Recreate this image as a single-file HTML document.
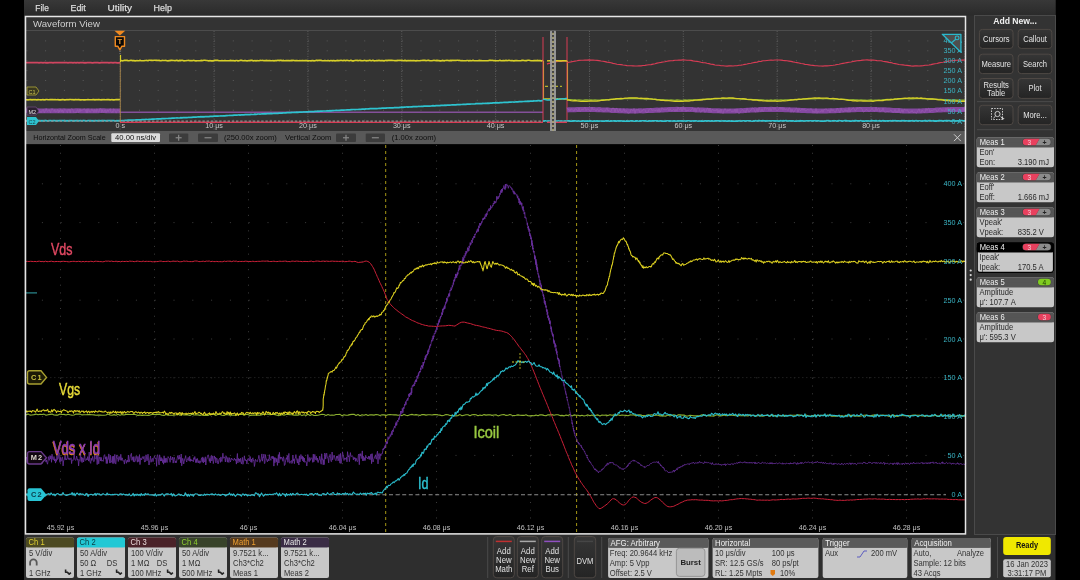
<!DOCTYPE html><html><head><meta charset="utf-8"><style>html,body{margin:0;padding:0;background:#000;width:1080px;height:580px;overflow:hidden}svg{display:block;will-change:transform}text{font-family:"Liberation Sans",sans-serif}</style></head><body><svg width="1080" height="580" viewBox="0 0 1080 580"><rect x="0" y="0" width="1080" height="580" fill="#000" rx="0" /><rect x="24" y="0" width="1031.5" height="580" fill="#2e2e2e" rx="0" /><defs><linearGradient id="mg" x1="0" y1="0" x2="0" y2="1"><stop offset="0" stop-color="#383838"/><stop offset="1" stop-color="#2a2a2a"/></linearGradient></defs><rect x="24" y="0" width="1031.5" height="15.5" fill="url(#mg)" rx="0" /><text x="35.3" y="10.8" font-size="9.6" fill="#dcdcdc" text-anchor="start" font-weight="normal" textLength="13.5" lengthAdjust="spacingAndGlyphs" stroke="#dcdcdc" stroke-width="0.25">File</text><text x="70.5" y="10.8" font-size="9.6" fill="#dcdcdc" text-anchor="start" font-weight="normal" textLength="15.3" lengthAdjust="spacingAndGlyphs" stroke="#dcdcdc" stroke-width="0.25">Edit</text><text x="107.5" y="10.8" font-size="9.6" fill="#dcdcdc" text-anchor="start" font-weight="normal" textLength="24.5" lengthAdjust="spacingAndGlyphs" stroke="#dcdcdc" stroke-width="0.25">Utility</text><text x="153.6" y="10.8" font-size="9.6" fill="#dcdcdc" text-anchor="start" font-weight="normal" textLength="18.4" lengthAdjust="spacingAndGlyphs" stroke="#dcdcdc" stroke-width="0.25">Help</text><rect x="25" y="16" width="941" height="518" fill="#333" rx="0" /><text x="33" y="27" font-size="9.65" fill="#cfcfcf" text-anchor="start" font-weight="normal" >Waveform View</text><line x1="26" y1="30.5" x2="966" y2="30.5" stroke="#4c4c4c" stroke-width="1" /><rect x="26.4" y="40.4" width="1" height="1" fill="#5a5a5a"/><rect x="45.1" y="40.4" width="1" height="1" fill="#5a5a5a"/><rect x="63.9" y="40.4" width="1" height="1" fill="#5a5a5a"/><rect x="82.7" y="40.4" width="1" height="1" fill="#5a5a5a"/><rect x="101.4" y="40.4" width="1" height="1" fill="#5a5a5a"/><rect x="120.2" y="40.4" width="1" height="1" fill="#5a5a5a"/><rect x="139.0" y="40.4" width="1" height="1" fill="#5a5a5a"/><rect x="157.7" y="40.4" width="1" height="1" fill="#5a5a5a"/><rect x="176.5" y="40.4" width="1" height="1" fill="#5a5a5a"/><rect x="195.3" y="40.4" width="1" height="1" fill="#5a5a5a"/><rect x="214.1" y="40.4" width="1" height="1" fill="#5a5a5a"/><rect x="232.8" y="40.4" width="1" height="1" fill="#5a5a5a"/><rect x="251.6" y="40.4" width="1" height="1" fill="#5a5a5a"/><rect x="270.4" y="40.4" width="1" height="1" fill="#5a5a5a"/><rect x="289.1" y="40.4" width="1" height="1" fill="#5a5a5a"/><rect x="307.9" y="40.4" width="1" height="1" fill="#5a5a5a"/><rect x="326.7" y="40.4" width="1" height="1" fill="#5a5a5a"/><rect x="345.4" y="40.4" width="1" height="1" fill="#5a5a5a"/><rect x="364.2" y="40.4" width="1" height="1" fill="#5a5a5a"/><rect x="383.0" y="40.4" width="1" height="1" fill="#5a5a5a"/><rect x="401.8" y="40.4" width="1" height="1" fill="#5a5a5a"/><rect x="420.5" y="40.4" width="1" height="1" fill="#5a5a5a"/><rect x="439.3" y="40.4" width="1" height="1" fill="#5a5a5a"/><rect x="458.1" y="40.4" width="1" height="1" fill="#5a5a5a"/><rect x="476.8" y="40.4" width="1" height="1" fill="#5a5a5a"/><rect x="495.6" y="40.4" width="1" height="1" fill="#5a5a5a"/><rect x="514.4" y="40.4" width="1" height="1" fill="#5a5a5a"/><rect x="533.1" y="40.4" width="1" height="1" fill="#5a5a5a"/><rect x="551.9" y="40.4" width="1" height="1" fill="#5a5a5a"/><rect x="570.7" y="40.4" width="1" height="1" fill="#5a5a5a"/><rect x="589.5" y="40.4" width="1" height="1" fill="#5a5a5a"/><rect x="608.2" y="40.4" width="1" height="1" fill="#5a5a5a"/><rect x="627.0" y="40.4" width="1" height="1" fill="#5a5a5a"/><rect x="645.8" y="40.4" width="1" height="1" fill="#5a5a5a"/><rect x="664.5" y="40.4" width="1" height="1" fill="#5a5a5a"/><rect x="683.3" y="40.4" width="1" height="1" fill="#5a5a5a"/><rect x="702.1" y="40.4" width="1" height="1" fill="#5a5a5a"/><rect x="720.8" y="40.4" width="1" height="1" fill="#5a5a5a"/><rect x="739.6" y="40.4" width="1" height="1" fill="#5a5a5a"/><rect x="758.4" y="40.4" width="1" height="1" fill="#5a5a5a"/><rect x="777.1" y="40.4" width="1" height="1" fill="#5a5a5a"/><rect x="795.9" y="40.4" width="1" height="1" fill="#5a5a5a"/><rect x="814.7" y="40.4" width="1" height="1" fill="#5a5a5a"/><rect x="833.5" y="40.4" width="1" height="1" fill="#5a5a5a"/><rect x="852.2" y="40.4" width="1" height="1" fill="#5a5a5a"/><rect x="871.0" y="40.4" width="1" height="1" fill="#5a5a5a"/><rect x="889.8" y="40.4" width="1" height="1" fill="#5a5a5a"/><rect x="908.5" y="40.4" width="1" height="1" fill="#5a5a5a"/><rect x="927.3" y="40.4" width="1" height="1" fill="#5a5a5a"/><rect x="946.1" y="40.4" width="1" height="1" fill="#5a5a5a"/><rect x="964.9" y="40.4" width="1" height="1" fill="#5a5a5a"/><rect x="26.4" y="50.3" width="1" height="1" fill="#5a5a5a"/><rect x="45.1" y="50.3" width="1" height="1" fill="#5a5a5a"/><rect x="63.9" y="50.3" width="1" height="1" fill="#5a5a5a"/><rect x="82.7" y="50.3" width="1" height="1" fill="#5a5a5a"/><rect x="101.4" y="50.3" width="1" height="1" fill="#5a5a5a"/><rect x="120.2" y="50.3" width="1" height="1" fill="#5a5a5a"/><rect x="139.0" y="50.3" width="1" height="1" fill="#5a5a5a"/><rect x="157.7" y="50.3" width="1" height="1" fill="#5a5a5a"/><rect x="176.5" y="50.3" width="1" height="1" fill="#5a5a5a"/><rect x="195.3" y="50.3" width="1" height="1" fill="#5a5a5a"/><rect x="214.1" y="50.3" width="1" height="1" fill="#5a5a5a"/><rect x="232.8" y="50.3" width="1" height="1" fill="#5a5a5a"/><rect x="251.6" y="50.3" width="1" height="1" fill="#5a5a5a"/><rect x="270.4" y="50.3" width="1" height="1" fill="#5a5a5a"/><rect x="289.1" y="50.3" width="1" height="1" fill="#5a5a5a"/><rect x="307.9" y="50.3" width="1" height="1" fill="#5a5a5a"/><rect x="326.7" y="50.3" width="1" height="1" fill="#5a5a5a"/><rect x="345.4" y="50.3" width="1" height="1" fill="#5a5a5a"/><rect x="364.2" y="50.3" width="1" height="1" fill="#5a5a5a"/><rect x="383.0" y="50.3" width="1" height="1" fill="#5a5a5a"/><rect x="401.8" y="50.3" width="1" height="1" fill="#5a5a5a"/><rect x="420.5" y="50.3" width="1" height="1" fill="#5a5a5a"/><rect x="439.3" y="50.3" width="1" height="1" fill="#5a5a5a"/><rect x="458.1" y="50.3" width="1" height="1" fill="#5a5a5a"/><rect x="476.8" y="50.3" width="1" height="1" fill="#5a5a5a"/><rect x="495.6" y="50.3" width="1" height="1" fill="#5a5a5a"/><rect x="514.4" y="50.3" width="1" height="1" fill="#5a5a5a"/><rect x="533.1" y="50.3" width="1" height="1" fill="#5a5a5a"/><rect x="551.9" y="50.3" width="1" height="1" fill="#5a5a5a"/><rect x="570.7" y="50.3" width="1" height="1" fill="#5a5a5a"/><rect x="589.5" y="50.3" width="1" height="1" fill="#5a5a5a"/><rect x="608.2" y="50.3" width="1" height="1" fill="#5a5a5a"/><rect x="627.0" y="50.3" width="1" height="1" fill="#5a5a5a"/><rect x="645.8" y="50.3" width="1" height="1" fill="#5a5a5a"/><rect x="664.5" y="50.3" width="1" height="1" fill="#5a5a5a"/><rect x="683.3" y="50.3" width="1" height="1" fill="#5a5a5a"/><rect x="702.1" y="50.3" width="1" height="1" fill="#5a5a5a"/><rect x="720.8" y="50.3" width="1" height="1" fill="#5a5a5a"/><rect x="739.6" y="50.3" width="1" height="1" fill="#5a5a5a"/><rect x="758.4" y="50.3" width="1" height="1" fill="#5a5a5a"/><rect x="777.1" y="50.3" width="1" height="1" fill="#5a5a5a"/><rect x="795.9" y="50.3" width="1" height="1" fill="#5a5a5a"/><rect x="814.7" y="50.3" width="1" height="1" fill="#5a5a5a"/><rect x="833.5" y="50.3" width="1" height="1" fill="#5a5a5a"/><rect x="852.2" y="50.3" width="1" height="1" fill="#5a5a5a"/><rect x="871.0" y="50.3" width="1" height="1" fill="#5a5a5a"/><rect x="889.8" y="50.3" width="1" height="1" fill="#5a5a5a"/><rect x="908.5" y="50.3" width="1" height="1" fill="#5a5a5a"/><rect x="927.3" y="50.3" width="1" height="1" fill="#5a5a5a"/><rect x="946.1" y="50.3" width="1" height="1" fill="#5a5a5a"/><rect x="964.9" y="50.3" width="1" height="1" fill="#5a5a5a"/><rect x="26.4" y="60.2" width="1" height="1" fill="#5a5a5a"/><rect x="45.1" y="60.2" width="1" height="1" fill="#5a5a5a"/><rect x="63.9" y="60.2" width="1" height="1" fill="#5a5a5a"/><rect x="82.7" y="60.2" width="1" height="1" fill="#5a5a5a"/><rect x="101.4" y="60.2" width="1" height="1" fill="#5a5a5a"/><rect x="120.2" y="60.2" width="1" height="1" fill="#5a5a5a"/><rect x="139.0" y="60.2" width="1" height="1" fill="#5a5a5a"/><rect x="157.7" y="60.2" width="1" height="1" fill="#5a5a5a"/><rect x="176.5" y="60.2" width="1" height="1" fill="#5a5a5a"/><rect x="195.3" y="60.2" width="1" height="1" fill="#5a5a5a"/><rect x="214.1" y="60.2" width="1" height="1" fill="#5a5a5a"/><rect x="232.8" y="60.2" width="1" height="1" fill="#5a5a5a"/><rect x="251.6" y="60.2" width="1" height="1" fill="#5a5a5a"/><rect x="270.4" y="60.2" width="1" height="1" fill="#5a5a5a"/><rect x="289.1" y="60.2" width="1" height="1" fill="#5a5a5a"/><rect x="307.9" y="60.2" width="1" height="1" fill="#5a5a5a"/><rect x="326.7" y="60.2" width="1" height="1" fill="#5a5a5a"/><rect x="345.4" y="60.2" width="1" height="1" fill="#5a5a5a"/><rect x="364.2" y="60.2" width="1" height="1" fill="#5a5a5a"/><rect x="383.0" y="60.2" width="1" height="1" fill="#5a5a5a"/><rect x="401.8" y="60.2" width="1" height="1" fill="#5a5a5a"/><rect x="420.5" y="60.2" width="1" height="1" fill="#5a5a5a"/><rect x="439.3" y="60.2" width="1" height="1" fill="#5a5a5a"/><rect x="458.1" y="60.2" width="1" height="1" fill="#5a5a5a"/><rect x="476.8" y="60.2" width="1" height="1" fill="#5a5a5a"/><rect x="495.6" y="60.2" width="1" height="1" fill="#5a5a5a"/><rect x="514.4" y="60.2" width="1" height="1" fill="#5a5a5a"/><rect x="533.1" y="60.2" width="1" height="1" fill="#5a5a5a"/><rect x="551.9" y="60.2" width="1" height="1" fill="#5a5a5a"/><rect x="570.7" y="60.2" width="1" height="1" fill="#5a5a5a"/><rect x="589.5" y="60.2" width="1" height="1" fill="#5a5a5a"/><rect x="608.2" y="60.2" width="1" height="1" fill="#5a5a5a"/><rect x="627.0" y="60.2" width="1" height="1" fill="#5a5a5a"/><rect x="645.8" y="60.2" width="1" height="1" fill="#5a5a5a"/><rect x="664.5" y="60.2" width="1" height="1" fill="#5a5a5a"/><rect x="683.3" y="60.2" width="1" height="1" fill="#5a5a5a"/><rect x="702.1" y="60.2" width="1" height="1" fill="#5a5a5a"/><rect x="720.8" y="60.2" width="1" height="1" fill="#5a5a5a"/><rect x="739.6" y="60.2" width="1" height="1" fill="#5a5a5a"/><rect x="758.4" y="60.2" width="1" height="1" fill="#5a5a5a"/><rect x="777.1" y="60.2" width="1" height="1" fill="#5a5a5a"/><rect x="795.9" y="60.2" width="1" height="1" fill="#5a5a5a"/><rect x="814.7" y="60.2" width="1" height="1" fill="#5a5a5a"/><rect x="833.5" y="60.2" width="1" height="1" fill="#5a5a5a"/><rect x="852.2" y="60.2" width="1" height="1" fill="#5a5a5a"/><rect x="871.0" y="60.2" width="1" height="1" fill="#5a5a5a"/><rect x="889.8" y="60.2" width="1" height="1" fill="#5a5a5a"/><rect x="908.5" y="60.2" width="1" height="1" fill="#5a5a5a"/><rect x="927.3" y="60.2" width="1" height="1" fill="#5a5a5a"/><rect x="946.1" y="60.2" width="1" height="1" fill="#5a5a5a"/><rect x="964.9" y="60.2" width="1" height="1" fill="#5a5a5a"/><rect x="26.4" y="70.1" width="1" height="1" fill="#5a5a5a"/><rect x="45.1" y="70.1" width="1" height="1" fill="#5a5a5a"/><rect x="63.9" y="70.1" width="1" height="1" fill="#5a5a5a"/><rect x="82.7" y="70.1" width="1" height="1" fill="#5a5a5a"/><rect x="101.4" y="70.1" width="1" height="1" fill="#5a5a5a"/><rect x="120.2" y="70.1" width="1" height="1" fill="#5a5a5a"/><rect x="139.0" y="70.1" width="1" height="1" fill="#5a5a5a"/><rect x="157.7" y="70.1" width="1" height="1" fill="#5a5a5a"/><rect x="176.5" y="70.1" width="1" height="1" fill="#5a5a5a"/><rect x="195.3" y="70.1" width="1" height="1" fill="#5a5a5a"/><rect x="214.1" y="70.1" width="1" height="1" fill="#5a5a5a"/><rect x="232.8" y="70.1" width="1" height="1" fill="#5a5a5a"/><rect x="251.6" y="70.1" width="1" height="1" fill="#5a5a5a"/><rect x="270.4" y="70.1" width="1" height="1" fill="#5a5a5a"/><rect x="289.1" y="70.1" width="1" height="1" fill="#5a5a5a"/><rect x="307.9" y="70.1" width="1" height="1" fill="#5a5a5a"/><rect x="326.7" y="70.1" width="1" height="1" fill="#5a5a5a"/><rect x="345.4" y="70.1" width="1" height="1" fill="#5a5a5a"/><rect x="364.2" y="70.1" width="1" height="1" fill="#5a5a5a"/><rect x="383.0" y="70.1" width="1" height="1" fill="#5a5a5a"/><rect x="401.8" y="70.1" width="1" height="1" fill="#5a5a5a"/><rect x="420.5" y="70.1" width="1" height="1" fill="#5a5a5a"/><rect x="439.3" y="70.1" width="1" height="1" fill="#5a5a5a"/><rect x="458.1" y="70.1" width="1" height="1" fill="#5a5a5a"/><rect x="476.8" y="70.1" width="1" height="1" fill="#5a5a5a"/><rect x="495.6" y="70.1" width="1" height="1" fill="#5a5a5a"/><rect x="514.4" y="70.1" width="1" height="1" fill="#5a5a5a"/><rect x="533.1" y="70.1" width="1" height="1" fill="#5a5a5a"/><rect x="551.9" y="70.1" width="1" height="1" fill="#5a5a5a"/><rect x="570.7" y="70.1" width="1" height="1" fill="#5a5a5a"/><rect x="589.5" y="70.1" width="1" height="1" fill="#5a5a5a"/><rect x="608.2" y="70.1" width="1" height="1" fill="#5a5a5a"/><rect x="627.0" y="70.1" width="1" height="1" fill="#5a5a5a"/><rect x="645.8" y="70.1" width="1" height="1" fill="#5a5a5a"/><rect x="664.5" y="70.1" width="1" height="1" fill="#5a5a5a"/><rect x="683.3" y="70.1" width="1" height="1" fill="#5a5a5a"/><rect x="702.1" y="70.1" width="1" height="1" fill="#5a5a5a"/><rect x="720.8" y="70.1" width="1" height="1" fill="#5a5a5a"/><rect x="739.6" y="70.1" width="1" height="1" fill="#5a5a5a"/><rect x="758.4" y="70.1" width="1" height="1" fill="#5a5a5a"/><rect x="777.1" y="70.1" width="1" height="1" fill="#5a5a5a"/><rect x="795.9" y="70.1" width="1" height="1" fill="#5a5a5a"/><rect x="814.7" y="70.1" width="1" height="1" fill="#5a5a5a"/><rect x="833.5" y="70.1" width="1" height="1" fill="#5a5a5a"/><rect x="852.2" y="70.1" width="1" height="1" fill="#5a5a5a"/><rect x="871.0" y="70.1" width="1" height="1" fill="#5a5a5a"/><rect x="889.8" y="70.1" width="1" height="1" fill="#5a5a5a"/><rect x="908.5" y="70.1" width="1" height="1" fill="#5a5a5a"/><rect x="927.3" y="70.1" width="1" height="1" fill="#5a5a5a"/><rect x="946.1" y="70.1" width="1" height="1" fill="#5a5a5a"/><rect x="964.9" y="70.1" width="1" height="1" fill="#5a5a5a"/><rect x="26.4" y="80.0" width="1" height="1" fill="#5a5a5a"/><rect x="45.1" y="80.0" width="1" height="1" fill="#5a5a5a"/><rect x="63.9" y="80.0" width="1" height="1" fill="#5a5a5a"/><rect x="82.7" y="80.0" width="1" height="1" fill="#5a5a5a"/><rect x="101.4" y="80.0" width="1" height="1" fill="#5a5a5a"/><rect x="120.2" y="80.0" width="1" height="1" fill="#5a5a5a"/><rect x="139.0" y="80.0" width="1" height="1" fill="#5a5a5a"/><rect x="157.7" y="80.0" width="1" height="1" fill="#5a5a5a"/><rect x="176.5" y="80.0" width="1" height="1" fill="#5a5a5a"/><rect x="195.3" y="80.0" width="1" height="1" fill="#5a5a5a"/><rect x="214.1" y="80.0" width="1" height="1" fill="#5a5a5a"/><rect x="232.8" y="80.0" width="1" height="1" fill="#5a5a5a"/><rect x="251.6" y="80.0" width="1" height="1" fill="#5a5a5a"/><rect x="270.4" y="80.0" width="1" height="1" fill="#5a5a5a"/><rect x="289.1" y="80.0" width="1" height="1" fill="#5a5a5a"/><rect x="307.9" y="80.0" width="1" height="1" fill="#5a5a5a"/><rect x="326.7" y="80.0" width="1" height="1" fill="#5a5a5a"/><rect x="345.4" y="80.0" width="1" height="1" fill="#5a5a5a"/><rect x="364.2" y="80.0" width="1" height="1" fill="#5a5a5a"/><rect x="383.0" y="80.0" width="1" height="1" fill="#5a5a5a"/><rect x="401.8" y="80.0" width="1" height="1" fill="#5a5a5a"/><rect x="420.5" y="80.0" width="1" height="1" fill="#5a5a5a"/><rect x="439.3" y="80.0" width="1" height="1" fill="#5a5a5a"/><rect x="458.1" y="80.0" width="1" height="1" fill="#5a5a5a"/><rect x="476.8" y="80.0" width="1" height="1" fill="#5a5a5a"/><rect x="495.6" y="80.0" width="1" height="1" fill="#5a5a5a"/><rect x="514.4" y="80.0" width="1" height="1" fill="#5a5a5a"/><rect x="533.1" y="80.0" width="1" height="1" fill="#5a5a5a"/><rect x="551.9" y="80.0" width="1" height="1" fill="#5a5a5a"/><rect x="570.7" y="80.0" width="1" height="1" fill="#5a5a5a"/><rect x="589.5" y="80.0" width="1" height="1" fill="#5a5a5a"/><rect x="608.2" y="80.0" width="1" height="1" fill="#5a5a5a"/><rect x="627.0" y="80.0" width="1" height="1" fill="#5a5a5a"/><rect x="645.8" y="80.0" width="1" height="1" fill="#5a5a5a"/><rect x="664.5" y="80.0" width="1" height="1" fill="#5a5a5a"/><rect x="683.3" y="80.0" width="1" height="1" fill="#5a5a5a"/><rect x="702.1" y="80.0" width="1" height="1" fill="#5a5a5a"/><rect x="720.8" y="80.0" width="1" height="1" fill="#5a5a5a"/><rect x="739.6" y="80.0" width="1" height="1" fill="#5a5a5a"/><rect x="758.4" y="80.0" width="1" height="1" fill="#5a5a5a"/><rect x="777.1" y="80.0" width="1" height="1" fill="#5a5a5a"/><rect x="795.9" y="80.0" width="1" height="1" fill="#5a5a5a"/><rect x="814.7" y="80.0" width="1" height="1" fill="#5a5a5a"/><rect x="833.5" y="80.0" width="1" height="1" fill="#5a5a5a"/><rect x="852.2" y="80.0" width="1" height="1" fill="#5a5a5a"/><rect x="871.0" y="80.0" width="1" height="1" fill="#5a5a5a"/><rect x="889.8" y="80.0" width="1" height="1" fill="#5a5a5a"/><rect x="908.5" y="80.0" width="1" height="1" fill="#5a5a5a"/><rect x="927.3" y="80.0" width="1" height="1" fill="#5a5a5a"/><rect x="946.1" y="80.0" width="1" height="1" fill="#5a5a5a"/><rect x="964.9" y="80.0" width="1" height="1" fill="#5a5a5a"/><rect x="26.4" y="89.9" width="1" height="1" fill="#5a5a5a"/><rect x="45.1" y="89.9" width="1" height="1" fill="#5a5a5a"/><rect x="63.9" y="89.9" width="1" height="1" fill="#5a5a5a"/><rect x="82.7" y="89.9" width="1" height="1" fill="#5a5a5a"/><rect x="101.4" y="89.9" width="1" height="1" fill="#5a5a5a"/><rect x="120.2" y="89.9" width="1" height="1" fill="#5a5a5a"/><rect x="139.0" y="89.9" width="1" height="1" fill="#5a5a5a"/><rect x="157.7" y="89.9" width="1" height="1" fill="#5a5a5a"/><rect x="176.5" y="89.9" width="1" height="1" fill="#5a5a5a"/><rect x="195.3" y="89.9" width="1" height="1" fill="#5a5a5a"/><rect x="214.1" y="89.9" width="1" height="1" fill="#5a5a5a"/><rect x="232.8" y="89.9" width="1" height="1" fill="#5a5a5a"/><rect x="251.6" y="89.9" width="1" height="1" fill="#5a5a5a"/><rect x="270.4" y="89.9" width="1" height="1" fill="#5a5a5a"/><rect x="289.1" y="89.9" width="1" height="1" fill="#5a5a5a"/><rect x="307.9" y="89.9" width="1" height="1" fill="#5a5a5a"/><rect x="326.7" y="89.9" width="1" height="1" fill="#5a5a5a"/><rect x="345.4" y="89.9" width="1" height="1" fill="#5a5a5a"/><rect x="364.2" y="89.9" width="1" height="1" fill="#5a5a5a"/><rect x="383.0" y="89.9" width="1" height="1" fill="#5a5a5a"/><rect x="401.8" y="89.9" width="1" height="1" fill="#5a5a5a"/><rect x="420.5" y="89.9" width="1" height="1" fill="#5a5a5a"/><rect x="439.3" y="89.9" width="1" height="1" fill="#5a5a5a"/><rect x="458.1" y="89.9" width="1" height="1" fill="#5a5a5a"/><rect x="476.8" y="89.9" width="1" height="1" fill="#5a5a5a"/><rect x="495.6" y="89.9" width="1" height="1" fill="#5a5a5a"/><rect x="514.4" y="89.9" width="1" height="1" fill="#5a5a5a"/><rect x="533.1" y="89.9" width="1" height="1" fill="#5a5a5a"/><rect x="551.9" y="89.9" width="1" height="1" fill="#5a5a5a"/><rect x="570.7" y="89.9" width="1" height="1" fill="#5a5a5a"/><rect x="589.5" y="89.9" width="1" height="1" fill="#5a5a5a"/><rect x="608.2" y="89.9" width="1" height="1" fill="#5a5a5a"/><rect x="627.0" y="89.9" width="1" height="1" fill="#5a5a5a"/><rect x="645.8" y="89.9" width="1" height="1" fill="#5a5a5a"/><rect x="664.5" y="89.9" width="1" height="1" fill="#5a5a5a"/><rect x="683.3" y="89.9" width="1" height="1" fill="#5a5a5a"/><rect x="702.1" y="89.9" width="1" height="1" fill="#5a5a5a"/><rect x="720.8" y="89.9" width="1" height="1" fill="#5a5a5a"/><rect x="739.6" y="89.9" width="1" height="1" fill="#5a5a5a"/><rect x="758.4" y="89.9" width="1" height="1" fill="#5a5a5a"/><rect x="777.1" y="89.9" width="1" height="1" fill="#5a5a5a"/><rect x="795.9" y="89.9" width="1" height="1" fill="#5a5a5a"/><rect x="814.7" y="89.9" width="1" height="1" fill="#5a5a5a"/><rect x="833.5" y="89.9" width="1" height="1" fill="#5a5a5a"/><rect x="852.2" y="89.9" width="1" height="1" fill="#5a5a5a"/><rect x="871.0" y="89.9" width="1" height="1" fill="#5a5a5a"/><rect x="889.8" y="89.9" width="1" height="1" fill="#5a5a5a"/><rect x="908.5" y="89.9" width="1" height="1" fill="#5a5a5a"/><rect x="927.3" y="89.9" width="1" height="1" fill="#5a5a5a"/><rect x="946.1" y="89.9" width="1" height="1" fill="#5a5a5a"/><rect x="964.9" y="89.9" width="1" height="1" fill="#5a5a5a"/><rect x="26.4" y="99.8" width="1" height="1" fill="#5a5a5a"/><rect x="45.1" y="99.8" width="1" height="1" fill="#5a5a5a"/><rect x="63.9" y="99.8" width="1" height="1" fill="#5a5a5a"/><rect x="82.7" y="99.8" width="1" height="1" fill="#5a5a5a"/><rect x="101.4" y="99.8" width="1" height="1" fill="#5a5a5a"/><rect x="120.2" y="99.8" width="1" height="1" fill="#5a5a5a"/><rect x="139.0" y="99.8" width="1" height="1" fill="#5a5a5a"/><rect x="157.7" y="99.8" width="1" height="1" fill="#5a5a5a"/><rect x="176.5" y="99.8" width="1" height="1" fill="#5a5a5a"/><rect x="195.3" y="99.8" width="1" height="1" fill="#5a5a5a"/><rect x="214.1" y="99.8" width="1" height="1" fill="#5a5a5a"/><rect x="232.8" y="99.8" width="1" height="1" fill="#5a5a5a"/><rect x="251.6" y="99.8" width="1" height="1" fill="#5a5a5a"/><rect x="270.4" y="99.8" width="1" height="1" fill="#5a5a5a"/><rect x="289.1" y="99.8" width="1" height="1" fill="#5a5a5a"/><rect x="307.9" y="99.8" width="1" height="1" fill="#5a5a5a"/><rect x="326.7" y="99.8" width="1" height="1" fill="#5a5a5a"/><rect x="345.4" y="99.8" width="1" height="1" fill="#5a5a5a"/><rect x="364.2" y="99.8" width="1" height="1" fill="#5a5a5a"/><rect x="383.0" y="99.8" width="1" height="1" fill="#5a5a5a"/><rect x="401.8" y="99.8" width="1" height="1" fill="#5a5a5a"/><rect x="420.5" y="99.8" width="1" height="1" fill="#5a5a5a"/><rect x="439.3" y="99.8" width="1" height="1" fill="#5a5a5a"/><rect x="458.1" y="99.8" width="1" height="1" fill="#5a5a5a"/><rect x="476.8" y="99.8" width="1" height="1" fill="#5a5a5a"/><rect x="495.6" y="99.8" width="1" height="1" fill="#5a5a5a"/><rect x="514.4" y="99.8" width="1" height="1" fill="#5a5a5a"/><rect x="533.1" y="99.8" width="1" height="1" fill="#5a5a5a"/><rect x="551.9" y="99.8" width="1" height="1" fill="#5a5a5a"/><rect x="570.7" y="99.8" width="1" height="1" fill="#5a5a5a"/><rect x="589.5" y="99.8" width="1" height="1" fill="#5a5a5a"/><rect x="608.2" y="99.8" width="1" height="1" fill="#5a5a5a"/><rect x="627.0" y="99.8" width="1" height="1" fill="#5a5a5a"/><rect x="645.8" y="99.8" width="1" height="1" fill="#5a5a5a"/><rect x="664.5" y="99.8" width="1" height="1" fill="#5a5a5a"/><rect x="683.3" y="99.8" width="1" height="1" fill="#5a5a5a"/><rect x="702.1" y="99.8" width="1" height="1" fill="#5a5a5a"/><rect x="720.8" y="99.8" width="1" height="1" fill="#5a5a5a"/><rect x="739.6" y="99.8" width="1" height="1" fill="#5a5a5a"/><rect x="758.4" y="99.8" width="1" height="1" fill="#5a5a5a"/><rect x="777.1" y="99.8" width="1" height="1" fill="#5a5a5a"/><rect x="795.9" y="99.8" width="1" height="1" fill="#5a5a5a"/><rect x="814.7" y="99.8" width="1" height="1" fill="#5a5a5a"/><rect x="833.5" y="99.8" width="1" height="1" fill="#5a5a5a"/><rect x="852.2" y="99.8" width="1" height="1" fill="#5a5a5a"/><rect x="871.0" y="99.8" width="1" height="1" fill="#5a5a5a"/><rect x="889.8" y="99.8" width="1" height="1" fill="#5a5a5a"/><rect x="908.5" y="99.8" width="1" height="1" fill="#5a5a5a"/><rect x="927.3" y="99.8" width="1" height="1" fill="#5a5a5a"/><rect x="946.1" y="99.8" width="1" height="1" fill="#5a5a5a"/><rect x="964.9" y="99.8" width="1" height="1" fill="#5a5a5a"/><rect x="26.4" y="109.7" width="1" height="1" fill="#5a5a5a"/><rect x="45.1" y="109.7" width="1" height="1" fill="#5a5a5a"/><rect x="63.9" y="109.7" width="1" height="1" fill="#5a5a5a"/><rect x="82.7" y="109.7" width="1" height="1" fill="#5a5a5a"/><rect x="101.4" y="109.7" width="1" height="1" fill="#5a5a5a"/><rect x="120.2" y="109.7" width="1" height="1" fill="#5a5a5a"/><rect x="139.0" y="109.7" width="1" height="1" fill="#5a5a5a"/><rect x="157.7" y="109.7" width="1" height="1" fill="#5a5a5a"/><rect x="176.5" y="109.7" width="1" height="1" fill="#5a5a5a"/><rect x="195.3" y="109.7" width="1" height="1" fill="#5a5a5a"/><rect x="214.1" y="109.7" width="1" height="1" fill="#5a5a5a"/><rect x="232.8" y="109.7" width="1" height="1" fill="#5a5a5a"/><rect x="251.6" y="109.7" width="1" height="1" fill="#5a5a5a"/><rect x="270.4" y="109.7" width="1" height="1" fill="#5a5a5a"/><rect x="289.1" y="109.7" width="1" height="1" fill="#5a5a5a"/><rect x="307.9" y="109.7" width="1" height="1" fill="#5a5a5a"/><rect x="326.7" y="109.7" width="1" height="1" fill="#5a5a5a"/><rect x="345.4" y="109.7" width="1" height="1" fill="#5a5a5a"/><rect x="364.2" y="109.7" width="1" height="1" fill="#5a5a5a"/><rect x="383.0" y="109.7" width="1" height="1" fill="#5a5a5a"/><rect x="401.8" y="109.7" width="1" height="1" fill="#5a5a5a"/><rect x="420.5" y="109.7" width="1" height="1" fill="#5a5a5a"/><rect x="439.3" y="109.7" width="1" height="1" fill="#5a5a5a"/><rect x="458.1" y="109.7" width="1" height="1" fill="#5a5a5a"/><rect x="476.8" y="109.7" width="1" height="1" fill="#5a5a5a"/><rect x="495.6" y="109.7" width="1" height="1" fill="#5a5a5a"/><rect x="514.4" y="109.7" width="1" height="1" fill="#5a5a5a"/><rect x="533.1" y="109.7" width="1" height="1" fill="#5a5a5a"/><rect x="551.9" y="109.7" width="1" height="1" fill="#5a5a5a"/><rect x="570.7" y="109.7" width="1" height="1" fill="#5a5a5a"/><rect x="589.5" y="109.7" width="1" height="1" fill="#5a5a5a"/><rect x="608.2" y="109.7" width="1" height="1" fill="#5a5a5a"/><rect x="627.0" y="109.7" width="1" height="1" fill="#5a5a5a"/><rect x="645.8" y="109.7" width="1" height="1" fill="#5a5a5a"/><rect x="664.5" y="109.7" width="1" height="1" fill="#5a5a5a"/><rect x="683.3" y="109.7" width="1" height="1" fill="#5a5a5a"/><rect x="702.1" y="109.7" width="1" height="1" fill="#5a5a5a"/><rect x="720.8" y="109.7" width="1" height="1" fill="#5a5a5a"/><rect x="739.6" y="109.7" width="1" height="1" fill="#5a5a5a"/><rect x="758.4" y="109.7" width="1" height="1" fill="#5a5a5a"/><rect x="777.1" y="109.7" width="1" height="1" fill="#5a5a5a"/><rect x="795.9" y="109.7" width="1" height="1" fill="#5a5a5a"/><rect x="814.7" y="109.7" width="1" height="1" fill="#5a5a5a"/><rect x="833.5" y="109.7" width="1" height="1" fill="#5a5a5a"/><rect x="852.2" y="109.7" width="1" height="1" fill="#5a5a5a"/><rect x="871.0" y="109.7" width="1" height="1" fill="#5a5a5a"/><rect x="889.8" y="109.7" width="1" height="1" fill="#5a5a5a"/><rect x="908.5" y="109.7" width="1" height="1" fill="#5a5a5a"/><rect x="927.3" y="109.7" width="1" height="1" fill="#5a5a5a"/><rect x="946.1" y="109.7" width="1" height="1" fill="#5a5a5a"/><rect x="964.9" y="109.7" width="1" height="1" fill="#5a5a5a"/><rect x="26.4" y="119.6" width="1" height="1" fill="#5a5a5a"/><rect x="45.1" y="119.6" width="1" height="1" fill="#5a5a5a"/><rect x="63.9" y="119.6" width="1" height="1" fill="#5a5a5a"/><rect x="82.7" y="119.6" width="1" height="1" fill="#5a5a5a"/><rect x="101.4" y="119.6" width="1" height="1" fill="#5a5a5a"/><rect x="120.2" y="119.6" width="1" height="1" fill="#5a5a5a"/><rect x="139.0" y="119.6" width="1" height="1" fill="#5a5a5a"/><rect x="157.7" y="119.6" width="1" height="1" fill="#5a5a5a"/><rect x="176.5" y="119.6" width="1" height="1" fill="#5a5a5a"/><rect x="195.3" y="119.6" width="1" height="1" fill="#5a5a5a"/><rect x="214.1" y="119.6" width="1" height="1" fill="#5a5a5a"/><rect x="232.8" y="119.6" width="1" height="1" fill="#5a5a5a"/><rect x="251.6" y="119.6" width="1" height="1" fill="#5a5a5a"/><rect x="270.4" y="119.6" width="1" height="1" fill="#5a5a5a"/><rect x="289.1" y="119.6" width="1" height="1" fill="#5a5a5a"/><rect x="307.9" y="119.6" width="1" height="1" fill="#5a5a5a"/><rect x="326.7" y="119.6" width="1" height="1" fill="#5a5a5a"/><rect x="345.4" y="119.6" width="1" height="1" fill="#5a5a5a"/><rect x="364.2" y="119.6" width="1" height="1" fill="#5a5a5a"/><rect x="383.0" y="119.6" width="1" height="1" fill="#5a5a5a"/><rect x="401.8" y="119.6" width="1" height="1" fill="#5a5a5a"/><rect x="420.5" y="119.6" width="1" height="1" fill="#5a5a5a"/><rect x="439.3" y="119.6" width="1" height="1" fill="#5a5a5a"/><rect x="458.1" y="119.6" width="1" height="1" fill="#5a5a5a"/><rect x="476.8" y="119.6" width="1" height="1" fill="#5a5a5a"/><rect x="495.6" y="119.6" width="1" height="1" fill="#5a5a5a"/><rect x="514.4" y="119.6" width="1" height="1" fill="#5a5a5a"/><rect x="533.1" y="119.6" width="1" height="1" fill="#5a5a5a"/><rect x="551.9" y="119.6" width="1" height="1" fill="#5a5a5a"/><rect x="570.7" y="119.6" width="1" height="1" fill="#5a5a5a"/><rect x="589.5" y="119.6" width="1" height="1" fill="#5a5a5a"/><rect x="608.2" y="119.6" width="1" height="1" fill="#5a5a5a"/><rect x="627.0" y="119.6" width="1" height="1" fill="#5a5a5a"/><rect x="645.8" y="119.6" width="1" height="1" fill="#5a5a5a"/><rect x="664.5" y="119.6" width="1" height="1" fill="#5a5a5a"/><rect x="683.3" y="119.6" width="1" height="1" fill="#5a5a5a"/><rect x="702.1" y="119.6" width="1" height="1" fill="#5a5a5a"/><rect x="720.8" y="119.6" width="1" height="1" fill="#5a5a5a"/><rect x="739.6" y="119.6" width="1" height="1" fill="#5a5a5a"/><rect x="758.4" y="119.6" width="1" height="1" fill="#5a5a5a"/><rect x="777.1" y="119.6" width="1" height="1" fill="#5a5a5a"/><rect x="795.9" y="119.6" width="1" height="1" fill="#5a5a5a"/><rect x="814.7" y="119.6" width="1" height="1" fill="#5a5a5a"/><rect x="833.5" y="119.6" width="1" height="1" fill="#5a5a5a"/><rect x="852.2" y="119.6" width="1" height="1" fill="#5a5a5a"/><rect x="871.0" y="119.6" width="1" height="1" fill="#5a5a5a"/><rect x="889.8" y="119.6" width="1" height="1" fill="#5a5a5a"/><rect x="908.5" y="119.6" width="1" height="1" fill="#5a5a5a"/><rect x="927.3" y="119.6" width="1" height="1" fill="#5a5a5a"/><rect x="946.1" y="119.6" width="1" height="1" fill="#5a5a5a"/><rect x="964.9" y="119.6" width="1" height="1" fill="#5a5a5a"/><line x1="120.2" y1="31" x2="120.2" y2="130" stroke="#5c5c5c" stroke-width="1" stroke-dasharray="1 1.5"/><line x1="214.05" y1="31" x2="214.05" y2="130" stroke="#5c5c5c" stroke-width="1" stroke-dasharray="1 1.5"/><line x1="307.9" y1="31" x2="307.9" y2="130" stroke="#5c5c5c" stroke-width="1" stroke-dasharray="1 1.5"/><line x1="401.74999999999994" y1="31" x2="401.74999999999994" y2="130" stroke="#5c5c5c" stroke-width="1" stroke-dasharray="1 1.5"/><line x1="495.59999999999997" y1="31" x2="495.59999999999997" y2="130" stroke="#5c5c5c" stroke-width="1" stroke-dasharray="1 1.5"/><line x1="589.45" y1="31" x2="589.45" y2="130" stroke="#5c5c5c" stroke-width="1" stroke-dasharray="1 1.5"/><line x1="683.3" y1="31" x2="683.3" y2="130" stroke="#5c5c5c" stroke-width="1" stroke-dasharray="1 1.5"/><line x1="777.15" y1="31" x2="777.15" y2="130" stroke="#5c5c5c" stroke-width="1" stroke-dasharray="1 1.5"/><line x1="871.0" y1="31" x2="871.0" y2="130" stroke="#5c5c5c" stroke-width="1" stroke-dasharray="1 1.5"/><line x1="964.85" y1="31" x2="964.85" y2="130" stroke="#5c5c5c" stroke-width="1" stroke-dasharray="1 1.5"/><polyline points="26.0,62.7 27.0,62.6 28.0,62.7 29.0,62.6 30.0,62.7 31.0,62.7 32.0,62.6 33.0,62.7 34.0,62.6 35.0,62.7 36.0,62.6 37.0,62.6 38.0,62.7 39.0,62.8 40.0,62.6 41.0,62.6 42.0,62.7 43.0,62.8 44.0,62.7 45.0,62.7 46.0,62.8 47.0,62.6 48.0,62.8 49.0,62.7 50.0,62.6 51.0,62.6 52.0,62.7 53.0,62.8 54.0,62.6 55.0,62.7 56.0,62.7 57.0,62.7 58.0,62.7 59.0,62.6 60.0,62.6 61.0,62.6 62.0,62.7 63.0,62.7 64.0,62.7 65.0,62.7 66.0,62.7 67.0,62.7 68.0,62.8 69.0,62.7 70.0,62.6 71.0,62.7 72.0,62.7 73.0,62.8 74.0,62.7 75.0,62.7 76.0,62.8 77.0,62.6 78.0,62.7 79.0,62.8 80.0,62.6 81.0,62.7 82.0,62.6 83.0,62.7 84.0,62.8 85.0,62.7 86.0,62.8 87.0,62.7 88.0,62.7 89.0,62.7 90.0,62.7 91.0,62.7 92.0,62.8 93.0,62.8 94.0,62.7 95.0,62.7 96.0,62.6 97.0,62.7 98.0,62.7 99.0,62.8 100.0,62.8 101.0,62.7 102.0,62.7 103.0,62.7 104.0,62.6 105.0,62.7 106.0,62.6 107.0,62.6 108.0,62.6 109.0,62.8 110.0,62.6 111.0,62.6 112.0,62.7 113.0,62.8 114.0,62.6 115.0,62.7 116.0,62.7 117.0,62.8 118.0,62.8 119.0,62.8 120.0,62.7" fill="none" stroke="#d04560" stroke-width="1.8" stroke-linejoin="round" opacity="1.0"/><polyline points="120.0,60.5 121.0,60.5 122.0,60.8 123.0,60.9 124.0,60.4 125.0,60.4 126.0,60.4 127.0,60.4 128.0,60.6 129.0,60.7 130.0,60.5 131.0,60.3 132.0,60.6 133.0,60.5 134.0,60.6 135.0,60.9 136.0,60.7 137.0,60.6 138.0,60.7 139.0,60.7 140.0,60.3 141.0,60.8 142.0,60.8 143.0,60.8 144.0,60.8 145.0,60.5 146.0,60.5 147.0,60.4 148.0,60.7 149.0,60.3 150.0,60.3 151.0,60.4 152.0,60.4 153.0,60.5 154.0,60.3 155.0,60.3 156.0,60.4 157.0,60.4 158.0,60.5 159.0,60.3 160.0,60.8 161.0,60.7 162.0,60.4 163.0,60.5 164.0,60.5 165.0,60.5 166.0,60.4 167.0,60.8 168.0,60.9 169.0,60.6 170.0,60.6 171.0,60.4 172.0,60.4 173.0,60.5 174.0,60.5 175.0,60.8 176.0,60.4 177.0,60.3 178.0,60.9 179.0,60.6 180.0,60.4 181.0,60.6 182.0,60.3 183.0,60.6 184.0,60.9 185.0,60.8 186.0,60.7 187.0,60.5 188.0,60.5 189.0,60.4 190.0,60.8 191.0,60.6 192.0,60.8 193.0,60.5 194.0,60.4 195.0,60.8 196.0,60.9 197.0,60.8 198.0,60.8 199.0,60.8 200.0,60.7 201.0,60.4 202.0,60.6 203.0,60.5 204.0,60.3 205.0,60.3 206.0,60.5 207.0,60.5 208.0,60.7 209.0,60.9 210.0,60.6 211.0,60.9 212.0,60.9 213.0,60.9 214.0,60.5 215.0,60.4 216.0,60.4 217.0,60.4 218.0,60.4 219.0,60.7 220.0,60.8 221.0,60.8 222.0,60.6 223.0,60.7 224.0,60.8 225.0,60.4 226.0,60.7 227.0,60.8 228.0,60.8 229.0,60.8 230.0,60.6 231.0,60.4 232.0,60.8 233.0,60.5 234.0,60.8 235.0,60.9 236.0,60.5 237.0,60.5 238.0,60.9 239.0,60.7 240.0,60.4 241.0,60.4 242.0,60.4 243.0,60.8 244.0,60.8 245.0,60.4 246.0,60.8 247.0,60.9 248.0,60.7 249.0,60.5 250.0,60.6 251.0,60.4 252.0,60.3 253.0,60.9 254.0,60.7 255.0,60.6 256.0,60.9 257.0,60.6 258.0,60.8 259.0,60.8 260.0,60.4 261.0,60.5 262.0,60.5 263.0,60.4 264.0,60.7 265.0,60.5 266.0,60.6 267.0,60.4 268.0,60.8 269.0,60.5 270.0,60.6 271.0,60.7 272.0,60.8 273.0,60.6 274.0,60.9 275.0,60.6 276.0,60.6 277.0,60.6 278.0,60.3 279.0,60.6 280.0,60.4 281.0,60.3 282.0,60.8 283.0,60.4 284.0,60.6 285.0,60.7 286.0,60.6 287.0,60.5 288.0,60.6 289.0,60.6 290.0,60.8 291.0,60.4 292.0,60.6 293.0,60.4 294.0,60.5 295.0,60.8 296.0,60.6 297.0,60.6 298.0,60.8 299.0,60.8 300.0,60.6 301.0,60.7 302.0,60.6 303.0,60.6 304.0,60.7 305.0,60.6 306.0,60.6 307.0,60.6 308.0,60.9 309.0,60.7 310.0,60.8 311.0,60.9 312.0,60.5 313.0,60.6 314.0,60.9 315.0,60.8 316.0,60.4 317.0,60.4 318.0,60.6 319.0,60.3 320.0,60.4 321.0,60.3 322.0,60.7 323.0,60.8 324.0,60.8 325.0,60.4 326.0,60.7 327.0,60.7 328.0,60.4 329.0,60.8 330.0,60.9 331.0,60.4 332.0,60.9 333.0,60.5 334.0,60.6 335.0,60.9 336.0,60.8 337.0,60.4 338.0,60.6 339.0,60.6 340.0,60.5 341.0,60.4 342.0,60.5 343.0,60.7 344.0,60.3 345.0,60.6 346.0,60.6 347.0,60.3 348.0,60.5 349.0,60.7 350.0,60.6 351.0,60.3 352.0,60.9 353.0,60.8 354.0,60.9 355.0,60.4 356.0,60.5 357.0,60.3 358.0,60.8 359.0,60.5 360.0,60.4 361.0,60.6 362.0,60.8 363.0,60.8 364.0,60.5 365.0,60.4 366.0,60.9 367.0,60.6 368.0,60.7 369.0,60.4 370.0,60.3 371.0,60.7 372.0,60.6 373.0,60.3 374.0,60.9 375.0,60.7 376.0,60.8 377.0,60.4 378.0,60.8 379.0,60.3 380.0,60.8 381.0,60.6 382.0,60.5 383.0,60.6 384.0,60.9 385.0,60.5 386.0,60.4 387.0,60.6 388.0,60.4 389.0,60.4 390.0,60.4 391.0,60.3 392.0,60.4 393.0,60.5 394.0,60.5 395.0,60.8 396.0,60.5 397.0,60.6 398.0,60.4 399.0,60.5 400.0,60.3 401.0,60.5 402.0,60.3 403.0,60.7 404.0,60.6 405.0,60.4 406.0,60.6 407.0,60.9 408.0,60.4 409.0,60.8 410.0,60.6 411.0,60.6 412.0,60.8 413.0,60.5 414.0,60.6 415.0,60.7 416.0,60.9 417.0,60.5 418.0,60.8 419.0,60.7 420.0,60.7 421.0,60.5 422.0,60.5 423.0,60.3 424.0,60.4 425.0,60.3 426.0,60.7 427.0,60.5 428.0,60.4 429.0,60.4 430.0,60.8 431.0,60.8 432.0,60.7 433.0,60.5 434.0,60.4 435.0,60.5 436.0,60.6 437.0,60.4 438.0,60.6 439.0,60.5 440.0,60.9 441.0,60.9 442.0,60.6 443.0,60.4 444.0,60.9 445.0,60.5 446.0,60.5 447.0,60.3 448.0,60.5 449.0,60.6 450.0,60.6 451.0,60.4 452.0,60.6 453.0,60.3 454.0,60.5 455.0,60.4 456.0,60.5 457.0,60.3 458.0,60.3 459.0,60.5 460.0,60.4 461.0,60.7 462.0,60.6 463.0,60.8 464.0,60.7 465.0,60.7 466.0,60.8 467.0,60.5 468.0,60.5 469.0,60.9 470.0,60.4 471.0,60.7 472.0,60.7 473.0,60.3 474.0,60.8 475.0,60.8 476.0,60.7 477.0,60.7 478.0,60.8 479.0,60.4 480.0,60.6 481.0,60.6 482.0,60.8 483.0,60.8 484.0,60.8 485.0,60.7 486.0,60.8 487.0,60.7 488.0,60.7 489.0,60.4 490.0,60.3 491.0,60.4 492.0,60.5 493.0,60.4 494.0,60.8 495.0,60.6 496.0,60.7 497.0,60.7 498.0,60.7 499.0,60.6 500.0,60.3 501.0,60.8 502.0,60.7 503.0,60.6 504.0,60.6 505.0,60.7 506.0,60.3 507.0,60.7 508.0,60.5 509.0,60.3 510.0,60.5 511.0,60.7 512.0,60.4 513.0,60.7 514.0,60.9 515.0,60.6 516.0,60.5 517.0,60.6 518.0,60.7 519.0,60.8 520.0,60.7 521.0,60.7 522.0,60.3 523.0,60.4 524.0,60.5 525.0,60.7 526.0,60.5 527.0,60.6 528.0,60.3 529.0,60.3 530.0,60.5 531.0,60.7 532.0,60.7 533.0,60.7 534.0,60.5 535.0,60.6 536.0,60.6 537.0,60.6 538.0,60.4 539.0,60.8 540.0,60.4 541.0,60.9 542.0,60.9 543.0,60.3" fill="none" stroke="#d8d028" stroke-width="1.6" stroke-linejoin="round" opacity="1.0"/><polyline points="26.0,99.7 27.0,99.8 28.0,99.9 29.0,99.7 30.0,99.6 31.0,99.6 32.0,99.9 33.0,99.6 34.0,99.7 35.0,99.6 36.0,99.7 37.0,99.9 38.0,99.6 39.0,99.8 40.0,99.7 41.0,99.9 42.0,99.8 43.0,99.6 44.0,99.9 45.0,99.7 46.0,99.5 47.0,99.5 48.0,99.7 49.0,99.7 50.0,99.6 51.0,99.6 52.0,99.6 53.0,99.6 54.0,99.8 55.0,99.5 56.0,99.8 57.0,99.8 58.0,99.5 59.0,99.9 60.0,99.8 61.0,99.9 62.0,99.6 63.0,99.6 64.0,99.7 65.0,99.9 66.0,99.7 67.0,99.6 68.0,99.7 69.0,99.6 70.0,99.5 71.0,99.5 72.0,99.8 73.0,99.6 74.0,99.9 75.0,99.6 76.0,99.6 77.0,99.7 78.0,99.6 79.0,99.6 80.0,99.9 81.0,99.9 82.0,99.8 83.0,99.8 84.0,99.9 85.0,99.9 86.0,99.7 87.0,99.8 88.0,99.5 89.0,99.8 90.0,99.7 91.0,99.8 92.0,99.8 93.0,99.6 94.0,99.5 95.0,99.9 96.0,99.6 97.0,99.7 98.0,99.6 99.0,99.6 100.0,99.8 101.0,99.9 102.0,99.6 103.0,99.8 104.0,99.6 105.0,99.7 106.0,99.7 107.0,99.6 108.0,99.6 109.0,99.6 110.0,99.9 111.0,99.7 112.0,99.6 113.0,99.9 114.0,99.9 115.0,99.7 116.0,99.6 117.0,99.6 118.0,99.5 119.0,99.6 120.0,99.5" fill="none" stroke="#d8d028" stroke-width="1.6" stroke-linejoin="round" opacity="1.0"/><polyline points="26.0,110.7 28.0,110.8 30.0,110.8 32.0,110.9 34.0,110.8 36.0,110.8 38.0,110.8 40.0,110.8 42.0,110.8 44.0,110.8 46.0,110.7 48.0,110.8 50.0,110.9 52.0,110.7 54.0,110.8 56.0,110.8 58.0,110.9 60.0,110.7 62.0,110.8 64.0,110.7 66.0,110.8 68.0,110.8 70.0,110.9 72.0,110.9 74.0,110.9 76.0,110.7 78.0,110.7 80.0,110.8 82.0,110.9 84.0,110.8 86.0,110.8 88.0,110.7 90.0,110.8 92.0,110.9 94.0,110.9 96.0,110.9 98.0,110.9 100.0,110.7 102.0,110.7 104.0,110.7 106.0,110.8 108.0,110.8 110.0,110.9 112.0,110.8 114.0,110.8 116.0,110.9 118.0,110.8 120.0,110.8" fill="none" stroke="#8448a0" stroke-width="4.8" stroke-linejoin="round" opacity="1.0"/><polyline points="26.0,108.8 26.7,112.0 27.4,109.6 28.1,112.6 28.8,111.4 29.5,109.9 30.2,109.2 30.9,109.7 31.6,111.4 32.3,111.7 33.0,109.1 33.7,108.9 34.4,110.9 35.1,111.2 35.8,110.3 36.5,109.6 37.2,111.2 37.9,108.6 38.6,109.9 39.3,110.6 40.0,112.8 40.7,111.4 41.4,112.5 42.1,110.7 42.8,109.6 43.5,109.7 44.2,112.8 44.9,111.7 45.6,110.0 46.3,108.7 47.0,110.8 47.7,111.6 48.4,110.4 49.1,109.7 49.9,111.5 50.6,112.7 51.3,109.6 52.0,108.8 52.7,110.1 53.4,110.5 54.1,111.6 54.8,109.5 55.5,112.1 56.2,111.9 56.9,110.8 57.6,109.5 58.3,112.9 59.0,110.0 59.7,112.2 60.4,109.6 61.1,109.6 61.8,111.9 62.5,109.9 63.2,112.8 63.9,110.8 64.6,109.4 65.3,109.6 66.0,110.4 66.7,111.5 67.4,112.8 68.1,109.2 68.8,110.3 69.5,109.5 70.2,112.9 70.9,109.2 71.6,108.8 72.3,108.9 73.0,110.3 73.7,112.6 74.4,112.5 75.1,111.8 75.8,113.0 76.5,112.7 77.2,110.0 77.9,109.4 78.6,112.7 79.3,111.9 80.0,108.7 80.7,111.5 81.4,110.3 82.1,110.2 82.8,110.1 83.5,109.3 84.2,108.6 84.9,109.8 85.6,110.1 86.3,112.8 87.0,109.1 87.7,112.8 88.4,109.5 89.1,110.2 89.8,112.2 90.5,112.2 91.2,110.5 91.9,108.8 92.6,110.7 93.3,110.2 94.0,112.6 94.7,109.4 95.4,110.2 96.1,112.5 96.9,108.7 97.6,110.4 98.3,112.2 99.0,112.0 99.7,108.8 100.4,108.8 101.1,108.9 101.8,112.6 102.5,109.7 103.2,111.9 103.9,112.6 104.6,110.1 105.3,109.8 106.0,112.8 106.7,111.3 107.4,109.8 108.1,111.8 108.8,110.0 109.5,109.8 110.2,108.6 110.9,111.9 111.6,112.6 112.3,111.4 113.0,112.8 113.7,108.7 114.4,109.6 115.1,110.7 115.8,112.8 116.5,112.8 117.2,110.3 117.9,109.7 118.6,110.5 119.3,110.8 120.0,112.7" fill="none" stroke="#9a5ab0" stroke-width="1.0" stroke-linejoin="round" opacity="0.6"/><polyline points="120.0,112.2 121.0,112.2 122.0,112.2 123.0,112.2 124.0,112.2 125.0,112.2 126.0,112.2 127.0,112.2 128.0,112.2 129.0,112.2 130.0,112.2 131.0,112.2 132.0,112.2 133.0,112.2 134.0,112.2 135.0,112.2 136.0,112.2 137.0,112.2 138.0,112.3 139.0,112.2 140.0,112.3 141.0,112.2 142.0,112.2 143.0,112.2 144.0,112.2 145.0,112.2 146.0,112.2 147.0,112.2 148.0,112.2 149.0,112.2 150.0,112.2 151.0,112.2 152.0,112.2 153.0,112.2 154.0,112.2 155.0,112.2 156.0,112.2 157.0,112.2 158.0,112.2 159.0,112.2 160.0,112.2 161.0,112.2 162.0,112.2 163.0,112.2 164.0,112.2 165.0,112.2 166.0,112.2 167.0,112.2 168.0,112.3 169.0,112.2 170.0,112.2 171.0,112.2 172.0,112.2 173.0,112.3 174.0,112.2 175.0,112.2 176.0,112.2 177.0,112.2 178.0,112.3 179.0,112.2 180.0,112.2 181.0,112.2 182.0,112.2 183.0,112.3 184.0,112.2 185.0,112.3 186.0,112.2 187.0,112.3 188.0,112.2 189.0,112.2 190.0,112.2 191.0,112.3 192.0,112.2 193.0,112.2 194.0,112.2 195.0,112.2 196.0,112.2 197.0,112.2 198.0,112.2 199.0,112.2 200.0,112.2 201.0,112.2 202.0,112.2 203.0,112.2 204.0,112.2 205.0,112.2 206.0,112.2 207.0,112.2 208.0,112.2 209.0,112.3 210.0,112.2 211.0,112.2 212.0,112.2 213.0,112.2 214.0,112.2 215.0,112.2 216.0,112.2 217.0,112.2 218.0,112.2 219.0,112.2 220.0,112.2 221.0,112.2 222.0,112.3 223.0,112.2 224.0,112.2 225.0,112.2 226.0,112.2 227.0,112.3 228.0,112.3 229.0,112.2 230.0,112.2 231.0,112.2 232.0,112.2 233.0,112.2 234.0,112.3 235.0,112.2 236.0,112.3 237.0,112.2 238.0,112.3 239.0,112.2 240.0,112.2 241.0,112.2 242.0,112.2 243.0,112.2 244.0,112.3 245.0,112.2 246.0,112.2 247.0,112.2 248.0,112.2 249.0,112.2 250.0,112.2 251.0,112.2 252.0,112.3 253.0,112.2 254.0,112.2 255.0,112.3 256.0,112.3 257.0,112.2 258.0,112.2 259.0,112.3 260.0,112.3 261.0,112.2 262.0,112.2 263.0,112.3 264.0,112.2 265.0,112.3 266.0,112.2 267.0,112.3 268.0,112.2 269.0,112.3 270.0,112.2 271.0,112.2 272.0,112.3 273.0,112.3 274.0,112.2 275.0,112.2 276.0,112.2 277.0,112.2 278.0,112.2 279.0,112.2 280.0,112.2 281.0,112.3 282.0,112.3 283.0,112.2 284.0,112.2 285.0,112.3 286.0,112.2 287.0,112.3 288.0,112.2 289.0,112.2 290.0,112.2 291.0,112.3 292.0,112.2 293.0,112.2 294.0,112.2 295.0,112.2 296.0,112.3 297.0,112.2 298.0,112.2 299.0,112.2 300.0,112.3 301.0,112.2 302.0,112.2 303.0,112.3 304.0,112.3 305.0,112.2 306.0,112.2 307.0,112.2 308.0,112.2 309.0,112.2 310.0,112.2 311.0,112.2 312.0,112.2 313.0,112.2 314.0,112.2 315.0,112.3 316.0,112.2 317.0,112.3 318.0,112.3 319.0,112.2 320.0,112.2 321.0,112.2 322.0,112.2 323.0,112.3 324.0,112.2 325.0,112.3 326.0,112.3 327.0,112.3 328.0,112.3 329.0,112.2 330.0,112.3 331.0,112.2 332.0,112.3 333.0,112.3 334.0,112.2 335.0,112.3 336.0,112.3 337.0,112.2 338.0,112.2 339.0,112.3 340.0,112.2 341.0,112.3 342.0,112.2 343.0,112.3 344.0,112.2 345.0,112.3 346.0,112.3 347.0,112.2 348.0,112.2 349.0,112.3 350.0,112.2 351.0,112.2 352.0,112.2 353.0,112.2 354.0,112.3 355.0,112.3 356.0,112.3 357.0,112.2 358.0,112.3 359.0,112.2 360.0,112.3 361.0,112.3 362.0,112.2 363.0,112.3 364.0,112.3 365.0,112.3 366.0,112.3 367.0,112.2 368.0,112.3 369.0,112.3 370.0,112.2 371.0,112.3 372.0,112.2 373.0,112.3 374.0,112.3 375.0,112.2 376.0,112.3 377.0,112.3 378.0,112.2 379.0,112.3 380.0,112.2 381.0,112.3 382.0,112.2 383.0,112.3 384.0,112.3 385.0,112.3 386.0,112.3 387.0,112.2 388.0,112.2 389.0,112.2 390.0,112.2 391.0,112.3 392.0,112.3 393.0,112.3 394.0,112.3 395.0,112.2 396.0,112.2 397.0,112.3 398.0,112.2 399.0,112.2 400.0,112.3 401.0,112.2 402.0,112.3 403.0,112.2 404.0,112.3 405.0,112.3 406.0,112.2 407.0,112.3 408.0,112.3 409.0,112.2 410.0,112.3 411.0,112.2 412.0,112.2 413.0,112.2 414.0,112.3 415.0,112.3 416.0,112.3 417.0,112.3 418.0,112.2 419.0,112.2 420.0,112.3 421.0,112.3 422.0,112.3 423.0,112.3 424.0,112.3 425.0,112.3 426.0,112.3 427.0,112.2 428.0,112.3 429.0,112.2 430.0,112.3 431.0,112.3 432.0,112.2 433.0,112.2 434.0,112.3 435.0,112.2 436.0,112.3 437.0,112.3 438.0,112.2 439.0,112.2 440.0,112.3 441.0,112.3 442.0,112.3 443.0,112.3 444.0,112.2 445.0,112.3 446.0,112.3 447.0,112.2 448.0,112.3 449.0,112.3 450.0,112.3 451.0,112.2 452.0,112.3 453.0,112.3 454.0,112.3 455.0,112.3 456.0,112.3 457.0,112.3 458.0,112.2 459.0,112.3 460.0,112.2 461.0,112.3 462.0,112.3 463.0,112.3 464.0,112.3 465.0,112.3 466.0,112.3 467.0,112.3 468.0,112.3 469.0,112.3 470.0,112.3 471.0,112.3 472.0,112.3 473.0,112.3 474.0,112.3 475.0,112.3 476.0,112.2 477.0,112.3 478.0,112.3 479.0,112.3 480.0,112.3 481.0,112.3 482.0,112.3 483.0,112.3 484.0,112.3 485.0,112.3 486.0,112.3 487.0,112.3 488.0,112.3 489.0,112.3 490.0,112.3 491.0,112.3 492.0,112.3 493.0,112.3 494.0,112.3 495.0,112.3 496.0,112.3 497.0,112.3 498.0,112.3 499.0,112.3 500.0,112.3 501.0,112.2 502.0,112.3 503.0,112.3 504.0,112.2 505.0,112.3 506.0,112.3 507.0,112.3 508.0,112.3 509.0,112.2 510.0,112.2 511.0,112.3 512.0,112.3 513.0,112.3 514.0,112.3 515.0,112.2 516.0,112.3 517.0,112.3 518.0,112.3 519.0,112.3 520.0,112.3 521.0,112.3 522.0,112.3 523.0,112.3 524.0,112.3 525.0,112.3 526.0,112.3 527.0,112.3 528.0,112.2 529.0,112.3 530.0,112.3 531.0,112.3 532.0,112.3 533.0,112.3 534.0,112.3 535.0,112.3 536.0,112.3 537.0,112.3 538.0,112.3 539.0,112.3 540.0,112.3 541.0,112.3 542.0,112.3 543.0,112.3" fill="none" stroke="#84509a" stroke-width="1.4" stroke-linejoin="round" opacity="1.0"/><polyline points="26.0,120.8 27.0,120.7 28.0,120.7 29.0,120.8 30.0,120.7 31.0,120.8 32.0,120.7 33.0,120.6 34.0,120.7 35.0,120.7 36.0,120.8 37.0,120.7 38.0,120.7 39.0,120.7 40.0,120.6 41.0,120.8 42.0,120.6 43.0,120.8 44.0,120.6 45.0,120.6 46.0,120.6 47.0,120.8 48.0,120.8 49.0,120.6 50.0,120.7 51.0,120.7 52.0,120.8 53.0,120.6 54.0,120.7 55.0,120.7 56.0,120.8 57.0,120.6 58.0,120.8 59.0,120.6 60.0,120.6 61.0,120.7 62.0,120.7 63.0,120.6 64.0,120.7 65.0,120.6 66.0,120.8 67.0,120.7 68.0,120.8 69.0,120.7 70.0,120.7 71.0,120.7 72.0,120.7 73.0,120.8 74.0,120.6 75.0,120.8 76.0,120.6 77.0,120.6 78.0,120.6 79.0,120.8 80.0,120.7 81.0,120.7 82.0,120.8 83.0,120.6 84.0,120.7 85.0,120.7 86.0,120.8 87.0,120.8 88.0,120.7 89.0,120.7 90.0,120.7 91.0,120.6 92.0,120.8 93.0,120.7 94.0,120.8 95.0,120.6 96.0,120.7 97.0,120.8 98.0,120.7 99.0,120.6 100.0,120.7 101.0,120.8 102.0,120.6 103.0,120.6 104.0,120.7 105.0,120.7 106.0,120.8 107.0,120.6 108.0,120.6 109.0,120.6 110.0,120.7 111.0,120.7 112.0,120.6 113.0,120.7 114.0,120.6 115.0,120.8 116.0,120.8 117.0,120.6 118.0,120.8 119.0,120.6 120.0,120.7 121.0,120.8 122.0,120.7 123.0,120.6 124.0,120.5 125.0,120.4 126.0,120.4 127.0,120.3 128.0,120.2 129.0,120.2 130.0,120.1 131.0,120.2 132.0,120.2 133.0,120.1 134.0,120.0 135.0,120.0 136.0,119.9 137.0,119.8 138.0,119.9 139.0,119.8 140.0,119.8 141.0,119.8 142.0,119.6 143.0,119.6 144.0,119.6 145.0,119.5 146.0,119.4 147.0,119.5 148.0,119.5 149.0,119.4 150.0,119.3 151.0,119.3 152.0,119.2 153.0,119.2 154.0,119.1 155.0,119.0 156.0,119.0 157.0,118.8 158.0,118.9 159.0,118.9 160.0,118.9 161.0,118.8 162.0,118.6 163.0,118.6 164.0,118.6 165.0,118.6 166.0,118.5 167.0,118.5 168.0,118.5 169.0,118.3 170.0,118.4 171.0,118.3 172.0,118.2 173.0,118.2 174.0,118.2 175.0,118.0 176.0,118.0 177.0,117.9 178.0,118.0 179.0,118.0 180.0,117.9 181.0,117.7 182.0,117.8 183.0,117.7 184.0,117.7 185.0,117.6 186.0,117.6 187.0,117.6 188.0,117.5 189.0,117.4 190.0,117.5 191.0,117.3 192.0,117.3 193.0,117.2 194.0,117.2 195.0,117.0 196.0,117.2 197.0,117.0 198.0,116.9 199.0,116.9 200.0,116.9 201.0,116.7 202.0,116.8 203.0,116.7 204.0,116.8 205.0,116.6 206.0,116.6 207.0,116.5 208.0,116.6 209.0,116.6 210.0,116.4 211.0,116.3 212.0,116.4 213.0,116.3 214.0,116.2 215.0,116.1 216.0,116.2 217.0,116.2 218.0,116.1 219.0,116.0 220.0,116.0 221.0,115.8 222.0,116.0 223.0,115.8 224.0,115.8 225.0,115.8 226.0,115.7 227.0,115.6 228.0,115.5 229.0,115.5 230.0,115.4 231.0,115.5 232.0,115.3 233.0,115.4 234.0,115.2 235.0,115.2 236.0,115.1 237.0,115.1 238.0,115.0 239.0,114.9 240.0,115.1 241.0,114.9 242.0,114.8 243.0,114.8 244.0,114.8 245.0,114.7 246.0,114.7 247.0,114.7 248.0,114.6 249.0,114.7 250.0,114.6 251.0,114.4 252.0,114.5 253.0,114.5 254.0,114.4 255.0,114.2 256.0,114.3 257.0,114.2 258.0,114.0 259.0,114.0 260.0,114.2 261.0,114.0 262.0,113.9 263.0,113.8 264.0,113.8 265.0,113.7 266.0,113.8 267.0,113.7 268.0,113.6 269.0,113.7 270.0,113.6 271.0,113.4 272.0,113.6 273.0,113.5 274.0,113.4 275.0,113.4 276.0,113.4 277.0,113.3 278.0,113.3 279.0,113.1 280.0,113.1 281.0,113.1 282.0,113.1 283.0,112.9 284.0,113.0 285.0,112.9 286.0,112.8 287.0,112.7 288.0,112.6 289.0,112.7 290.0,112.5 291.0,112.6 292.0,112.4 293.0,112.5 294.0,112.4 295.0,112.4 296.0,112.4 297.0,112.2 298.0,112.3 299.0,112.2 300.0,112.2 301.0,112.1 302.0,112.1 303.0,112.0 304.0,111.9 305.0,112.0 306.0,111.8 307.0,111.8 308.0,111.8 309.0,111.6 310.0,111.7 311.0,111.7 312.0,111.7 313.0,111.5 314.0,111.6 315.0,111.4 316.0,111.4 317.0,111.4 318.0,111.2 319.0,111.3 320.0,111.2 321.0,111.1 322.0,111.2 323.0,111.0 324.0,111.0 325.0,111.0 326.0,111.0 327.0,110.8 328.0,110.8 329.0,110.8 330.0,110.7 331.0,110.8 332.0,110.6 333.0,110.7 334.0,110.5 335.0,110.5 336.0,110.4 337.0,110.4 338.0,110.5 339.0,110.3 340.0,110.3 341.0,110.2 342.0,110.1 343.0,110.1 344.0,110.1 345.0,110.0 346.0,110.0 347.0,109.8 348.0,109.9 349.0,109.9 350.0,109.8 351.0,109.6 352.0,109.6 353.0,109.5 354.0,109.5 355.0,109.6 356.0,109.5 357.0,109.5 358.0,109.5 359.0,109.4 360.0,109.3 361.0,109.3 362.0,109.2 363.0,109.2 364.0,109.1 365.0,109.1 366.0,108.9 367.0,109.0 368.0,108.9 369.0,108.9 370.0,108.7 371.0,108.7 372.0,108.6 373.0,108.7 374.0,108.7 375.0,108.6 376.0,108.5 377.0,108.6 378.0,108.5 379.0,108.4 380.0,108.3 381.0,108.3 382.0,108.2 383.0,108.2 384.0,108.1 385.0,108.1 386.0,108.2 387.0,107.9 388.0,108.0 389.0,107.8 390.0,107.8 391.0,107.9 392.0,107.8 393.0,107.8 394.0,107.7 395.0,107.5 396.0,107.6 397.0,107.6 398.0,107.6 399.0,107.6 400.0,107.4 401.0,107.3 402.0,107.2 403.0,107.3 404.0,107.1 405.0,107.1 406.0,107.0 407.0,106.9 408.0,107.1 409.0,106.9 410.0,107.0 411.0,106.8 412.0,106.9 413.0,106.7 414.0,106.6 415.0,106.7 416.0,106.6 417.0,106.6 418.0,106.5 419.0,106.4 420.0,106.5 421.0,106.4 422.0,106.4 423.0,106.4 424.0,106.2 425.0,106.2 426.0,106.2 427.0,106.1 428.0,106.2 429.0,106.0 430.0,106.1 431.0,106.0 432.0,105.8 433.0,105.7 434.0,105.8 435.0,105.8 436.0,105.6 437.0,105.6 438.0,105.6 439.0,105.5 440.0,105.6 441.0,105.4 442.0,105.3 443.0,105.3 444.0,105.3 445.0,105.2 446.0,105.3 447.0,105.1 448.0,105.2 449.0,105.0 450.0,105.1 451.0,105.0 452.0,104.9 453.0,104.8 454.0,104.9 455.0,104.9 456.0,104.8 457.0,104.7 458.0,104.6 459.0,104.5 460.0,104.7 461.0,104.5 462.0,104.5 463.0,104.4 464.0,104.4 465.0,104.4 466.0,104.3 467.0,104.2 468.0,104.1 469.0,104.1 470.0,104.2 471.0,104.0 472.0,104.0 473.0,104.0 474.0,104.0 475.0,103.9 476.0,103.7 477.0,103.6 478.0,103.6 479.0,103.6 480.0,103.6 481.0,103.6 482.0,103.6 483.0,103.3 484.0,103.5 485.0,103.4 486.0,103.4 487.0,103.3 488.0,103.2 489.0,103.3 490.0,103.2 491.0,103.1 492.0,103.1 493.0,102.9 494.0,102.8 495.0,102.9 496.0,102.9 497.0,102.7 498.0,102.8 499.0,102.8 500.0,102.6 501.0,102.6 502.0,102.6 503.0,102.5 504.0,102.4 505.0,102.3 506.0,102.4 507.0,102.4 508.0,102.3 509.0,102.1 510.0,102.2 511.0,102.2 512.0,102.0 513.0,102.0 514.0,102.1 515.0,102.0 516.0,101.9 517.0,101.8 518.0,101.8 519.0,101.7 520.0,101.6 521.0,101.6 522.0,101.6 523.0,101.5 524.0,101.5 525.0,101.4 526.0,101.4 527.0,101.3 528.0,101.2 529.0,101.4 530.0,101.2 531.0,101.1 532.0,101.2 533.0,101.1 534.0,100.9 535.0,101.0 536.0,100.9 537.0,100.9 538.0,100.7 539.0,100.7 540.0,100.9 541.0,100.8 542.0,100.6 543.0,100.6" fill="none" stroke="#2ec3d0" stroke-width="1.7" stroke-linejoin="round" opacity="1.0"/><polyline points="120.0,122.3 121.0,122.4 122.0,122.3 123.0,122.4 124.0,122.4 125.0,122.4 126.0,122.4 127.0,122.3 128.0,122.2 129.0,122.2 130.0,122.2 131.0,122.2 132.0,122.2 133.0,122.3 134.0,122.4 135.0,122.3 136.0,122.4 137.0,122.4 138.0,122.2 139.0,122.3 140.0,122.3 141.0,122.2 142.0,122.4 143.0,122.3 144.0,122.3 145.0,122.3 146.0,122.4 147.0,122.3 148.0,122.3 149.0,122.3 150.0,122.2 151.0,122.4 152.0,122.4 153.0,122.2 154.0,122.2 155.0,122.3 156.0,122.3 157.0,122.4 158.0,122.4 159.0,122.4 160.0,122.2 161.0,122.4 162.0,122.3 163.0,122.3 164.0,122.4 165.0,122.2 166.0,122.2 167.0,122.4 168.0,122.4 169.0,122.3 170.0,122.3 171.0,122.3 172.0,122.4 173.0,122.2 174.0,122.3 175.0,122.3 176.0,122.2 177.0,122.3 178.0,122.2 179.0,122.2 180.0,122.2 181.0,122.3 182.0,122.2 183.0,122.3 184.0,122.2 185.0,122.2 186.0,122.4 187.0,122.2 188.0,122.4 189.0,122.4 190.0,122.4 191.0,122.2 192.0,122.3 193.0,122.2 194.0,122.4 195.0,122.4 196.0,122.3 197.0,122.3 198.0,122.3 199.0,122.4 200.0,122.3 201.0,122.3 202.0,122.2 203.0,122.2 204.0,122.2 205.0,122.3 206.0,122.3 207.0,122.2 208.0,122.4 209.0,122.3 210.0,122.3 211.0,122.2 212.0,122.3 213.0,122.4 214.0,122.3 215.0,122.2 216.0,122.3 217.0,122.3 218.0,122.4 219.0,122.2 220.0,122.4 221.0,122.2 222.0,122.4 223.0,122.3 224.0,122.2 225.0,122.3 226.0,122.3 227.0,122.3 228.0,122.2 229.0,122.3 230.0,122.4 231.0,122.4 232.0,122.4 233.0,122.2 234.0,122.3 235.0,122.4 236.0,122.2 237.0,122.3 238.0,122.3 239.0,122.4 240.0,122.2 241.0,122.4 242.0,122.3 243.0,122.2 244.0,122.2 245.0,122.4 246.0,122.3 247.0,122.2 248.0,122.3 249.0,122.4 250.0,122.2 251.0,122.3 252.0,122.2 253.0,122.2 254.0,122.4 255.0,122.3 256.0,122.2 257.0,122.2 258.0,122.2 259.0,122.3 260.0,122.3 261.0,122.3 262.0,122.2 263.0,122.3 264.0,122.3 265.0,122.4 266.0,122.3 267.0,122.2 268.0,122.2 269.0,122.3 270.0,122.3 271.0,122.3 272.0,122.2 273.0,122.4 274.0,122.3 275.0,122.4 276.0,122.4 277.0,122.3 278.0,122.2 279.0,122.4 280.0,122.3 281.0,122.4 282.0,122.3 283.0,122.2 284.0,122.4 285.0,122.3 286.0,122.2 287.0,122.3 288.0,122.3 289.0,122.2 290.0,122.3 291.0,122.3 292.0,122.3 293.0,122.2 294.0,122.3 295.0,122.4 296.0,122.4 297.0,122.3 298.0,122.3 299.0,122.3 300.0,122.4 301.0,122.2 302.0,122.4 303.0,122.4 304.0,122.3 305.0,122.3 306.0,122.3 307.0,122.3 308.0,122.2 309.0,122.4 310.0,122.2 311.0,122.2 312.0,122.2 313.0,122.3 314.0,122.4 315.0,122.2 316.0,122.2 317.0,122.3 318.0,122.2 319.0,122.2 320.0,122.3 321.0,122.3 322.0,122.3 323.0,122.3 324.0,122.2 325.0,122.4 326.0,122.3 327.0,122.2 328.0,122.2 329.0,122.3 330.0,122.3 331.0,122.3 332.0,122.2 333.0,122.3 334.0,122.2 335.0,122.3 336.0,122.4 337.0,122.2 338.0,122.3 339.0,122.3 340.0,122.2 341.0,122.4 342.0,122.4 343.0,122.3 344.0,122.3 345.0,122.4 346.0,122.3 347.0,122.3 348.0,122.4 349.0,122.4 350.0,122.3 351.0,122.2 352.0,122.3 353.0,122.3 354.0,122.4 355.0,122.4 356.0,122.4 357.0,122.4 358.0,122.4 359.0,122.2 360.0,122.3 361.0,122.4 362.0,122.4 363.0,122.2 364.0,122.3 365.0,122.3 366.0,122.3 367.0,122.3 368.0,122.2 369.0,122.3 370.0,122.3 371.0,122.2 372.0,122.2 373.0,122.4 374.0,122.4 375.0,122.4 376.0,122.3 377.0,122.4 378.0,122.4 379.0,122.4 380.0,122.2 381.0,122.3 382.0,122.3 383.0,122.3 384.0,122.3 385.0,122.3 386.0,122.4 387.0,122.3 388.0,122.3 389.0,122.3 390.0,122.3 391.0,122.4 392.0,122.3 393.0,122.3 394.0,122.3 395.0,122.2 396.0,122.3 397.0,122.4 398.0,122.3 399.0,122.3 400.0,122.3 401.0,122.3 402.0,122.2 403.0,122.2 404.0,122.2 405.0,122.3 406.0,122.3 407.0,122.3 408.0,122.2 409.0,122.2 410.0,122.3 411.0,122.4 412.0,122.3 413.0,122.3 414.0,122.3 415.0,122.2 416.0,122.3 417.0,122.3 418.0,122.3 419.0,122.3 420.0,122.3 421.0,122.3 422.0,122.2 423.0,122.2 424.0,122.3 425.0,122.3 426.0,122.3 427.0,122.2 428.0,122.3 429.0,122.4 430.0,122.2 431.0,122.3 432.0,122.3 433.0,122.3 434.0,122.4 435.0,122.3 436.0,122.4 437.0,122.2 438.0,122.2 439.0,122.4 440.0,122.3 441.0,122.2 442.0,122.3 443.0,122.3 444.0,122.3 445.0,122.2 446.0,122.2 447.0,122.4 448.0,122.3 449.0,122.2 450.0,122.3 451.0,122.3 452.0,122.3 453.0,122.3 454.0,122.4 455.0,122.4 456.0,122.3 457.0,122.3 458.0,122.3 459.0,122.4 460.0,122.3 461.0,122.4 462.0,122.3 463.0,122.4 464.0,122.2 465.0,122.4 466.0,122.2 467.0,122.4 468.0,122.3 469.0,122.3 470.0,122.4 471.0,122.3 472.0,122.3 473.0,122.4 474.0,122.4 475.0,122.3 476.0,122.3 477.0,122.3 478.0,122.3 479.0,122.3 480.0,122.3 481.0,122.3 482.0,122.3 483.0,122.3 484.0,122.3 485.0,122.4 486.0,122.4 487.0,122.3 488.0,122.3 489.0,122.2 490.0,122.3 491.0,122.2 492.0,122.3 493.0,122.3 494.0,122.2 495.0,122.4 496.0,122.3 497.0,122.4 498.0,122.4 499.0,122.4 500.0,122.2 501.0,122.3 502.0,122.4 503.0,122.2 504.0,122.2 505.0,122.3 506.0,122.3 507.0,122.4 508.0,122.4 509.0,122.3 510.0,122.4 511.0,122.3 512.0,122.3 513.0,122.3 514.0,122.3 515.0,122.3 516.0,122.3 517.0,122.3 518.0,122.4 519.0,122.3 520.0,122.3 521.0,122.2 522.0,122.3 523.0,122.3 524.0,122.3 525.0,122.3 526.0,122.4 527.0,122.4 528.0,122.3 529.0,122.3 530.0,122.3 531.0,122.4 532.0,122.3 533.0,122.3 534.0,122.4 535.0,122.2 536.0,122.3 537.0,122.4 538.0,122.4 539.0,122.3 540.0,122.2 541.0,122.4 542.0,122.3 543.0,122.4" fill="none" stroke="#d83c55" stroke-width="1.4" stroke-linejoin="round" opacity="1.0"/><line x1="26" y1="121.1" x2="966" y2="121.1" stroke="#8e8e8e" stroke-width="1.3" stroke-dasharray="2.4 1.8"/><line x1="543.5" y1="60.8" x2="543.5" y2="99" stroke="#d8d028" stroke-width="1.1" /><line x1="567.5" y1="60.8" x2="567.5" y2="99" stroke="#d8d028" stroke-width="1.1" /><line x1="543" y1="37" x2="543" y2="122" stroke="#d83c55" stroke-width="1.0" /><line x1="567" y1="37" x2="567" y2="122" stroke="#d83c55" stroke-width="1.0" /><polyline points="543.0,99.2 544.0,99.2 545.0,99.0 546.0,98.9 547.0,98.9 548.0,99.0 549.0,99.0 550.0,98.9 551.0,98.9 552.0,99.1 553.0,99.0 554.0,98.9 555.0,99.2 556.0,99.1 557.0,98.8 558.0,99.0 559.0,99.1 560.0,98.9 561.0,99.1 562.0,98.8 563.0,98.9 564.0,99.1 565.0,99.0 566.0,99.1 567.0,98.9" fill="none" stroke="#d8d028" stroke-width="1.4" stroke-linejoin="round" opacity="1.0"/><polyline points="547.0,64.0 548.0,63.7 549.0,63.4 550.0,63.2 551.0,62.9 552.0,62.8 553.0,62.4 554.0,62.0 555.0,61.6 556.0,61.4 557.0,61.5 558.0,61.2 559.0,61.1 560.0,61.1 561.0,61.2 562.0,61.2 563.0,61.1 564.0,61.1 565.0,60.8 566.0,60.7 567.0,60.9" fill="none" stroke="#d83c55" stroke-width="1.4" stroke-linejoin="round" opacity="1.0"/><polyline points="547.0,60.7 548.0,60.9 549.0,60.7 550.0,60.7 551.0,60.7 552.0,60.6 553.0,61.0 554.0,60.8 555.0,60.7 556.0,60.8 557.0,60.8 558.0,60.6 559.0,61.0 560.0,60.8 561.0,61.0 562.0,60.8 563.0,60.8 564.0,60.7 565.0,60.6 566.0,61.0 567.0,60.9" fill="none" stroke="#d8d028" stroke-width="1.4" stroke-linejoin="round" opacity="1.0"/><polyline points="543.0,98.9 544.0,99.4 545.0,99.6 546.0,99.7 547.0,100.0 548.0,100.1 549.0,99.8 550.0,100.0 551.0,99.6 552.0,99.6 553.0,99.6 554.0,99.4 555.0,99.3 556.0,99.5 557.0,99.2 558.0,99.3 559.0,99.0 560.0,98.9 561.0,98.9 562.0,98.7 563.0,99.0 564.0,98.6 565.0,98.7 566.0,98.4 567.0,98.5" fill="none" stroke="#2ec3d0" stroke-width="1.4" stroke-linejoin="round" opacity="1.0"/><polyline points="543.0,121.0 544.0,121.0 545.0,120.8 546.0,120.8 547.0,121.1 548.0,120.9 549.0,120.9 550.0,120.9 551.0,120.9 552.0,120.9 553.0,120.8 554.0,121.1 555.0,120.9 556.0,120.9 557.0,121.1 558.0,120.8 559.0,120.9 560.0,121.1 561.0,120.9 562.0,121.0 563.0,121.1 564.0,121.1 565.0,120.9 566.0,120.9 567.0,121.1" fill="none" stroke="#2ec3d0" stroke-width="1.4" stroke-linejoin="round" opacity="1.0"/><polyline points="547.0,122.3 548.0,122.4 549.0,122.2 550.0,122.4 551.0,122.3 552.0,122.2 553.0,122.3 554.0,122.2 555.0,122.3 556.0,122.3 557.0,122.4 558.0,122.3 559.0,122.3 560.0,122.2 561.0,122.3 562.0,122.2 563.0,122.4 564.0,122.2 565.0,122.3 566.0,122.3 567.0,122.3" fill="none" stroke="#d83c55" stroke-width="1.2" stroke-linejoin="round" opacity="1.0"/><line x1="545" y1="86.3" x2="562" y2="86.3" stroke="#d8d028" stroke-width="1" stroke-dasharray="3 2"/><polyline points="567.0,62.7 569.0,62.2 571.0,61.9 573.0,61.5 575.0,61.1 577.0,60.8 579.0,60.4 581.0,60.3 583.0,60.3 585.0,60.0 587.0,60.1 589.0,59.9 591.0,60.1 593.0,60.1 595.0,60.3 597.0,60.4 599.0,60.6 601.0,61.0 603.0,61.3 605.0,61.6 607.0,62.1 609.0,62.4 611.0,62.8 613.0,63.4 615.0,63.7 617.0,64.2 619.0,64.5 621.0,64.6 623.0,65.0 625.0,65.2 627.0,65.6 629.0,65.8 631.0,65.8 633.0,65.9 635.0,66.0 637.0,66.0 639.0,65.8 641.0,65.9 643.0,65.5 645.0,65.4 647.0,65.0 649.0,64.7 651.0,64.6 653.0,64.1 655.0,63.7 657.0,63.1 659.0,62.7 661.0,62.4 663.0,62.0 665.0,61.7 667.0,61.3 669.0,60.9 671.0,60.7 673.0,60.6 675.0,60.2 677.0,60.3 679.0,60.1 681.0,60.1 683.0,59.9 685.0,60.0 687.0,60.2 689.0,60.3 691.0,60.4 693.0,60.9 695.0,61.2 697.0,61.4 699.0,61.7 701.0,62.3 703.0,62.6 705.0,62.8 707.0,63.3 709.0,63.6 711.0,64.2 713.0,64.4 715.0,65.0 717.0,65.2 719.0,65.3 721.0,65.7 723.0,65.8 725.0,66.0 727.0,66.1 729.0,65.9 731.0,65.8 733.0,66.0 735.0,65.7 737.0,65.7 739.0,65.3 741.0,65.1 743.0,64.8 745.0,64.4 747.0,64.0 749.0,63.5 751.0,63.2 753.0,62.8 755.0,62.4 757.0,62.1 759.0,61.5 761.0,61.4 763.0,60.8 765.0,60.8 767.0,60.5 769.0,60.2 771.0,60.1 773.0,60.2 775.0,60.0 777.0,60.0 779.0,60.0 781.0,60.1 783.0,60.4 785.0,60.6 787.0,60.8 789.0,61.1 791.0,61.4 793.0,61.9 795.0,62.3 797.0,62.6 799.0,63.0 801.0,63.5 803.0,63.8 805.0,64.4 807.0,64.5 809.0,64.9 811.0,65.3 813.0,65.4 815.0,65.7 817.0,65.8 819.0,66.0 821.0,66.0 823.0,66.1 825.0,65.8 827.0,65.9 829.0,65.7 831.0,65.5 833.0,65.3 835.0,65.0 837.0,64.5 839.0,64.2 841.0,63.8 843.0,63.4 845.0,63.0 847.0,62.6 849.0,62.2 851.0,62.0 853.0,61.5 855.0,61.1 857.0,60.8 859.0,60.6 861.0,60.4 863.0,60.1 865.0,60.0 867.0,59.9 869.0,60.1 871.0,60.1 873.0,60.0 875.0,60.3 877.0,60.6 879.0,60.7 881.0,60.8 883.0,61.3 885.0,61.6 887.0,61.9 889.0,62.4 891.0,62.6 893.0,63.3 895.0,63.6 897.0,64.0 899.0,64.5 901.0,64.7 903.0,64.9 905.0,65.2 907.0,65.4 909.0,65.6 911.0,65.9 913.0,66.1 915.0,65.9 917.0,65.9 919.0,66.0 921.0,65.9 923.0,65.8 925.0,65.3 927.0,65.2 929.0,65.0 931.0,64.6 933.0,64.1 935.0,63.7 937.0,63.5 939.0,62.9 941.0,62.5 943.0,62.2 945.0,61.8 947.0,61.6 949.0,61.0 951.0,60.7 953.0,60.6 955.0,60.4 957.0,60.3 959.0,60.1 961.0,60.1 963.0,60.1 965.0,60.0" fill="none" stroke="#d83c55" stroke-width="1.1" stroke-linejoin="round" opacity="1.0"/><polyline points="567.0,99.6 569.0,99.6 571.0,99.7 573.0,99.9 575.0,99.8 577.0,100.1 579.0,100.0 581.0,100.1 583.0,100.4 585.0,100.0 587.0,100.0 589.0,100.2 591.0,100.0 593.0,100.2 595.0,99.9 597.0,100.1 599.0,100.1 601.0,100.0 603.0,99.7 605.0,99.6 607.0,99.6 609.0,99.5 611.0,99.3 613.0,99.2 615.0,99.1 617.0,99.1 619.0,99.1 621.0,99.0 623.0,98.6 625.0,98.6 627.0,98.6 629.0,98.7 631.0,98.5 633.0,98.5 635.0,98.4 637.0,98.6 639.0,98.6 641.0,98.9 643.0,98.9 645.0,99.0 647.0,99.1 649.0,99.2 651.0,99.2 653.0,99.3 655.0,99.1 657.0,99.5 659.0,99.6 661.0,99.6 663.0,99.8 665.0,100.0 667.0,99.9 669.0,100.1 671.0,100.0 673.0,100.1 675.0,100.3 677.0,100.0 679.0,100.1 681.0,100.3 683.0,100.2 685.0,100.0 687.0,100.2 689.0,100.0 691.0,100.0 693.0,99.9 695.0,99.8 697.0,99.8 699.0,99.6 701.0,99.4 703.0,99.3 705.0,99.5 707.0,99.2 709.0,98.9 711.0,99.2 713.0,98.8 715.0,98.7 717.0,98.8 719.0,98.6 721.0,98.7 723.0,98.6 725.0,98.5 727.0,98.6 729.0,98.5 731.0,98.6 733.0,98.7 735.0,98.6 737.0,98.7 739.0,98.7 741.0,98.9 743.0,99.2 745.0,99.2 747.0,99.3 749.0,99.4 751.0,99.3 753.0,99.7 755.0,99.7 757.0,99.6 759.0,100.0 761.0,99.9 763.0,99.9 765.0,100.3 767.0,100.2 769.0,100.3 771.0,100.0 773.0,100.3 775.0,100.0 777.0,100.1 779.0,100.1 781.0,99.9 783.0,100.1 785.0,99.9 787.0,99.8 789.0,99.9 791.0,99.7 793.0,99.8 795.0,99.5 797.0,99.5 799.0,99.3 801.0,99.3 803.0,99.2 805.0,98.9 807.0,99.0 809.0,98.8 811.0,98.9 813.0,98.8 815.0,98.8 817.0,98.5 819.0,98.6 821.0,98.7 823.0,98.8 825.0,98.7 827.0,98.5 829.0,98.8 831.0,98.6 833.0,98.9 835.0,99.1 837.0,98.9 839.0,99.3 841.0,99.3 843.0,99.3 845.0,99.4 847.0,99.6 849.0,99.8 851.0,99.8 853.0,99.7 855.0,99.8 857.0,99.9 859.0,100.2 861.0,100.0 863.0,100.2 865.0,100.1 867.0,100.3 869.0,100.1 871.0,100.0 873.0,100.3 875.0,100.1 877.0,100.1 879.0,100.1 881.0,100.1 883.0,99.6 885.0,99.6 887.0,99.4 889.0,99.5 891.0,99.5 893.0,99.4 895.0,99.0 897.0,98.9 899.0,99.1 901.0,98.9 903.0,98.8 905.0,98.7 907.0,98.5 909.0,98.8 911.0,98.6 913.0,98.8 915.0,98.6 917.0,98.4 919.0,98.6 921.0,98.6 923.0,98.9 925.0,98.9 927.0,98.7 929.0,98.9 931.0,99.0 933.0,99.2 935.0,99.3 937.0,99.3 939.0,99.4 941.0,99.4 943.0,99.7 945.0,99.7 947.0,99.7 949.0,100.0 951.0,100.2 953.0,99.9 955.0,100.0 957.0,100.2 959.0,100.1 961.0,100.1 963.0,100.2 965.0,100.1" fill="none" stroke="#8cb030" stroke-width="1.3" stroke-linejoin="round" opacity="1.0"/><polyline points="567.0,100.0 569.0,100.2 571.0,100.6 573.0,100.8 575.0,100.5 577.0,100.9 579.0,101.1 581.0,101.3 583.0,101.3 585.0,101.3 587.0,101.3 589.0,101.1 591.0,101.0 593.0,101.2 595.0,101.1 597.0,101.0 599.0,100.8 601.0,100.4 603.0,100.4 605.0,100.2 607.0,99.9 609.0,99.8 611.0,99.4 613.0,99.3 615.0,99.0 617.0,98.6 619.0,98.6 621.0,98.4 623.0,98.6 625.0,98.2 627.0,98.1 629.0,97.9 631.0,97.9 633.0,97.9 635.0,97.8 637.0,97.8 639.0,98.3 641.0,98.2 643.0,98.3 645.0,98.5 647.0,98.5 649.0,98.7 651.0,98.8 653.0,99.1 655.0,99.3 657.0,99.8 659.0,99.9 661.0,100.3 663.0,100.2 665.0,100.7 667.0,100.7 669.0,100.6 671.0,100.8 673.0,101.1 675.0,101.4 677.0,101.1 679.0,101.3 681.0,101.2 683.0,101.4 685.0,100.9 687.0,101.0 689.0,101.1 691.0,100.7 693.0,100.5 695.0,100.2 697.0,100.1 699.0,99.9 701.0,100.0 703.0,99.5 705.0,99.4 707.0,99.1 709.0,99.1 711.0,99.0 713.0,98.7 715.0,98.3 717.0,98.4 719.0,98.4 721.0,98.2 723.0,97.8 725.0,98.2 727.0,98.2 729.0,97.9 731.0,97.9 733.0,98.0 735.0,98.3 737.0,98.6 739.0,98.6 741.0,98.9 743.0,98.7 745.0,99.0 747.0,99.4 749.0,99.6 751.0,99.6 753.0,100.0 755.0,100.0 757.0,100.1 759.0,100.5 761.0,100.4 763.0,100.9 765.0,100.9 767.0,101.0 769.0,101.2 771.0,101.1 773.0,101.2 775.0,100.9 777.0,101.4 779.0,101.1 781.0,101.2 783.0,100.7 785.0,100.8 787.0,100.7 789.0,100.3 791.0,100.0 793.0,99.8 795.0,99.6 797.0,99.7 799.0,99.2 801.0,99.3 803.0,98.9 805.0,98.8 807.0,98.6 809.0,98.5 811.0,98.4 813.0,98.2 815.0,98.0 817.0,98.2 819.0,97.9 821.0,98.1 823.0,98.2 825.0,98.2 827.0,98.1 829.0,98.4 831.0,98.6 833.0,98.5 835.0,98.6 837.0,98.9 839.0,99.3 841.0,99.1 843.0,99.3 845.0,99.7 847.0,100.0 849.0,100.3 851.0,100.3 853.0,100.8 855.0,100.6 857.0,101.0 859.0,100.8 861.0,100.8 863.0,101.0 865.0,101.0 867.0,101.2 869.0,101.2 871.0,101.0 873.0,101.3 875.0,100.9 877.0,100.7 879.0,100.5 881.0,100.7 883.0,100.6 885.0,100.0 887.0,99.7 889.0,99.9 891.0,99.4 893.0,99.6 895.0,99.1 897.0,99.0 899.0,98.6 901.0,98.7 903.0,98.4 905.0,98.2 907.0,98.4 909.0,97.9 911.0,98.1 913.0,97.8 915.0,98.1 917.0,98.0 919.0,98.3 921.0,98.0 923.0,98.3 925.0,98.4 927.0,98.8 929.0,99.0 931.0,99.0 933.0,99.0 935.0,99.2 937.0,99.5 939.0,99.8 941.0,99.9 943.0,100.1 945.0,100.5 947.0,100.7 949.0,100.6 951.0,101.1 953.0,100.9 955.0,101.1 957.0,101.0 959.0,101.4 961.0,101.4 963.0,101.1 965.0,101.3" fill="none" stroke="#d8d028" stroke-width="1.3" stroke-linejoin="round" opacity="1.0"/><polyline points="567.0,110.1 569.0,109.8 571.0,109.8 573.0,109.7 575.0,109.7 577.0,109.5 579.0,109.5 581.0,109.5 583.0,109.4 585.0,109.4 587.0,109.5 589.0,109.4 591.0,109.5 593.0,109.4 595.0,109.6 597.0,109.7 599.0,109.6 601.0,109.8 603.0,109.9 605.0,109.9 607.0,110.0 609.0,110.1 611.0,110.4 613.0,110.3 615.0,110.6 617.0,110.5 619.0,110.7 621.0,110.7 623.0,110.8 625.0,110.9 627.0,110.8 629.0,110.9 631.0,111.1 633.0,111.0 635.0,111.1 637.0,111.1 639.0,110.8 641.0,110.8 643.0,110.9 645.0,110.8 647.0,110.6 649.0,110.6 651.0,110.4 653.0,110.4 655.0,110.2 657.0,110.1 659.0,110.2 661.0,109.9 663.0,109.9 665.0,109.7 667.0,109.7 669.0,109.5 671.0,109.5 673.0,109.4 675.0,109.5 677.0,109.3 679.0,109.4 681.0,109.4 683.0,109.3 685.0,109.4 687.0,109.5 689.0,109.6 691.0,109.6 693.0,109.6 695.0,109.9 697.0,109.9 699.0,110.0 701.0,110.0 703.0,110.1 705.0,110.2 707.0,110.3 709.0,110.4 711.0,110.6 713.0,110.7 715.0,110.8 717.0,110.8 719.0,110.8 721.0,111.0 723.0,111.0 725.0,111.0 727.0,111.0 729.0,111.0 731.0,111.1 733.0,111.0 735.0,110.9 737.0,110.8 739.0,110.7 741.0,110.6 743.0,110.7 745.0,110.4 747.0,110.3 749.0,110.2 751.0,110.1 753.0,110.1 755.0,109.8 757.0,109.9 759.0,109.8 761.0,109.6 763.0,109.6 765.0,109.5 767.0,109.4 769.0,109.4 771.0,109.3 773.0,109.5 775.0,109.5 777.0,109.5 779.0,109.4 781.0,109.5 783.0,109.5 785.0,109.7 787.0,109.7 789.0,109.8 791.0,110.0 793.0,109.9 795.0,110.1 797.0,110.3 799.0,110.3 801.0,110.4 803.0,110.6 805.0,110.6 807.0,110.7 809.0,110.8 811.0,110.8 813.0,110.9 815.0,110.9 817.0,111.0 819.0,111.0 821.0,111.0 823.0,111.0 825.0,111.0 827.0,110.9 829.0,110.8 831.0,110.8 833.0,110.7 835.0,110.7 837.0,110.5 839.0,110.5 841.0,110.3 843.0,110.2 845.0,110.1 847.0,109.9 849.0,110.0 851.0,109.8 853.0,109.7 855.0,109.7 857.0,109.6 859.0,109.5 861.0,109.4 863.0,109.5 865.0,109.4 867.0,109.4 869.0,109.5 871.0,109.5 873.0,109.5 875.0,109.4 877.0,109.6 879.0,109.7 881.0,109.8 883.0,109.7 885.0,109.8 887.0,110.0 889.0,110.0 891.0,110.2 893.0,110.4 895.0,110.4 897.0,110.5 899.0,110.6 901.0,110.7 903.0,110.9 905.0,110.9 907.0,110.9 909.0,111.0 911.0,111.0 913.0,111.1 915.0,110.9 917.0,111.0 919.0,110.9 921.0,110.9 923.0,110.8 925.0,110.8 927.0,110.7 929.0,110.6 931.0,110.4 933.0,110.4 935.0,110.3 937.0,110.1 939.0,110.0 941.0,110.0 943.0,109.8 945.0,109.8 947.0,109.7 949.0,109.7 951.0,109.5 953.0,109.5 955.0,109.5 957.0,109.4 959.0,109.4 961.0,109.5 963.0,109.4 965.0,109.4" fill="none" stroke="#8448a0" stroke-width="5.0" stroke-linejoin="round" opacity="1.0"/><polyline points="567.0,107.6 568.0,109.6 569.0,109.2 570.0,110.9 571.0,108.7 572.0,109.3 573.0,110.5 574.0,111.3 575.0,108.9 576.0,109.0 577.0,110.0 578.0,111.7 579.0,107.9 580.0,111.9 581.0,110.6 582.0,108.8 583.0,110.3 584.0,108.5 585.0,107.2 586.0,110.7 587.0,108.8 588.0,109.5 589.0,109.4 590.0,111.5 591.0,110.8 592.0,107.0 593.0,110.0 594.0,109.3 595.0,109.3 596.0,111.3 597.0,109.1 598.0,109.5 599.0,111.7 600.0,109.4 601.0,109.7 602.0,109.9 603.0,111.5 604.0,110.8 605.0,111.2 606.0,109.5 607.0,107.7 608.0,111.0 609.0,110.4 610.0,111.6 611.0,111.7 612.0,108.3 613.0,108.9 614.0,108.2 615.0,112.1 616.0,108.4 617.0,108.4 618.0,111.9 619.0,111.0 620.0,108.4 621.0,111.7 622.0,111.9 623.0,110.7 624.0,108.5 625.0,111.9 626.0,110.5 627.0,111.4 628.0,113.5 629.0,112.6 630.0,112.9 631.0,109.1 632.0,110.1 633.0,111.1 634.0,108.4 635.0,113.5 636.0,109.8 637.0,109.7 638.0,110.0 639.0,109.7 640.0,112.8 641.0,111.2 642.0,110.9 643.0,110.4 644.0,108.5 645.0,109.7 646.0,112.6 647.0,112.3 648.0,112.5 649.0,109.3 650.0,109.0 651.0,108.2 652.0,110.6 653.0,109.7 654.0,110.2 655.0,110.2 656.0,110.7 657.0,109.5 658.0,111.7 659.0,108.5 660.0,112.2 661.0,110.3 662.0,107.6 663.0,108.9 664.0,110.0 665.0,109.3 666.0,110.1 667.0,108.8 668.0,108.5 669.0,111.1 670.0,108.5 671.0,110.6 672.0,111.1 673.0,110.0 674.0,109.2 675.0,111.7 676.0,109.1 677.0,111.4 678.0,107.1 679.0,109.1 680.0,110.1 681.0,107.1 682.0,111.3 683.0,107.2 684.0,109.9 685.0,107.8 686.0,111.7 687.0,109.8 688.0,111.1 689.0,109.5 690.0,110.5 691.0,110.5 692.0,108.6 693.0,108.2 694.0,111.5 695.0,107.9 696.0,112.0 697.0,108.3 698.0,107.8 699.0,107.9 700.0,111.5 701.0,112.4 702.0,109.7 703.0,111.0 704.0,109.0 705.0,112.4 706.0,111.3 707.0,108.6 708.0,108.1 709.0,111.5 710.0,108.2 711.0,112.3 712.0,109.6 713.0,109.3 714.0,111.1 715.0,109.8 716.0,111.1 717.0,109.0 718.0,113.0 719.0,110.0 720.0,112.7 721.0,109.1 722.0,112.5 723.0,113.5 724.0,110.4 725.0,108.6 726.0,110.4 727.0,111.7 728.0,109.6 729.0,111.2 730.0,108.9 731.0,110.8 732.0,112.1 733.0,110.6 734.0,111.8 735.0,108.9 736.0,112.6 737.0,108.9 738.0,113.0 739.0,113.3 740.0,113.0 741.0,110.8 742.0,109.5 743.0,109.8 744.0,111.8 745.0,110.5 746.0,112.7 747.0,108.3 748.0,110.2 749.0,112.2 750.0,110.7 751.0,110.4 752.0,108.0 753.0,108.2 754.0,108.8 755.0,112.0 756.0,111.7 757.0,108.4 758.0,112.0 759.0,107.3 760.0,110.2 761.0,112.1 762.0,108.8 763.0,111.9 764.0,110.4 765.0,107.2 766.0,108.6 767.0,109.2 768.0,108.1 769.0,110.7 770.0,107.8 771.0,110.9 772.0,108.4 773.0,107.2 774.0,109.7 775.0,107.3 776.0,109.7 777.0,110.9 778.0,109.9 779.0,109.3 780.0,107.1 781.0,109.6 782.0,107.4 783.0,110.3 784.0,107.7 785.0,110.0 786.0,108.9 787.0,109.1 788.0,110.6 789.0,108.0 790.0,108.1 791.0,112.2 792.0,109.1 793.0,111.8 794.0,112.0 795.0,110.0 796.0,108.3 797.0,108.1 798.0,112.2 799.0,108.3 800.0,110.3 801.0,110.6 802.0,108.5 803.0,110.4 804.0,108.8 805.0,110.8 806.0,110.7 807.0,110.0 808.0,109.2 809.0,110.3 810.0,109.3 811.0,108.9 812.0,109.5 813.0,112.8 814.0,110.9 815.0,113.0 816.0,108.4 817.0,113.3 818.0,110.9 819.0,112.5 820.0,111.4 821.0,112.0 822.0,109.6 823.0,112.3 824.0,109.2 825.0,109.7 826.0,108.5 827.0,110.4 828.0,111.0 829.0,109.8 830.0,112.9 831.0,108.6 832.0,111.2 833.0,109.3 834.0,111.2 835.0,112.1 836.0,111.7 837.0,108.3 838.0,109.2 839.0,111.0 840.0,112.9 841.0,108.0 842.0,110.9 843.0,111.2 844.0,111.8 845.0,109.3 846.0,111.7 847.0,109.8 848.0,112.2 849.0,107.4 850.0,112.2 851.0,109.4 852.0,109.3 853.0,107.6 854.0,108.4 855.0,110.9 856.0,110.5 857.0,107.8 858.0,108.7 859.0,107.6 860.0,107.9 861.0,108.0 862.0,108.6 863.0,111.9 864.0,112.0 865.0,110.9 866.0,109.3 867.0,109.4 868.0,110.9 869.0,111.5 870.0,110.7 871.0,110.1 872.0,107.9 873.0,110.1 874.0,111.3 875.0,111.0 876.0,107.4 877.0,110.7 878.0,108.8 879.0,107.9 880.0,112.1 881.0,110.6 882.0,111.1 883.0,107.9 884.0,111.6 885.0,112.2 886.0,112.1 887.0,111.3 888.0,111.8 889.0,111.7 890.0,110.6 891.0,109.9 892.0,112.0 893.0,111.8 894.0,112.3 895.0,109.4 896.0,112.9 897.0,110.7 898.0,112.9 899.0,108.6 900.0,113.1 901.0,112.2 902.0,109.5 903.0,112.6 904.0,109.4 905.0,109.3 906.0,110.7 907.0,109.5 908.0,110.9 909.0,113.1 910.0,111.9 911.0,112.1 912.0,110.4 913.0,112.5 914.0,112.5 915.0,111.9 916.0,113.3 917.0,112.7 918.0,110.5 919.0,108.8 920.0,111.7 921.0,112.7 922.0,110.0 923.0,111.3 924.0,112.6 925.0,112.3 926.0,108.2 927.0,110.6 928.0,108.1 929.0,108.6 930.0,112.2 931.0,110.1 932.0,111.0 933.0,110.2 934.0,109.5 935.0,108.8 936.0,109.5 937.0,112.0 938.0,110.8 939.0,109.0 940.0,107.9 941.0,108.8 942.0,111.0 943.0,109.6 944.0,110.7 945.0,111.4 946.0,107.8 947.0,110.7 948.0,107.3 949.0,111.3 950.0,107.9 951.0,108.4 952.0,111.9 953.0,108.8 954.0,108.0 955.0,111.5 956.0,110.0 957.0,111.5 958.0,108.9 959.0,109.4 960.0,111.8 961.0,109.4 962.0,111.9 963.0,107.8 964.0,111.1 965.0,107.7" fill="none" stroke="#9a5ab0" stroke-width="1.0" stroke-linejoin="round" opacity="0.6"/><polyline points="567.0,121.0 568.0,120.7 569.0,120.8 570.0,121.3 571.0,121.0 572.0,121.2 573.0,120.8 574.0,120.9 575.0,120.8 576.0,121.0 577.0,121.2 578.0,121.0 579.0,120.9 580.0,121.3 581.0,121.2 582.0,121.1 583.0,120.7 584.0,121.1 585.0,121.0 586.0,121.3 587.0,120.9 588.0,121.1 589.0,121.1 590.0,120.9 591.0,121.0 592.0,121.1 593.0,121.2 594.0,121.0 595.0,120.9 596.0,121.3 597.0,120.7 598.0,121.2 599.0,121.1 600.0,121.0 601.0,121.0 602.0,121.1 603.0,121.2 604.0,121.1 605.0,121.1 606.0,120.7 607.0,120.9 608.0,120.8 609.0,121.3 610.0,121.2 611.0,120.8 612.0,121.0 613.0,121.0 614.0,120.7 615.0,120.9 616.0,121.1 617.0,121.1 618.0,120.8 619.0,121.1 620.0,120.8 621.0,121.0 622.0,120.9 623.0,121.3 624.0,121.1 625.0,121.2 626.0,121.1 627.0,120.9 628.0,121.2 629.0,121.1 630.0,121.1 631.0,120.8 632.0,120.8 633.0,121.0 634.0,121.2 635.0,121.1 636.0,120.9 637.0,120.7 638.0,121.0 639.0,121.2 640.0,120.8 641.0,121.1 642.0,120.8 643.0,120.8 644.0,120.7 645.0,120.8 646.0,120.9 647.0,121.2 648.0,121.2 649.0,120.8 650.0,120.8 651.0,121.2 652.0,120.8 653.0,120.8 654.0,120.9 655.0,120.7 656.0,120.8 657.0,120.9 658.0,120.9 659.0,121.2 660.0,120.8 661.0,120.8 662.0,121.2 663.0,120.9 664.0,121.2 665.0,121.0 666.0,121.1 667.0,120.8 668.0,120.7 669.0,121.1 670.0,120.9 671.0,121.0 672.0,121.0 673.0,121.1 674.0,120.8 675.0,120.9 676.0,121.2 677.0,121.0 678.0,120.8 679.0,121.0 680.0,120.8 681.0,121.1 682.0,120.7 683.0,121.1 684.0,121.0 685.0,120.9 686.0,121.2 687.0,120.8 688.0,120.8 689.0,120.7 690.0,121.0 691.0,121.1 692.0,121.0 693.0,120.9 694.0,121.1 695.0,120.7 696.0,120.8 697.0,121.0 698.0,121.2 699.0,121.0 700.0,121.0 701.0,121.1 702.0,120.9 703.0,121.2 704.0,121.1 705.0,120.8 706.0,120.9 707.0,121.1 708.0,120.8 709.0,120.7 710.0,121.2 711.0,120.9 712.0,120.9 713.0,121.0 714.0,121.2 715.0,120.7 716.0,120.8 717.0,120.7 718.0,120.9 719.0,120.9 720.0,121.1 721.0,121.0 722.0,121.0 723.0,120.9 724.0,121.0 725.0,120.8 726.0,121.1 727.0,121.1 728.0,121.1 729.0,120.7 730.0,121.0 731.0,121.1 732.0,120.9 733.0,121.2 734.0,121.2 735.0,121.1 736.0,121.1 737.0,121.0 738.0,121.1 739.0,120.7 740.0,121.0 741.0,121.0 742.0,121.0 743.0,120.8 744.0,120.7 745.0,121.0 746.0,121.1 747.0,120.8 748.0,120.7 749.0,120.7 750.0,120.7 751.0,121.0 752.0,121.2 753.0,121.1 754.0,120.8 755.0,121.0 756.0,120.6 757.0,121.1 758.0,120.8 759.0,120.6 760.0,121.0 761.0,120.7 762.0,120.8 763.0,120.6 764.0,120.9 765.0,120.9 766.0,121.1 767.0,120.6 768.0,121.1 769.0,120.7 770.0,120.7 771.0,121.0 772.0,120.8 773.0,120.8 774.0,120.9 775.0,120.7 776.0,121.1 777.0,120.7 778.0,121.1 779.0,121.1 780.0,120.9 781.0,120.6 782.0,121.1 783.0,120.6 784.0,120.9 785.0,120.8 786.0,120.6 787.0,121.0 788.0,121.0 789.0,120.9 790.0,120.8 791.0,120.9 792.0,120.9 793.0,120.7 794.0,121.1 795.0,121.2 796.0,121.1 797.0,121.2 798.0,120.8 799.0,121.2 800.0,120.6 801.0,120.9 802.0,120.7 803.0,120.9 804.0,121.0 805.0,121.0 806.0,120.9 807.0,120.8 808.0,120.7 809.0,120.8 810.0,120.7 811.0,120.7 812.0,121.0 813.0,120.9 814.0,120.8 815.0,120.7 816.0,121.0 817.0,120.7 818.0,120.7 819.0,120.9 820.0,121.0 821.0,121.2 822.0,121.0 823.0,121.1 824.0,121.1 825.0,121.0 826.0,121.0 827.0,120.6 828.0,120.7 829.0,120.6 830.0,121.1 831.0,121.0 832.0,120.9 833.0,120.7 834.0,120.8 835.0,120.7 836.0,120.9 837.0,121.2 838.0,120.7 839.0,120.6 840.0,120.7 841.0,120.8 842.0,121.1 843.0,121.0 844.0,120.8 845.0,120.6 846.0,120.6 847.0,120.7 848.0,121.0 849.0,120.8 850.0,121.2 851.0,121.1 852.0,121.0 853.0,120.8 854.0,121.0 855.0,120.6 856.0,120.6 857.0,120.9 858.0,120.9 859.0,120.7 860.0,120.7 861.0,120.6 862.0,121.1 863.0,121.0 864.0,121.1 865.0,121.1 866.0,120.8 867.0,121.0 868.0,120.8 869.0,121.0 870.0,121.1 871.0,120.6 872.0,120.6 873.0,120.7 874.0,120.9 875.0,120.8 876.0,120.6 877.0,121.0 878.0,121.0 879.0,120.8 880.0,120.6 881.0,121.1 882.0,120.9 883.0,120.6 884.0,120.7 885.0,120.9 886.0,121.1 887.0,120.8 888.0,120.9 889.0,120.7 890.0,120.7 891.0,121.1 892.0,120.8 893.0,120.6 894.0,120.9 895.0,120.6 896.0,120.7 897.0,120.8 898.0,120.9 899.0,120.9 900.0,121.0 901.0,120.8 902.0,120.6 903.0,121.0 904.0,120.6 905.0,120.8 906.0,120.8 907.0,120.9 908.0,121.0 909.0,120.7 910.0,120.9 911.0,120.9 912.0,120.8 913.0,120.6 914.0,121.1 915.0,120.9 916.0,120.6 917.0,120.7 918.0,121.1 919.0,120.7 920.0,120.8 921.0,121.0 922.0,121.0 923.0,120.9 924.0,121.0 925.0,120.5 926.0,120.6 927.0,121.1 928.0,121.0 929.0,120.5 930.0,120.5 931.0,120.7 932.0,121.1 933.0,120.6 934.0,120.9 935.0,121.1 936.0,120.9 937.0,121.1 938.0,120.7 939.0,120.6 940.0,120.5 941.0,121.0 942.0,120.6 943.0,121.1 944.0,120.9 945.0,120.6 946.0,121.0 947.0,120.6 948.0,120.8 949.0,120.6 950.0,121.0 951.0,121.0 952.0,121.1 953.0,120.5 954.0,121.0 955.0,120.8 956.0,121.0 957.0,120.8 958.0,120.9 959.0,120.9 960.0,121.0 961.0,120.5 962.0,120.5 963.0,120.8 964.0,120.7 965.0,120.7 966.0,120.5" fill="none" stroke="#2ec3d0" stroke-width="1.6" stroke-linejoin="round" opacity="1.0"/><rect x="550" y="30.7" width="6" height="100.3" fill="#a0a0a0" rx="0.5" opacity="0.9"/><line x1="553" y1="31" x2="553" y2="131" stroke="#1a1a1a" stroke-width="1.3" stroke-dasharray="2.2 1.8"/><line x1="553" y1="31" x2="553" y2="131" stroke="#c8b840" stroke-width="1.0" stroke-dasharray="1.8 2.2" stroke-dashoffset="2.2" opacity="0.8"/><path d="M114.5,30.8 L125.2,30.8 L119.85,35.4 Z" fill="#f08a20"/><path d="M115.3,36.6 h9.2 v9.6 h-2.6 l-2.05,3.6 l-2.05,-3.6 h-2.5 Z" fill="#080808" stroke="#f08a20" stroke-width="1.4" stroke-linejoin="round"/><text x="119.9" y="44.2" font-size="7.6" fill="#f09a30" text-anchor="middle" font-weight="bold" >T</text><line x1="120" y1="51" x2="120" y2="55" stroke="#888" stroke-width="0.8" stroke-dasharray="1 1"/><line x1="120.5" y1="55" x2="120.5" y2="62" stroke="#d8d028" stroke-width="1.2" /><line x1="120.3" y1="62" x2="120.3" y2="122" stroke="#b89048" stroke-width="0.9" opacity="0.85"/><path d="M27,87 h9 l3,4 l-3,4 h-9 Z" fill="#3a3820" stroke="#b0a838" stroke-width="0.8"/><text x="28.5" y="93.5" font-size="5.5" fill="#c8c050" text-anchor="start" font-weight="normal" >C1</text><path d="M27,107 h9 l3,4 l-3,4 h-9 Z" fill="#2c2030" stroke="#6a4a7a" stroke-width="0.8"/><text x="28.5" y="113.5" font-size="5.5" fill="#e0e0e0" text-anchor="start" font-weight="normal" >M2</text><path d="M27,117 h9 l3,4 l-3,4 h-9 Z" fill="#2ec3d0"/><text x="28.5" y="123.5" font-size="5.5" fill="#1a4a50" text-anchor="start" font-weight="normal" >C2</text><text x="120.2" y="127.6" font-size="7.2" fill="#c8c8c8" text-anchor="middle" font-weight="normal" >0 s</text><text x="214.05" y="127.6" font-size="7.2" fill="#c8c8c8" text-anchor="middle" font-weight="normal" >10 μs</text><text x="307.9" y="127.6" font-size="7.2" fill="#c8c8c8" text-anchor="middle" font-weight="normal" >20 μs</text><text x="401.74999999999994" y="127.6" font-size="7.2" fill="#c8c8c8" text-anchor="middle" font-weight="normal" >30 μs</text><text x="495.59999999999997" y="127.6" font-size="7.2" fill="#c8c8c8" text-anchor="middle" font-weight="normal" >40 μs</text><text x="589.45" y="127.6" font-size="7.2" fill="#c8c8c8" text-anchor="middle" font-weight="normal" >50 μs</text><text x="683.3" y="127.6" font-size="7.2" fill="#c8c8c8" text-anchor="middle" font-weight="normal" >60 μs</text><text x="777.15" y="127.6" font-size="7.2" fill="#c8c8c8" text-anchor="middle" font-weight="normal" >70 μs</text><text x="871.0" y="127.6" font-size="7.2" fill="#c8c8c8" text-anchor="middle" font-weight="normal" >80 μs</text><text x="962" y="43.2" font-size="7.2" fill="#3ab5c5" text-anchor="end" font-weight="normal" >400 A</text><text x="962" y="53.25" font-size="7.2" fill="#3ab5c5" text-anchor="end" font-weight="normal" >350 A</text><text x="962" y="63.300000000000004" font-size="7.2" fill="#3ab5c5" text-anchor="end" font-weight="normal" >300 A</text><text x="962" y="73.35000000000001" font-size="7.2" fill="#3ab5c5" text-anchor="end" font-weight="normal" >250 A</text><text x="962" y="83.4" font-size="7.2" fill="#3ab5c5" text-anchor="end" font-weight="normal" >200 A</text><text x="962" y="93.45" font-size="7.2" fill="#3ab5c5" text-anchor="end" font-weight="normal" >150 A</text><text x="962" y="103.5" font-size="7.2" fill="#3ab5c5" text-anchor="end" font-weight="normal" >100 A</text><text x="962" y="113.55000000000001" font-size="7.2" fill="#3ab5c5" text-anchor="end" font-weight="normal" >50 A</text><text x="962" y="123.60000000000001" font-size="7.2" fill="#3ab5c5" text-anchor="end" font-weight="normal" >0 A</text><path d="M942.3,34.3 h18.6 v17.9 Z" fill="#4e4e4e" stroke="#2ab8cc" stroke-width="1.3" stroke-linejoin="round"/><circle cx="957.1" cy="37.9" r="1.9" fill="none" stroke="#2ab8cc" stroke-width="1.1"/><path d="M955.8,39.3 L951.2,43" stroke="#2ab8cc" stroke-width="1.2"/><rect x="26" y="131" width="940" height="13.2" fill="#595959" rx="0" /><text x="33.3" y="139.7" font-size="7.4" fill="#0e0e0e" text-anchor="start" font-weight="normal" textLength="72.4" lengthAdjust="spacingAndGlyphs" >Horizontal Zoom Scale</text><rect x="111.3" y="133.3" width="48.7" height="8.7" fill="#dcdcdc" rx="1" /><text x="135.6" y="139.7" font-size="7.6" fill="#111" text-anchor="middle" font-weight="normal" >40.00 ns/div</text><rect x="169" y="133.5" width="19.30000000000001" height="8.5" fill="#3c3c3c" rx="1" /><line x1="175.65" y1="137.75" x2="181.65" y2="137.75" stroke="#888" stroke-width="1.2" /><line x1="178.65" y1="134.75" x2="178.65" y2="140.75" stroke="#888" stroke-width="1.2" /><rect x="198" y="133.5" width="20" height="8.5" fill="#3c3c3c" rx="1" /><line x1="204.5" y1="137.75" x2="211.5" y2="137.75" stroke="#888" stroke-width="1.2" /><rect x="336" y="133.5" width="20" height="8.5" fill="#3c3c3c" rx="1" /><line x1="343.0" y1="137.75" x2="349.0" y2="137.75" stroke="#888" stroke-width="1.2" /><line x1="346.0" y1="134.75" x2="346.0" y2="140.75" stroke="#888" stroke-width="1.2" /><rect x="365.7" y="133.5" width="19.30000000000001" height="8.5" fill="#3c3c3c" rx="1" /><line x1="371.85" y1="137.75" x2="378.85" y2="137.75" stroke="#888" stroke-width="1.2" /><text x="224" y="139.7" font-size="7.6" fill="#0e0e0e" text-anchor="start" font-weight="normal" >(250.00x zoom)</text><text x="285" y="139.7" font-size="7.6" fill="#0e0e0e" text-anchor="start" font-weight="normal" >Vertical Zoom</text><text x="391.7" y="139.7" font-size="7.6" fill="#0e0e0e" text-anchor="start" font-weight="normal" >(1.00x zoom)</text><path d="M954,134.3 l6.8,6.8 M960.8,134.3 l-6.8,6.8" stroke="#d0d0d0" stroke-width="1.0"/><rect x="26" y="144.2" width="940" height="389.1" fill="#000" rx="0" /><rect x="41.9" y="183.3" width="1" height="1" fill="#3c3c3c"/><rect x="60.7" y="183.3" width="1" height="1" fill="#3c3c3c"/><rect x="79.5" y="183.3" width="1" height="1" fill="#3c3c3c"/><rect x="98.3" y="183.3" width="1" height="1" fill="#3c3c3c"/><rect x="117.1" y="183.3" width="1" height="1" fill="#3c3c3c"/><rect x="135.9" y="183.3" width="1" height="1" fill="#3c3c3c"/><rect x="154.7" y="183.3" width="1" height="1" fill="#3c3c3c"/><rect x="173.5" y="183.3" width="1" height="1" fill="#3c3c3c"/><rect x="192.3" y="183.3" width="1" height="1" fill="#3c3c3c"/><rect x="211.1" y="183.3" width="1" height="1" fill="#3c3c3c"/><rect x="229.9" y="183.3" width="1" height="1" fill="#3c3c3c"/><rect x="248.7" y="183.3" width="1" height="1" fill="#3c3c3c"/><rect x="267.5" y="183.3" width="1" height="1" fill="#3c3c3c"/><rect x="286.3" y="183.3" width="1" height="1" fill="#3c3c3c"/><rect x="305.1" y="183.3" width="1" height="1" fill="#3c3c3c"/><rect x="323.9" y="183.3" width="1" height="1" fill="#3c3c3c"/><rect x="342.7" y="183.3" width="1" height="1" fill="#3c3c3c"/><rect x="361.5" y="183.3" width="1" height="1" fill="#3c3c3c"/><rect x="380.3" y="183.3" width="1" height="1" fill="#3c3c3c"/><rect x="399.1" y="183.3" width="1" height="1" fill="#3c3c3c"/><rect x="417.9" y="183.3" width="1" height="1" fill="#3c3c3c"/><rect x="436.7" y="183.3" width="1" height="1" fill="#3c3c3c"/><rect x="455.5" y="183.3" width="1" height="1" fill="#3c3c3c"/><rect x="474.3" y="183.3" width="1" height="1" fill="#3c3c3c"/><rect x="493.1" y="183.3" width="1" height="1" fill="#3c3c3c"/><rect x="511.9" y="183.3" width="1" height="1" fill="#3c3c3c"/><rect x="530.7" y="183.3" width="1" height="1" fill="#3c3c3c"/><rect x="549.5" y="183.3" width="1" height="1" fill="#3c3c3c"/><rect x="568.3" y="183.3" width="1" height="1" fill="#3c3c3c"/><rect x="587.1" y="183.3" width="1" height="1" fill="#3c3c3c"/><rect x="605.9" y="183.3" width="1" height="1" fill="#3c3c3c"/><rect x="624.7" y="183.3" width="1" height="1" fill="#3c3c3c"/><rect x="643.5" y="183.3" width="1" height="1" fill="#3c3c3c"/><rect x="662.3" y="183.3" width="1" height="1" fill="#3c3c3c"/><rect x="681.1" y="183.3" width="1" height="1" fill="#3c3c3c"/><rect x="699.9" y="183.3" width="1" height="1" fill="#3c3c3c"/><rect x="718.7" y="183.3" width="1" height="1" fill="#3c3c3c"/><rect x="737.5" y="183.3" width="1" height="1" fill="#3c3c3c"/><rect x="756.3" y="183.3" width="1" height="1" fill="#3c3c3c"/><rect x="775.1" y="183.3" width="1" height="1" fill="#3c3c3c"/><rect x="793.9" y="183.3" width="1" height="1" fill="#3c3c3c"/><rect x="812.7" y="183.3" width="1" height="1" fill="#3c3c3c"/><rect x="831.5" y="183.3" width="1" height="1" fill="#3c3c3c"/><rect x="850.3" y="183.3" width="1" height="1" fill="#3c3c3c"/><rect x="869.1" y="183.3" width="1" height="1" fill="#3c3c3c"/><rect x="887.9" y="183.3" width="1" height="1" fill="#3c3c3c"/><rect x="906.7" y="183.3" width="1" height="1" fill="#3c3c3c"/><rect x="925.5" y="183.3" width="1" height="1" fill="#3c3c3c"/><rect x="944.3" y="183.3" width="1" height="1" fill="#3c3c3c"/><rect x="963.1" y="183.3" width="1" height="1" fill="#3c3c3c"/><rect x="41.9" y="222.1" width="1" height="1" fill="#3c3c3c"/><rect x="60.7" y="222.1" width="1" height="1" fill="#3c3c3c"/><rect x="79.5" y="222.1" width="1" height="1" fill="#3c3c3c"/><rect x="98.3" y="222.1" width="1" height="1" fill="#3c3c3c"/><rect x="117.1" y="222.1" width="1" height="1" fill="#3c3c3c"/><rect x="135.9" y="222.1" width="1" height="1" fill="#3c3c3c"/><rect x="154.7" y="222.1" width="1" height="1" fill="#3c3c3c"/><rect x="173.5" y="222.1" width="1" height="1" fill="#3c3c3c"/><rect x="192.3" y="222.1" width="1" height="1" fill="#3c3c3c"/><rect x="211.1" y="222.1" width="1" height="1" fill="#3c3c3c"/><rect x="229.9" y="222.1" width="1" height="1" fill="#3c3c3c"/><rect x="248.7" y="222.1" width="1" height="1" fill="#3c3c3c"/><rect x="267.5" y="222.1" width="1" height="1" fill="#3c3c3c"/><rect x="286.3" y="222.1" width="1" height="1" fill="#3c3c3c"/><rect x="305.1" y="222.1" width="1" height="1" fill="#3c3c3c"/><rect x="323.9" y="222.1" width="1" height="1" fill="#3c3c3c"/><rect x="342.7" y="222.1" width="1" height="1" fill="#3c3c3c"/><rect x="361.5" y="222.1" width="1" height="1" fill="#3c3c3c"/><rect x="380.3" y="222.1" width="1" height="1" fill="#3c3c3c"/><rect x="399.1" y="222.1" width="1" height="1" fill="#3c3c3c"/><rect x="417.9" y="222.1" width="1" height="1" fill="#3c3c3c"/><rect x="436.7" y="222.1" width="1" height="1" fill="#3c3c3c"/><rect x="455.5" y="222.1" width="1" height="1" fill="#3c3c3c"/><rect x="474.3" y="222.1" width="1" height="1" fill="#3c3c3c"/><rect x="493.1" y="222.1" width="1" height="1" fill="#3c3c3c"/><rect x="511.9" y="222.1" width="1" height="1" fill="#3c3c3c"/><rect x="530.7" y="222.1" width="1" height="1" fill="#3c3c3c"/><rect x="549.5" y="222.1" width="1" height="1" fill="#3c3c3c"/><rect x="568.3" y="222.1" width="1" height="1" fill="#3c3c3c"/><rect x="587.1" y="222.1" width="1" height="1" fill="#3c3c3c"/><rect x="605.9" y="222.1" width="1" height="1" fill="#3c3c3c"/><rect x="624.7" y="222.1" width="1" height="1" fill="#3c3c3c"/><rect x="643.5" y="222.1" width="1" height="1" fill="#3c3c3c"/><rect x="662.3" y="222.1" width="1" height="1" fill="#3c3c3c"/><rect x="681.1" y="222.1" width="1" height="1" fill="#3c3c3c"/><rect x="699.9" y="222.1" width="1" height="1" fill="#3c3c3c"/><rect x="718.7" y="222.1" width="1" height="1" fill="#3c3c3c"/><rect x="737.5" y="222.1" width="1" height="1" fill="#3c3c3c"/><rect x="756.3" y="222.1" width="1" height="1" fill="#3c3c3c"/><rect x="775.1" y="222.1" width="1" height="1" fill="#3c3c3c"/><rect x="793.9" y="222.1" width="1" height="1" fill="#3c3c3c"/><rect x="812.7" y="222.1" width="1" height="1" fill="#3c3c3c"/><rect x="831.5" y="222.1" width="1" height="1" fill="#3c3c3c"/><rect x="850.3" y="222.1" width="1" height="1" fill="#3c3c3c"/><rect x="869.1" y="222.1" width="1" height="1" fill="#3c3c3c"/><rect x="887.9" y="222.1" width="1" height="1" fill="#3c3c3c"/><rect x="906.7" y="222.1" width="1" height="1" fill="#3c3c3c"/><rect x="925.5" y="222.1" width="1" height="1" fill="#3c3c3c"/><rect x="944.3" y="222.1" width="1" height="1" fill="#3c3c3c"/><rect x="963.1" y="222.1" width="1" height="1" fill="#3c3c3c"/><rect x="41.9" y="260.9" width="1" height="1" fill="#3c3c3c"/><rect x="60.7" y="260.9" width="1" height="1" fill="#3c3c3c"/><rect x="79.5" y="260.9" width="1" height="1" fill="#3c3c3c"/><rect x="98.3" y="260.9" width="1" height="1" fill="#3c3c3c"/><rect x="117.1" y="260.9" width="1" height="1" fill="#3c3c3c"/><rect x="135.9" y="260.9" width="1" height="1" fill="#3c3c3c"/><rect x="154.7" y="260.9" width="1" height="1" fill="#3c3c3c"/><rect x="173.5" y="260.9" width="1" height="1" fill="#3c3c3c"/><rect x="192.3" y="260.9" width="1" height="1" fill="#3c3c3c"/><rect x="211.1" y="260.9" width="1" height="1" fill="#3c3c3c"/><rect x="229.9" y="260.9" width="1" height="1" fill="#3c3c3c"/><rect x="248.7" y="260.9" width="1" height="1" fill="#3c3c3c"/><rect x="267.5" y="260.9" width="1" height="1" fill="#3c3c3c"/><rect x="286.3" y="260.9" width="1" height="1" fill="#3c3c3c"/><rect x="305.1" y="260.9" width="1" height="1" fill="#3c3c3c"/><rect x="323.9" y="260.9" width="1" height="1" fill="#3c3c3c"/><rect x="342.7" y="260.9" width="1" height="1" fill="#3c3c3c"/><rect x="361.5" y="260.9" width="1" height="1" fill="#3c3c3c"/><rect x="380.3" y="260.9" width="1" height="1" fill="#3c3c3c"/><rect x="399.1" y="260.9" width="1" height="1" fill="#3c3c3c"/><rect x="417.9" y="260.9" width="1" height="1" fill="#3c3c3c"/><rect x="436.7" y="260.9" width="1" height="1" fill="#3c3c3c"/><rect x="455.5" y="260.9" width="1" height="1" fill="#3c3c3c"/><rect x="474.3" y="260.9" width="1" height="1" fill="#3c3c3c"/><rect x="493.1" y="260.9" width="1" height="1" fill="#3c3c3c"/><rect x="511.9" y="260.9" width="1" height="1" fill="#3c3c3c"/><rect x="530.7" y="260.9" width="1" height="1" fill="#3c3c3c"/><rect x="549.5" y="260.9" width="1" height="1" fill="#3c3c3c"/><rect x="568.3" y="260.9" width="1" height="1" fill="#3c3c3c"/><rect x="587.1" y="260.9" width="1" height="1" fill="#3c3c3c"/><rect x="605.9" y="260.9" width="1" height="1" fill="#3c3c3c"/><rect x="624.7" y="260.9" width="1" height="1" fill="#3c3c3c"/><rect x="643.5" y="260.9" width="1" height="1" fill="#3c3c3c"/><rect x="662.3" y="260.9" width="1" height="1" fill="#3c3c3c"/><rect x="681.1" y="260.9" width="1" height="1" fill="#3c3c3c"/><rect x="699.9" y="260.9" width="1" height="1" fill="#3c3c3c"/><rect x="718.7" y="260.9" width="1" height="1" fill="#3c3c3c"/><rect x="737.5" y="260.9" width="1" height="1" fill="#3c3c3c"/><rect x="756.3" y="260.9" width="1" height="1" fill="#3c3c3c"/><rect x="775.1" y="260.9" width="1" height="1" fill="#3c3c3c"/><rect x="793.9" y="260.9" width="1" height="1" fill="#3c3c3c"/><rect x="812.7" y="260.9" width="1" height="1" fill="#3c3c3c"/><rect x="831.5" y="260.9" width="1" height="1" fill="#3c3c3c"/><rect x="850.3" y="260.9" width="1" height="1" fill="#3c3c3c"/><rect x="869.1" y="260.9" width="1" height="1" fill="#3c3c3c"/><rect x="887.9" y="260.9" width="1" height="1" fill="#3c3c3c"/><rect x="906.7" y="260.9" width="1" height="1" fill="#3c3c3c"/><rect x="925.5" y="260.9" width="1" height="1" fill="#3c3c3c"/><rect x="944.3" y="260.9" width="1" height="1" fill="#3c3c3c"/><rect x="963.1" y="260.9" width="1" height="1" fill="#3c3c3c"/><rect x="41.9" y="299.7" width="1" height="1" fill="#3c3c3c"/><rect x="60.7" y="299.7" width="1" height="1" fill="#3c3c3c"/><rect x="79.5" y="299.7" width="1" height="1" fill="#3c3c3c"/><rect x="98.3" y="299.7" width="1" height="1" fill="#3c3c3c"/><rect x="117.1" y="299.7" width="1" height="1" fill="#3c3c3c"/><rect x="135.9" y="299.7" width="1" height="1" fill="#3c3c3c"/><rect x="154.7" y="299.7" width="1" height="1" fill="#3c3c3c"/><rect x="173.5" y="299.7" width="1" height="1" fill="#3c3c3c"/><rect x="192.3" y="299.7" width="1" height="1" fill="#3c3c3c"/><rect x="211.1" y="299.7" width="1" height="1" fill="#3c3c3c"/><rect x="229.9" y="299.7" width="1" height="1" fill="#3c3c3c"/><rect x="248.7" y="299.7" width="1" height="1" fill="#3c3c3c"/><rect x="267.5" y="299.7" width="1" height="1" fill="#3c3c3c"/><rect x="286.3" y="299.7" width="1" height="1" fill="#3c3c3c"/><rect x="305.1" y="299.7" width="1" height="1" fill="#3c3c3c"/><rect x="323.9" y="299.7" width="1" height="1" fill="#3c3c3c"/><rect x="342.7" y="299.7" width="1" height="1" fill="#3c3c3c"/><rect x="361.5" y="299.7" width="1" height="1" fill="#3c3c3c"/><rect x="380.3" y="299.7" width="1" height="1" fill="#3c3c3c"/><rect x="399.1" y="299.7" width="1" height="1" fill="#3c3c3c"/><rect x="417.9" y="299.7" width="1" height="1" fill="#3c3c3c"/><rect x="436.7" y="299.7" width="1" height="1" fill="#3c3c3c"/><rect x="455.5" y="299.7" width="1" height="1" fill="#3c3c3c"/><rect x="474.3" y="299.7" width="1" height="1" fill="#3c3c3c"/><rect x="493.1" y="299.7" width="1" height="1" fill="#3c3c3c"/><rect x="511.9" y="299.7" width="1" height="1" fill="#3c3c3c"/><rect x="530.7" y="299.7" width="1" height="1" fill="#3c3c3c"/><rect x="549.5" y="299.7" width="1" height="1" fill="#3c3c3c"/><rect x="568.3" y="299.7" width="1" height="1" fill="#3c3c3c"/><rect x="587.1" y="299.7" width="1" height="1" fill="#3c3c3c"/><rect x="605.9" y="299.7" width="1" height="1" fill="#3c3c3c"/><rect x="624.7" y="299.7" width="1" height="1" fill="#3c3c3c"/><rect x="643.5" y="299.7" width="1" height="1" fill="#3c3c3c"/><rect x="662.3" y="299.7" width="1" height="1" fill="#3c3c3c"/><rect x="681.1" y="299.7" width="1" height="1" fill="#3c3c3c"/><rect x="699.9" y="299.7" width="1" height="1" fill="#3c3c3c"/><rect x="718.7" y="299.7" width="1" height="1" fill="#3c3c3c"/><rect x="737.5" y="299.7" width="1" height="1" fill="#3c3c3c"/><rect x="756.3" y="299.7" width="1" height="1" fill="#3c3c3c"/><rect x="775.1" y="299.7" width="1" height="1" fill="#3c3c3c"/><rect x="793.9" y="299.7" width="1" height="1" fill="#3c3c3c"/><rect x="812.7" y="299.7" width="1" height="1" fill="#3c3c3c"/><rect x="831.5" y="299.7" width="1" height="1" fill="#3c3c3c"/><rect x="850.3" y="299.7" width="1" height="1" fill="#3c3c3c"/><rect x="869.1" y="299.7" width="1" height="1" fill="#3c3c3c"/><rect x="887.9" y="299.7" width="1" height="1" fill="#3c3c3c"/><rect x="906.7" y="299.7" width="1" height="1" fill="#3c3c3c"/><rect x="925.5" y="299.7" width="1" height="1" fill="#3c3c3c"/><rect x="944.3" y="299.7" width="1" height="1" fill="#3c3c3c"/><rect x="963.1" y="299.7" width="1" height="1" fill="#3c3c3c"/><rect x="41.9" y="338.5" width="1" height="1" fill="#3c3c3c"/><rect x="60.7" y="338.5" width="1" height="1" fill="#3c3c3c"/><rect x="79.5" y="338.5" width="1" height="1" fill="#3c3c3c"/><rect x="98.3" y="338.5" width="1" height="1" fill="#3c3c3c"/><rect x="117.1" y="338.5" width="1" height="1" fill="#3c3c3c"/><rect x="135.9" y="338.5" width="1" height="1" fill="#3c3c3c"/><rect x="154.7" y="338.5" width="1" height="1" fill="#3c3c3c"/><rect x="173.5" y="338.5" width="1" height="1" fill="#3c3c3c"/><rect x="192.3" y="338.5" width="1" height="1" fill="#3c3c3c"/><rect x="211.1" y="338.5" width="1" height="1" fill="#3c3c3c"/><rect x="229.9" y="338.5" width="1" height="1" fill="#3c3c3c"/><rect x="248.7" y="338.5" width="1" height="1" fill="#3c3c3c"/><rect x="267.5" y="338.5" width="1" height="1" fill="#3c3c3c"/><rect x="286.3" y="338.5" width="1" height="1" fill="#3c3c3c"/><rect x="305.1" y="338.5" width="1" height="1" fill="#3c3c3c"/><rect x="323.9" y="338.5" width="1" height="1" fill="#3c3c3c"/><rect x="342.7" y="338.5" width="1" height="1" fill="#3c3c3c"/><rect x="361.5" y="338.5" width="1" height="1" fill="#3c3c3c"/><rect x="380.3" y="338.5" width="1" height="1" fill="#3c3c3c"/><rect x="399.1" y="338.5" width="1" height="1" fill="#3c3c3c"/><rect x="417.9" y="338.5" width="1" height="1" fill="#3c3c3c"/><rect x="436.7" y="338.5" width="1" height="1" fill="#3c3c3c"/><rect x="455.5" y="338.5" width="1" height="1" fill="#3c3c3c"/><rect x="474.3" y="338.5" width="1" height="1" fill="#3c3c3c"/><rect x="493.1" y="338.5" width="1" height="1" fill="#3c3c3c"/><rect x="511.9" y="338.5" width="1" height="1" fill="#3c3c3c"/><rect x="530.7" y="338.5" width="1" height="1" fill="#3c3c3c"/><rect x="549.5" y="338.5" width="1" height="1" fill="#3c3c3c"/><rect x="568.3" y="338.5" width="1" height="1" fill="#3c3c3c"/><rect x="587.1" y="338.5" width="1" height="1" fill="#3c3c3c"/><rect x="605.9" y="338.5" width="1" height="1" fill="#3c3c3c"/><rect x="624.7" y="338.5" width="1" height="1" fill="#3c3c3c"/><rect x="643.5" y="338.5" width="1" height="1" fill="#3c3c3c"/><rect x="662.3" y="338.5" width="1" height="1" fill="#3c3c3c"/><rect x="681.1" y="338.5" width="1" height="1" fill="#3c3c3c"/><rect x="699.9" y="338.5" width="1" height="1" fill="#3c3c3c"/><rect x="718.7" y="338.5" width="1" height="1" fill="#3c3c3c"/><rect x="737.5" y="338.5" width="1" height="1" fill="#3c3c3c"/><rect x="756.3" y="338.5" width="1" height="1" fill="#3c3c3c"/><rect x="775.1" y="338.5" width="1" height="1" fill="#3c3c3c"/><rect x="793.9" y="338.5" width="1" height="1" fill="#3c3c3c"/><rect x="812.7" y="338.5" width="1" height="1" fill="#3c3c3c"/><rect x="831.5" y="338.5" width="1" height="1" fill="#3c3c3c"/><rect x="850.3" y="338.5" width="1" height="1" fill="#3c3c3c"/><rect x="869.1" y="338.5" width="1" height="1" fill="#3c3c3c"/><rect x="887.9" y="338.5" width="1" height="1" fill="#3c3c3c"/><rect x="906.7" y="338.5" width="1" height="1" fill="#3c3c3c"/><rect x="925.5" y="338.5" width="1" height="1" fill="#3c3c3c"/><rect x="944.3" y="338.5" width="1" height="1" fill="#3c3c3c"/><rect x="963.1" y="338.5" width="1" height="1" fill="#3c3c3c"/><rect x="41.9" y="377.3" width="1" height="1" fill="#3c3c3c"/><rect x="60.7" y="377.3" width="1" height="1" fill="#3c3c3c"/><rect x="79.5" y="377.3" width="1" height="1" fill="#3c3c3c"/><rect x="98.3" y="377.3" width="1" height="1" fill="#3c3c3c"/><rect x="117.1" y="377.3" width="1" height="1" fill="#3c3c3c"/><rect x="135.9" y="377.3" width="1" height="1" fill="#3c3c3c"/><rect x="154.7" y="377.3" width="1" height="1" fill="#3c3c3c"/><rect x="173.5" y="377.3" width="1" height="1" fill="#3c3c3c"/><rect x="192.3" y="377.3" width="1" height="1" fill="#3c3c3c"/><rect x="211.1" y="377.3" width="1" height="1" fill="#3c3c3c"/><rect x="229.9" y="377.3" width="1" height="1" fill="#3c3c3c"/><rect x="248.7" y="377.3" width="1" height="1" fill="#3c3c3c"/><rect x="267.5" y="377.3" width="1" height="1" fill="#3c3c3c"/><rect x="286.3" y="377.3" width="1" height="1" fill="#3c3c3c"/><rect x="305.1" y="377.3" width="1" height="1" fill="#3c3c3c"/><rect x="323.9" y="377.3" width="1" height="1" fill="#3c3c3c"/><rect x="342.7" y="377.3" width="1" height="1" fill="#3c3c3c"/><rect x="361.5" y="377.3" width="1" height="1" fill="#3c3c3c"/><rect x="380.3" y="377.3" width="1" height="1" fill="#3c3c3c"/><rect x="399.1" y="377.3" width="1" height="1" fill="#3c3c3c"/><rect x="417.9" y="377.3" width="1" height="1" fill="#3c3c3c"/><rect x="436.7" y="377.3" width="1" height="1" fill="#3c3c3c"/><rect x="455.5" y="377.3" width="1" height="1" fill="#3c3c3c"/><rect x="474.3" y="377.3" width="1" height="1" fill="#3c3c3c"/><rect x="493.1" y="377.3" width="1" height="1" fill="#3c3c3c"/><rect x="511.9" y="377.3" width="1" height="1" fill="#3c3c3c"/><rect x="530.7" y="377.3" width="1" height="1" fill="#3c3c3c"/><rect x="549.5" y="377.3" width="1" height="1" fill="#3c3c3c"/><rect x="568.3" y="377.3" width="1" height="1" fill="#3c3c3c"/><rect x="587.1" y="377.3" width="1" height="1" fill="#3c3c3c"/><rect x="605.9" y="377.3" width="1" height="1" fill="#3c3c3c"/><rect x="624.7" y="377.3" width="1" height="1" fill="#3c3c3c"/><rect x="643.5" y="377.3" width="1" height="1" fill="#3c3c3c"/><rect x="662.3" y="377.3" width="1" height="1" fill="#3c3c3c"/><rect x="681.1" y="377.3" width="1" height="1" fill="#3c3c3c"/><rect x="699.9" y="377.3" width="1" height="1" fill="#3c3c3c"/><rect x="718.7" y="377.3" width="1" height="1" fill="#3c3c3c"/><rect x="737.5" y="377.3" width="1" height="1" fill="#3c3c3c"/><rect x="756.3" y="377.3" width="1" height="1" fill="#3c3c3c"/><rect x="775.1" y="377.3" width="1" height="1" fill="#3c3c3c"/><rect x="793.9" y="377.3" width="1" height="1" fill="#3c3c3c"/><rect x="812.7" y="377.3" width="1" height="1" fill="#3c3c3c"/><rect x="831.5" y="377.3" width="1" height="1" fill="#3c3c3c"/><rect x="850.3" y="377.3" width="1" height="1" fill="#3c3c3c"/><rect x="869.1" y="377.3" width="1" height="1" fill="#3c3c3c"/><rect x="887.9" y="377.3" width="1" height="1" fill="#3c3c3c"/><rect x="906.7" y="377.3" width="1" height="1" fill="#3c3c3c"/><rect x="925.5" y="377.3" width="1" height="1" fill="#3c3c3c"/><rect x="944.3" y="377.3" width="1" height="1" fill="#3c3c3c"/><rect x="963.1" y="377.3" width="1" height="1" fill="#3c3c3c"/><rect x="41.9" y="416.1" width="1" height="1" fill="#3c3c3c"/><rect x="60.7" y="416.1" width="1" height="1" fill="#3c3c3c"/><rect x="79.5" y="416.1" width="1" height="1" fill="#3c3c3c"/><rect x="98.3" y="416.1" width="1" height="1" fill="#3c3c3c"/><rect x="117.1" y="416.1" width="1" height="1" fill="#3c3c3c"/><rect x="135.9" y="416.1" width="1" height="1" fill="#3c3c3c"/><rect x="154.7" y="416.1" width="1" height="1" fill="#3c3c3c"/><rect x="173.5" y="416.1" width="1" height="1" fill="#3c3c3c"/><rect x="192.3" y="416.1" width="1" height="1" fill="#3c3c3c"/><rect x="211.1" y="416.1" width="1" height="1" fill="#3c3c3c"/><rect x="229.9" y="416.1" width="1" height="1" fill="#3c3c3c"/><rect x="248.7" y="416.1" width="1" height="1" fill="#3c3c3c"/><rect x="267.5" y="416.1" width="1" height="1" fill="#3c3c3c"/><rect x="286.3" y="416.1" width="1" height="1" fill="#3c3c3c"/><rect x="305.1" y="416.1" width="1" height="1" fill="#3c3c3c"/><rect x="323.9" y="416.1" width="1" height="1" fill="#3c3c3c"/><rect x="342.7" y="416.1" width="1" height="1" fill="#3c3c3c"/><rect x="361.5" y="416.1" width="1" height="1" fill="#3c3c3c"/><rect x="380.3" y="416.1" width="1" height="1" fill="#3c3c3c"/><rect x="399.1" y="416.1" width="1" height="1" fill="#3c3c3c"/><rect x="417.9" y="416.1" width="1" height="1" fill="#3c3c3c"/><rect x="436.7" y="416.1" width="1" height="1" fill="#3c3c3c"/><rect x="455.5" y="416.1" width="1" height="1" fill="#3c3c3c"/><rect x="474.3" y="416.1" width="1" height="1" fill="#3c3c3c"/><rect x="493.1" y="416.1" width="1" height="1" fill="#3c3c3c"/><rect x="511.9" y="416.1" width="1" height="1" fill="#3c3c3c"/><rect x="530.7" y="416.1" width="1" height="1" fill="#3c3c3c"/><rect x="549.5" y="416.1" width="1" height="1" fill="#3c3c3c"/><rect x="568.3" y="416.1" width="1" height="1" fill="#3c3c3c"/><rect x="587.1" y="416.1" width="1" height="1" fill="#3c3c3c"/><rect x="605.9" y="416.1" width="1" height="1" fill="#3c3c3c"/><rect x="624.7" y="416.1" width="1" height="1" fill="#3c3c3c"/><rect x="643.5" y="416.1" width="1" height="1" fill="#3c3c3c"/><rect x="662.3" y="416.1" width="1" height="1" fill="#3c3c3c"/><rect x="681.1" y="416.1" width="1" height="1" fill="#3c3c3c"/><rect x="699.9" y="416.1" width="1" height="1" fill="#3c3c3c"/><rect x="718.7" y="416.1" width="1" height="1" fill="#3c3c3c"/><rect x="737.5" y="416.1" width="1" height="1" fill="#3c3c3c"/><rect x="756.3" y="416.1" width="1" height="1" fill="#3c3c3c"/><rect x="775.1" y="416.1" width="1" height="1" fill="#3c3c3c"/><rect x="793.9" y="416.1" width="1" height="1" fill="#3c3c3c"/><rect x="812.7" y="416.1" width="1" height="1" fill="#3c3c3c"/><rect x="831.5" y="416.1" width="1" height="1" fill="#3c3c3c"/><rect x="850.3" y="416.1" width="1" height="1" fill="#3c3c3c"/><rect x="869.1" y="416.1" width="1" height="1" fill="#3c3c3c"/><rect x="887.9" y="416.1" width="1" height="1" fill="#3c3c3c"/><rect x="906.7" y="416.1" width="1" height="1" fill="#3c3c3c"/><rect x="925.5" y="416.1" width="1" height="1" fill="#3c3c3c"/><rect x="944.3" y="416.1" width="1" height="1" fill="#3c3c3c"/><rect x="963.1" y="416.1" width="1" height="1" fill="#3c3c3c"/><rect x="41.9" y="454.9" width="1" height="1" fill="#3c3c3c"/><rect x="60.7" y="454.9" width="1" height="1" fill="#3c3c3c"/><rect x="79.5" y="454.9" width="1" height="1" fill="#3c3c3c"/><rect x="98.3" y="454.9" width="1" height="1" fill="#3c3c3c"/><rect x="117.1" y="454.9" width="1" height="1" fill="#3c3c3c"/><rect x="135.9" y="454.9" width="1" height="1" fill="#3c3c3c"/><rect x="154.7" y="454.9" width="1" height="1" fill="#3c3c3c"/><rect x="173.5" y="454.9" width="1" height="1" fill="#3c3c3c"/><rect x="192.3" y="454.9" width="1" height="1" fill="#3c3c3c"/><rect x="211.1" y="454.9" width="1" height="1" fill="#3c3c3c"/><rect x="229.9" y="454.9" width="1" height="1" fill="#3c3c3c"/><rect x="248.7" y="454.9" width="1" height="1" fill="#3c3c3c"/><rect x="267.5" y="454.9" width="1" height="1" fill="#3c3c3c"/><rect x="286.3" y="454.9" width="1" height="1" fill="#3c3c3c"/><rect x="305.1" y="454.9" width="1" height="1" fill="#3c3c3c"/><rect x="323.9" y="454.9" width="1" height="1" fill="#3c3c3c"/><rect x="342.7" y="454.9" width="1" height="1" fill="#3c3c3c"/><rect x="361.5" y="454.9" width="1" height="1" fill="#3c3c3c"/><rect x="380.3" y="454.9" width="1" height="1" fill="#3c3c3c"/><rect x="399.1" y="454.9" width="1" height="1" fill="#3c3c3c"/><rect x="417.9" y="454.9" width="1" height="1" fill="#3c3c3c"/><rect x="436.7" y="454.9" width="1" height="1" fill="#3c3c3c"/><rect x="455.5" y="454.9" width="1" height="1" fill="#3c3c3c"/><rect x="474.3" y="454.9" width="1" height="1" fill="#3c3c3c"/><rect x="493.1" y="454.9" width="1" height="1" fill="#3c3c3c"/><rect x="511.9" y="454.9" width="1" height="1" fill="#3c3c3c"/><rect x="530.7" y="454.9" width="1" height="1" fill="#3c3c3c"/><rect x="549.5" y="454.9" width="1" height="1" fill="#3c3c3c"/><rect x="568.3" y="454.9" width="1" height="1" fill="#3c3c3c"/><rect x="587.1" y="454.9" width="1" height="1" fill="#3c3c3c"/><rect x="605.9" y="454.9" width="1" height="1" fill="#3c3c3c"/><rect x="624.7" y="454.9" width="1" height="1" fill="#3c3c3c"/><rect x="643.5" y="454.9" width="1" height="1" fill="#3c3c3c"/><rect x="662.3" y="454.9" width="1" height="1" fill="#3c3c3c"/><rect x="681.1" y="454.9" width="1" height="1" fill="#3c3c3c"/><rect x="699.9" y="454.9" width="1" height="1" fill="#3c3c3c"/><rect x="718.7" y="454.9" width="1" height="1" fill="#3c3c3c"/><rect x="737.5" y="454.9" width="1" height="1" fill="#3c3c3c"/><rect x="756.3" y="454.9" width="1" height="1" fill="#3c3c3c"/><rect x="775.1" y="454.9" width="1" height="1" fill="#3c3c3c"/><rect x="793.9" y="454.9" width="1" height="1" fill="#3c3c3c"/><rect x="812.7" y="454.9" width="1" height="1" fill="#3c3c3c"/><rect x="831.5" y="454.9" width="1" height="1" fill="#3c3c3c"/><rect x="850.3" y="454.9" width="1" height="1" fill="#3c3c3c"/><rect x="869.1" y="454.9" width="1" height="1" fill="#3c3c3c"/><rect x="887.9" y="454.9" width="1" height="1" fill="#3c3c3c"/><rect x="906.7" y="454.9" width="1" height="1" fill="#3c3c3c"/><rect x="925.5" y="454.9" width="1" height="1" fill="#3c3c3c"/><rect x="944.3" y="454.9" width="1" height="1" fill="#3c3c3c"/><rect x="963.1" y="454.9" width="1" height="1" fill="#3c3c3c"/><rect x="41.9" y="493.7" width="1" height="1" fill="#3c3c3c"/><rect x="60.7" y="493.7" width="1" height="1" fill="#3c3c3c"/><rect x="79.5" y="493.7" width="1" height="1" fill="#3c3c3c"/><rect x="98.3" y="493.7" width="1" height="1" fill="#3c3c3c"/><rect x="117.1" y="493.7" width="1" height="1" fill="#3c3c3c"/><rect x="135.9" y="493.7" width="1" height="1" fill="#3c3c3c"/><rect x="154.7" y="493.7" width="1" height="1" fill="#3c3c3c"/><rect x="173.5" y="493.7" width="1" height="1" fill="#3c3c3c"/><rect x="192.3" y="493.7" width="1" height="1" fill="#3c3c3c"/><rect x="211.1" y="493.7" width="1" height="1" fill="#3c3c3c"/><rect x="229.9" y="493.7" width="1" height="1" fill="#3c3c3c"/><rect x="248.7" y="493.7" width="1" height="1" fill="#3c3c3c"/><rect x="267.5" y="493.7" width="1" height="1" fill="#3c3c3c"/><rect x="286.3" y="493.7" width="1" height="1" fill="#3c3c3c"/><rect x="305.1" y="493.7" width="1" height="1" fill="#3c3c3c"/><rect x="323.9" y="493.7" width="1" height="1" fill="#3c3c3c"/><rect x="342.7" y="493.7" width="1" height="1" fill="#3c3c3c"/><rect x="361.5" y="493.7" width="1" height="1" fill="#3c3c3c"/><rect x="380.3" y="493.7" width="1" height="1" fill="#3c3c3c"/><rect x="399.1" y="493.7" width="1" height="1" fill="#3c3c3c"/><rect x="417.9" y="493.7" width="1" height="1" fill="#3c3c3c"/><rect x="436.7" y="493.7" width="1" height="1" fill="#3c3c3c"/><rect x="455.5" y="493.7" width="1" height="1" fill="#3c3c3c"/><rect x="474.3" y="493.7" width="1" height="1" fill="#3c3c3c"/><rect x="493.1" y="493.7" width="1" height="1" fill="#3c3c3c"/><rect x="511.9" y="493.7" width="1" height="1" fill="#3c3c3c"/><rect x="530.7" y="493.7" width="1" height="1" fill="#3c3c3c"/><rect x="549.5" y="493.7" width="1" height="1" fill="#3c3c3c"/><rect x="568.3" y="493.7" width="1" height="1" fill="#3c3c3c"/><rect x="587.1" y="493.7" width="1" height="1" fill="#3c3c3c"/><rect x="605.9" y="493.7" width="1" height="1" fill="#3c3c3c"/><rect x="624.7" y="493.7" width="1" height="1" fill="#3c3c3c"/><rect x="643.5" y="493.7" width="1" height="1" fill="#3c3c3c"/><rect x="662.3" y="493.7" width="1" height="1" fill="#3c3c3c"/><rect x="681.1" y="493.7" width="1" height="1" fill="#3c3c3c"/><rect x="699.9" y="493.7" width="1" height="1" fill="#3c3c3c"/><rect x="718.7" y="493.7" width="1" height="1" fill="#3c3c3c"/><rect x="737.5" y="493.7" width="1" height="1" fill="#3c3c3c"/><rect x="756.3" y="493.7" width="1" height="1" fill="#3c3c3c"/><rect x="775.1" y="493.7" width="1" height="1" fill="#3c3c3c"/><rect x="793.9" y="493.7" width="1" height="1" fill="#3c3c3c"/><rect x="812.7" y="493.7" width="1" height="1" fill="#3c3c3c"/><rect x="831.5" y="493.7" width="1" height="1" fill="#3c3c3c"/><rect x="850.3" y="493.7" width="1" height="1" fill="#3c3c3c"/><rect x="869.1" y="493.7" width="1" height="1" fill="#3c3c3c"/><rect x="887.9" y="493.7" width="1" height="1" fill="#3c3c3c"/><rect x="906.7" y="493.7" width="1" height="1" fill="#3c3c3c"/><rect x="925.5" y="493.7" width="1" height="1" fill="#3c3c3c"/><rect x="944.3" y="493.7" width="1" height="1" fill="#3c3c3c"/><rect x="963.1" y="493.7" width="1" height="1" fill="#3c3c3c"/><line x1="60.5" y1="145" x2="60.5" y2="533" stroke="#3c3c3c" stroke-width="1" stroke-dasharray="1 6.76"/><line x1="154.5" y1="145" x2="154.5" y2="533" stroke="#3c3c3c" stroke-width="1" stroke-dasharray="1 6.76"/><line x1="248.5" y1="145" x2="248.5" y2="533" stroke="#3c3c3c" stroke-width="1" stroke-dasharray="1 6.76"/><line x1="342.5" y1="145" x2="342.5" y2="533" stroke="#3c3c3c" stroke-width="1" stroke-dasharray="1 6.76"/><line x1="436.5" y1="145" x2="436.5" y2="533" stroke="#3c3c3c" stroke-width="1" stroke-dasharray="1 6.76"/><line x1="530.5" y1="145" x2="530.5" y2="533" stroke="#3c3c3c" stroke-width="1" stroke-dasharray="1 6.76"/><line x1="624.5" y1="145" x2="624.5" y2="533" stroke="#3c3c3c" stroke-width="1" stroke-dasharray="1 6.76"/><line x1="718.5" y1="145" x2="718.5" y2="533" stroke="#3c3c3c" stroke-width="1" stroke-dasharray="1 6.76"/><line x1="812.5" y1="145" x2="812.5" y2="533" stroke="#3c3c3c" stroke-width="1" stroke-dasharray="1 6.76"/><line x1="906.5" y1="145" x2="906.5" y2="533" stroke="#3c3c3c" stroke-width="1" stroke-dasharray="1 6.76"/><line x1="385.7" y1="145" x2="385.7" y2="533" stroke="#b8a818" stroke-width="0.9" stroke-dasharray="3 3"/><line x1="576.6" y1="145" x2="576.6" y2="533" stroke="#b8a818" stroke-width="0.9" stroke-dasharray="3 3"/><line x1="26" y1="494.7" x2="946" y2="494.7" stroke="#8c8c8c" stroke-width="1.1" stroke-dasharray="4 2.6"/><line x1="26" y1="377.6" x2="966" y2="377.6" stroke="#1e1e1e" stroke-width="1" stroke-dasharray="1.5 2.5"/><polyline points="26.0,414.9 28.0,413.9 30.0,415.1 32.0,415.0 34.0,414.6 36.0,414.1 38.0,414.8 40.0,414.2 42.0,414.5 44.0,414.1 46.0,415.3 48.0,414.7 50.0,414.4 52.0,414.1 54.0,415.0 56.0,415.1 58.0,415.1 60.0,414.1 62.0,414.5 64.0,414.4 66.0,415.0 68.0,414.2 70.0,414.8 72.0,415.3 74.0,415.0 76.0,414.0 78.0,414.1 80.0,414.1 82.0,414.9 84.0,414.8 86.0,414.7 88.0,414.6 90.0,414.6 92.0,414.8 94.0,414.9 96.0,415.3 98.0,415.0 100.0,415.1 102.0,415.3 104.0,415.2 106.0,415.0 108.0,414.0 110.0,415.0 112.0,415.2 114.0,414.6 116.0,415.2 118.0,414.3 120.0,415.3 122.0,414.6 124.0,415.0 126.0,414.4 128.0,414.4 130.0,414.5 132.0,414.5 134.0,414.2 136.0,414.7 138.0,415.4 140.0,415.0 142.0,415.4 144.0,415.1 146.0,415.2 148.0,415.4 150.0,415.1 152.0,414.4 154.0,414.4 156.0,414.6 158.0,414.1 160.0,414.4 162.0,415.3 164.0,415.4 166.0,414.5 168.0,415.2 170.0,415.2 172.0,415.3 174.0,415.2 176.0,414.8 178.0,414.2 180.0,415.3 182.0,414.5 184.0,415.0 186.0,414.6 188.0,414.9 190.0,415.5 192.0,414.3 194.0,414.9 196.0,415.0 198.0,414.9 200.0,415.4 202.0,414.7 204.0,415.4 206.0,415.1 208.0,415.5 210.0,414.3 212.0,414.4 214.0,414.5 216.0,415.4 218.0,414.2 220.0,414.5 222.0,415.2 224.0,415.5 226.0,414.4 228.0,414.8 230.0,415.1 232.0,415.1 234.0,415.2 236.0,415.2 238.0,414.5 240.0,414.5 242.0,414.2 244.0,415.1 246.0,414.5 248.0,414.5 250.0,415.5 252.0,415.1 254.0,415.0 256.0,415.1 258.0,415.0 260.0,415.2 262.0,414.6 264.0,414.3 266.0,414.3 268.0,414.2 270.0,414.7 272.0,414.4 274.0,414.4 276.0,414.9 278.0,415.6 280.0,415.2 282.0,414.6 284.0,415.3 286.0,414.5 288.0,414.4 290.0,414.7 292.0,414.8 294.0,415.2 296.0,414.9 298.0,415.3 300.0,414.4 302.0,415.6 304.0,414.7 306.0,415.4 308.0,414.3 310.0,415.4 312.0,414.6 314.0,415.5 316.0,415.4 318.0,415.2 320.0,414.7 322.0,414.3 324.0,414.5 326.0,415.5 328.0,414.5 330.0,415.2 332.0,415.1 334.0,415.2 336.0,414.5 338.0,414.5 340.0,414.4 342.0,415.7 344.0,414.8 346.0,415.2 348.0,415.1 350.0,414.6 352.0,414.4 354.0,414.3 356.0,415.5 358.0,414.5 360.0,415.7 362.0,414.8 364.0,415.3 366.0,414.5 368.0,415.4 370.0,414.7 372.0,414.9 374.0,415.1 376.0,414.5 378.0,414.7 380.0,415.5 382.0,414.8 384.0,414.9 386.0,415.4 388.0,414.7 390.0,414.6 392.0,414.7 394.0,414.9 396.0,414.9 398.0,415.3 400.0,415.0 402.0,415.6 404.0,414.4 406.0,415.3 408.0,415.6 410.0,414.7 412.0,414.4 414.0,415.0 416.0,414.6 418.0,415.0 420.0,415.4 422.0,414.5 424.0,414.6 426.0,415.1 428.0,414.7 430.0,414.7 432.0,415.0 434.0,414.6 436.0,414.5 438.0,414.9 440.0,415.1 442.0,415.7 444.0,415.2 446.0,414.5 448.0,414.7 450.0,415.5 452.0,415.2 454.0,415.7 456.0,415.8 458.0,415.6 460.0,414.6 462.0,415.8 464.0,415.2 466.0,414.8 468.0,414.7 470.0,415.7 472.0,414.8 474.0,414.6 476.0,414.8 478.0,415.8 480.0,415.1 482.0,415.5 484.0,414.6 486.0,415.1 488.0,414.9 490.0,414.8 492.0,415.4 494.0,415.0 496.0,414.7 498.0,415.9 500.0,415.2 502.0,414.8 504.0,414.5 506.0,415.4 508.0,415.2 510.0,414.5 512.0,415.2 514.0,415.6 516.0,415.3 518.0,414.9 520.0,415.2 522.0,415.4 524.0,415.4 526.0,414.7 528.0,415.7 530.0,415.9 532.0,415.6 534.0,415.7 536.0,415.1 538.0,415.8 540.0,414.8 542.0,414.9 544.0,415.4 546.0,415.8 548.0,414.7 550.0,414.9 552.0,414.6 554.0,415.2 556.0,414.8 558.0,414.8 560.0,415.6 562.0,415.4 564.0,415.9 566.0,415.1 568.0,415.5 570.0,414.6 572.0,415.9 574.0,414.9 576.0,415.3 578.0,415.3 580.0,415.9 582.0,415.3 584.0,416.0 586.0,415.5 588.0,414.9 590.0,415.8 592.0,414.9 594.0,416.0 596.0,415.3 598.0,414.9 600.0,416.0 602.0,415.1 604.0,415.2 606.0,415.1 608.0,415.6 610.0,414.7 612.0,415.2 614.0,414.9 616.0,415.8 618.0,414.7 620.0,415.5 622.0,415.0 624.0,415.3 626.0,415.4 628.0,415.7 630.0,414.9 632.0,415.0 634.0,414.8 636.0,416.0 638.0,414.9 640.0,414.9 642.0,415.4 644.0,415.5 646.0,415.9 648.0,414.8 650.0,415.0 652.0,414.9 654.0,415.5 656.0,415.3 658.0,415.3 660.0,415.9 662.0,415.6 664.0,415.9 666.0,416.1 668.0,415.1 670.0,416.0 672.0,415.3 674.0,414.8 676.0,416.0 678.0,414.9 680.0,414.8 682.0,415.1 684.0,415.1 686.0,416.1 688.0,416.0 690.0,415.3 692.0,415.5 694.0,415.9 696.0,415.9 698.0,415.7 700.0,415.5 702.0,414.9 704.0,415.1 706.0,415.7 708.0,415.6 710.0,415.9 712.0,416.0 714.0,416.1 716.0,415.0 718.0,414.9 720.0,416.0 722.0,415.6 724.0,415.0 726.0,415.8 728.0,415.2 730.0,415.1 732.0,415.3 734.0,415.5 736.0,415.8 738.0,414.9 740.0,415.8 742.0,415.7 744.0,415.5 746.0,415.8 748.0,415.9 750.0,414.8 752.0,415.5 754.0,415.8 756.0,415.8 758.0,415.7 760.0,415.1 762.0,416.2 764.0,415.9 766.0,415.2 768.0,415.4 770.0,416.2 772.0,415.1 774.0,415.4 776.0,416.2 778.0,416.1 780.0,415.2 782.0,415.9 784.0,415.4 786.0,415.8 788.0,415.9 790.0,415.1 792.0,415.2 794.0,415.2 796.0,415.3 798.0,414.9 800.0,415.1 802.0,415.5 804.0,415.5 806.0,415.0 808.0,415.7 810.0,416.2 812.0,415.7 814.0,415.4 816.0,415.9 818.0,415.5 820.0,415.2 822.0,415.6 824.0,414.9 826.0,415.9 828.0,415.1 830.0,415.4 832.0,416.3 834.0,416.0 836.0,416.1 838.0,415.8 840.0,415.8 842.0,415.9 844.0,416.3 846.0,415.2 848.0,416.0 850.0,415.4 852.0,415.3 854.0,416.1 856.0,415.8 858.0,416.2 860.0,416.2 862.0,415.8 864.0,415.2 866.0,415.0 868.0,415.7 870.0,416.0 872.0,415.4 874.0,415.1 876.0,415.0 878.0,415.2 880.0,416.0 882.0,415.0 884.0,415.3 886.0,415.4 888.0,416.0 890.0,416.4 892.0,415.0 894.0,415.2 896.0,416.3 898.0,416.4 900.0,415.2 902.0,415.5 904.0,415.8 906.0,415.5 908.0,415.6 910.0,415.7 912.0,415.4 914.0,415.1 916.0,415.2 918.0,415.3 920.0,415.2 922.0,415.9 924.0,416.0 926.0,415.4 928.0,416.2 930.0,416.1 932.0,415.5 934.0,415.7 936.0,415.3 938.0,416.4 940.0,415.9 942.0,415.1 944.0,415.3 946.0,416.0 948.0,415.6 950.0,416.1 952.0,415.4 954.0,416.2 956.0,416.2 958.0,415.2 960.0,415.9 962.0,415.4 964.0,416.1 966.0,416.2" fill="none" stroke="#8cb030" stroke-width="1.1" stroke-linejoin="round" opacity="1.0"/><polyline points="26.0,459.5 26.5,457.0 27.0,462.4 27.5,461.3 28.0,457.6 28.5,458.4 29.0,460.3 29.5,462.4 30.0,462.1 30.5,461.5 31.0,459.1 31.5,461.1 32.0,455.9 32.5,460.6 33.0,458.9 33.5,458.3 34.0,458.6 34.5,457.0 35.0,457.9 35.5,462.8 36.0,457.6 36.5,455.3 37.0,460.5 37.5,457.9 38.0,457.4 38.5,462.8 39.0,458.8 39.5,460.6 40.0,459.7 40.5,463.7 41.0,461.0 41.5,455.0 42.0,463.7 42.5,457.7 43.0,458.0 43.5,461.2 44.0,458.8 44.5,458.0 45.0,458.0 45.5,458.2 46.0,462.1 46.5,459.9 47.0,462.7 47.5,464.2 48.0,461.2 48.5,456.7 49.0,459.4 49.5,460.3 50.0,455.5 50.5,458.8 51.0,456.0 51.5,462.3 52.0,454.2 52.5,458.0 53.0,459.8 53.5,459.6 54.0,456.5 54.5,461.0 55.0,458.8 55.5,463.1 56.0,459.3 56.5,461.3 57.0,454.5 57.5,459.5 58.0,459.3 58.5,456.2 59.1,452.8 59.6,461.0 60.1,462.5 60.6,457.3 61.1,461.3 61.6,460.8 62.1,457.4 62.6,457.2 63.1,465.9 63.6,460.7 64.1,460.2 64.6,458.1 65.1,455.1 65.6,459.7 66.1,458.6 66.6,459.9 67.1,458.9 67.6,454.1 68.1,457.8 68.6,459.4 69.1,457.9 69.6,459.7 70.1,459.8 70.6,458.7 71.1,457.8 71.6,463.6 72.1,459.8 72.6,459.9 73.1,460.4 73.6,459.6 74.1,453.7 74.6,457.9 75.1,459.8 75.6,460.4 76.1,459.2 76.6,456.0 77.1,458.2 77.6,460.2 78.1,459.3 78.6,465.9 79.1,460.5 79.6,460.4 80.1,458.6 80.6,453.0 81.1,461.5 81.6,457.1 82.1,462.6 82.6,457.9 83.1,458.2 83.6,462.0 84.1,458.0 84.6,454.5 85.2,460.2 85.7,460.3 86.2,460.2 86.7,458.6 87.2,459.9 87.7,456.6 88.2,459.0 88.7,461.1 89.2,452.0 89.7,460.6 90.2,462.2 90.7,463.4 91.2,458.2 91.7,460.5 92.2,458.9 92.7,456.4 93.2,460.1 93.7,461.7 94.2,461.4 94.7,454.0 95.2,458.6 95.7,458.8 96.2,459.3 96.7,455.2 97.2,464.6 97.7,454.9 98.2,456.5 98.7,463.8 99.2,459.9 99.7,457.0 100.2,457.2 100.7,461.0 101.2,457.4 101.7,461.2 102.2,460.6 102.7,460.3 103.2,461.4 103.7,457.5 104.2,455.2 104.7,454.6 105.3,459.1 105.8,456.9 106.3,463.5 106.8,456.6 107.3,463.5 107.8,458.8 108.3,459.2 108.8,453.9 109.3,459.0 109.8,463.1 110.3,455.1 110.8,462.7 111.3,461.4 111.8,461.6 112.3,456.4 112.8,463.5 113.3,456.0 113.8,463.5 114.3,462.4 114.8,454.4 115.3,463.3 115.8,464.1 116.3,458.9 116.8,454.9 117.3,458.6 117.8,458.4 118.3,461.5 118.8,456.5 119.3,456.6 119.8,459.8 120.3,460.1 120.8,454.3 121.3,460.4 121.8,457.7 122.3,458.0 122.9,460.9 123.4,461.1 123.9,460.6 124.4,464.1 124.9,459.9 125.4,459.3 125.9,460.2 126.4,463.3 126.9,461.0 127.4,460.1 127.9,462.1 128.4,455.0 128.9,462.1 129.4,461.5 129.9,458.5 130.4,455.1 130.9,454.8 131.4,453.3 131.9,460.3 132.4,458.9 132.9,456.8 133.4,461.7 133.9,456.6 134.4,462.1 134.9,461.5 135.4,460.8 135.9,456.2 136.4,456.3 136.9,459.5 137.4,462.2 137.9,456.4 138.4,459.9 138.9,461.8 139.5,454.6 140.0,464.6 140.5,458.7 141.0,457.9 141.5,459.9 142.0,458.8 142.5,456.7 143.0,457.6 143.5,458.6 144.0,456.3 144.5,462.1 145.0,461.1 145.5,461.4 146.0,454.8 146.5,458.0 147.0,460.8 147.5,459.1 148.0,454.2 148.5,460.4 149.0,465.0 149.5,462.2 150.0,459.1 150.5,456.0 151.0,462.3 151.5,461.0 152.0,458.5 152.5,458.5 153.0,461.7 153.5,459.1 154.0,457.5 154.5,456.1 155.0,458.3 155.5,458.5 156.1,457.9 156.6,466.3 157.1,455.9 157.6,454.7 158.1,457.4 158.6,461.8 159.1,464.9 159.6,454.8 160.1,457.8 160.6,461.1 161.1,457.4 161.6,461.0 162.1,458.5 162.6,462.6 163.1,459.8 163.6,464.2 164.1,455.8 164.6,462.6 165.1,458.4 165.6,462.6 166.1,457.9 166.6,461.8 167.1,462.5 167.6,460.3 168.1,456.6 168.6,457.6 169.1,458.1 169.6,458.9 170.1,462.3 170.6,456.2 171.1,459.1 171.6,459.6 172.1,459.6 172.6,457.0 173.2,463.1 173.7,459.4 174.2,457.3 174.7,459.3 175.2,462.8 175.7,461.1 176.2,462.8 176.7,461.0 177.2,458.3 177.7,455.6 178.2,457.1 178.7,459.4 179.2,455.0 179.7,458.9 180.2,457.3 180.7,462.8 181.2,454.0 181.7,465.8 182.2,461.6 182.7,458.3 183.2,459.9 183.7,464.0 184.2,461.6 184.7,458.8 185.2,458.1 185.7,455.6 186.2,460.4 186.7,462.0 187.2,459.4 187.7,459.7 188.2,457.4 188.7,460.0 189.2,461.0 189.7,456.2 190.2,461.5 190.7,458.9 191.2,461.0 191.8,459.7 192.3,460.6 192.8,460.3 193.3,461.8 193.8,457.7 194.3,459.4 194.8,456.5 195.3,459.9 195.8,462.7 196.3,458.9 196.8,462.5 197.3,458.4 197.8,460.7 198.3,463.0 198.8,460.5 199.3,460.8 199.8,463.4 200.3,461.4 200.8,462.3 201.3,458.9 201.8,457.7 202.3,461.8 202.8,456.9 203.3,463.0 203.8,458.3 204.3,460.5 204.8,461.9 205.3,456.8 205.8,465.0 206.3,459.7 206.8,459.2 207.3,456.9 207.8,455.2 208.3,454.9 208.8,457.1 209.3,461.3 209.8,458.5 210.3,462.9 210.8,457.2 211.3,455.6 211.8,461.0 212.3,459.0 212.8,455.9 213.3,463.6 213.9,460.5 214.4,455.9 214.9,458.4 215.4,457.2 215.9,462.9 216.4,458.3 216.9,458.1 217.4,460.6 217.9,464.0 218.4,463.5 218.9,459.7 219.4,458.9 219.9,458.1 220.4,462.4 220.9,456.9 221.4,459.6 221.9,461.6 222.4,458.0 222.9,453.2 223.4,458.3 223.9,457.5 224.4,457.1 224.9,458.2 225.4,462.0 225.9,455.7 226.4,456.4 226.9,459.4 227.4,462.2 227.9,457.5 228.4,461.3 228.9,462.5 229.4,457.7 229.9,459.1 230.4,462.0 230.9,460.3 231.4,458.1 231.9,459.3 232.4,459.0 232.9,459.9 233.4,460.5 233.9,460.1 234.4,458.1 234.9,459.7 235.4,460.5 235.9,459.1 236.4,464.1 236.9,458.4 237.4,453.5 237.9,462.9 238.4,458.4 238.9,460.6 239.4,459.0 239.9,462.2 240.4,458.2 240.9,461.2 241.4,463.9 241.9,461.3 242.4,457.4 242.9,464.3 243.4,462.7 243.9,459.6 244.4,455.8 244.9,460.3 245.4,459.4 245.9,460.9 246.4,460.0 246.9,463.9 247.4,460.1 247.9,458.6 248.4,458.5 248.9,460.4 249.4,461.0 249.9,456.3 250.4,456.9 250.9,462.1 251.4,459.0 251.9,462.5 252.4,459.1 252.9,457.8 253.4,460.8 253.9,460.3 254.4,466.5 254.9,463.9 255.4,459.3 255.9,460.3 256.4,461.1 256.9,461.0 257.4,461.6 257.9,459.4 258.4,458.5 258.9,455.3 259.4,458.7 259.9,462.4 260.5,460.1 261.0,460.4 261.5,455.9 261.9,453.9 262.4,461.2 262.9,457.4 263.4,457.9 263.9,454.1 264.4,463.5 264.9,463.4 265.4,454.6 265.9,458.0 266.4,458.8 266.9,460.7 267.4,461.9 267.9,459.3 268.4,459.2 268.9,461.0 269.4,454.7 269.9,459.1 270.4,459.4 270.9,460.3 271.4,456.6 271.9,457.6 272.4,456.2 272.9,459.0 273.4,456.5 273.9,466.1 274.4,457.6 274.9,462.8 275.4,457.7 275.9,458.2 276.4,461.8 276.9,458.6 277.4,465.4 277.9,460.6 278.4,454.6 278.9,463.0 279.4,452.3 279.9,458.4 280.4,457.0 280.9,459.4 281.4,457.1 281.9,458.0 282.4,458.2 282.9,461.3 283.4,456.7 283.9,458.3 284.4,465.5 284.9,464.9 285.4,462.5 285.9,459.3 286.4,457.7 286.9,459.5 287.4,455.6 287.9,462.3 288.4,457.2 288.9,453.4 289.4,462.1 289.9,463.3 290.4,461.7 290.9,461.0 291.4,460.5 291.9,463.5 292.4,462.9 292.9,455.0 293.4,460.8 293.9,459.0 294.4,463.7 294.9,458.4 295.4,458.1 295.9,454.6 296.4,459.3 296.9,460.0 297.4,463.1 297.9,458.6 298.4,461.7 298.9,465.0 299.4,455.8 299.9,462.0 300.4,459.0 300.9,454.5 301.4,456.8 301.9,459.2 302.3,455.9 302.8,460.9 303.3,456.9 303.8,462.0 304.3,458.0 304.8,462.4 305.3,462.1 305.8,461.6 306.3,462.3 306.8,466.0 307.3,461.7 307.8,454.5 308.3,457.8 308.8,461.6 309.3,461.8 309.8,457.4 310.3,460.4 310.8,459.2 311.3,458.2 311.8,457.7 312.3,459.0 312.8,462.4 313.3,454.1 313.8,461.9 314.3,459.5 314.8,454.4 315.3,459.7 315.8,458.5 316.3,456.2 316.8,460.4 317.3,458.0 317.8,462.1 318.2,462.6 318.7,460.1 319.2,460.0 319.7,456.2 320.2,458.7 320.7,462.0 321.2,464.2 321.7,453.8 322.2,459.5 322.7,458.7 323.2,464.8 323.7,459.7 324.2,464.6 324.7,453.0 325.2,453.8 325.7,459.1 326.2,454.7 326.7,453.2 327.2,457.4 327.7,457.4 328.2,459.0 328.7,462.9 329.2,455.9 329.7,456.6 330.1,454.3 330.6,458.8 331.1,461.6 331.6,461.6 332.1,452.0 332.6,459.9 333.1,457.7 333.6,457.0 334.1,455.1 334.6,457.0 335.1,459.3 335.6,460.4 336.1,460.7 336.6,456.1 337.1,458.4 337.6,455.9 338.1,460.9 338.6,458.6 339.1,454.5 339.6,461.3 340.0,463.2 340.5,453.4 341.0,463.5 341.5,459.7 342.0,458.0 342.5,451.8 343.0,454.5 343.5,455.5 344.0,460.5 344.5,457.9 345.0,458.7 345.5,458.5 346.0,459.5 346.5,457.2 347.0,461.9 347.5,451.7 348.0,455.4 348.4,457.0 348.9,455.5 349.4,461.7 349.9,456.7 350.4,452.6 350.9,456.4 351.4,456.6 351.9,455.6 352.4,456.0 352.9,456.4 353.4,459.9 353.9,457.4 354.4,458.8 354.9,457.6 355.4,461.3 355.8,458.0 356.3,458.7 356.8,460.9 357.3,461.7 357.8,461.3 358.3,455.6 358.8,454.0 359.3,464.7 359.8,453.8 360.3,455.7 360.8,453.6 361.3,458.5 361.8,457.6 362.3,450.9 362.7,460.8 363.2,456.1 363.7,460.9 364.2,460.4 364.7,457.6 365.2,460.5 365.7,455.3 366.2,457.6 366.7,457.0 367.2,457.9 367.7,459.0 368.2,458.0 368.6,456.2 369.1,459.3 369.6,456.4 370.1,459.7 370.6,455.0 371.1,454.0 371.6,463.7 372.1,453.6 372.6,459.6 373.1,462.0 373.6,459.3 374.1,458.5 374.5,456.9 375.0,457.0 375.5,454.8 376.0,458.6 376.5,459.2 377.0,453.4 377.5,451.1 378.0,463.9 378.4,456.4 378.8,453.6 379.2,453.4 379.6,458.4 380.0,459.5 380.3,454.1 380.6,454.6 380.9,455.5 381.2,453.6 381.5,454.2 381.8,453.9 382.1,453.9 382.3,453.8 382.6,452.0 382.8,450.4 383.0,448.8 383.2,450.1 383.5,448.2 383.7,448.4 383.9,448.2 384.1,447.8 384.3,448.7 384.5,447.3 384.8,446.4 385.0,448.1 385.2,445.4 385.5,447.4 385.7,444.3 385.9,444.5 386.2,442.0 386.4,443.2 386.7,441.3 386.9,444.1 387.2,442.0 387.4,443.3 387.6,441.5 387.9,439.0 388.1,436.7 388.3,439.4 388.6,438.3 388.8,438.0 389.0,438.6 389.3,437.9 389.5,436.9 389.7,437.3 390.0,435.4 390.2,434.6 390.4,434.8 390.7,436.5 390.9,435.4 391.1,433.6 391.3,434.3 391.6,434.1 391.8,431.3 392.0,435.0 392.3,431.4 392.5,429.9 392.7,431.1 392.9,430.8 393.1,431.9 393.4,431.4 393.6,428.6 393.8,427.9 394.0,427.8 394.3,427.3 394.5,426.0 394.7,426.7 394.9,428.2 395.1,427.3 395.4,425.1 395.6,423.3 395.8,425.5 396.0,425.9 396.2,421.7 396.5,424.0 396.7,425.2 396.9,423.9 397.1,422.8 397.3,421.3 397.5,420.1 397.8,420.9 398.0,421.8 398.2,420.6 398.4,420.3 398.6,418.5 398.9,417.9 399.1,419.7 399.3,417.4 399.5,418.1 399.7,415.7 399.9,414.5 400.2,415.7 400.4,415.4 400.6,411.0 400.8,412.9 401.0,414.1 401.2,412.8 401.4,411.0 401.7,412.2 401.9,412.5 402.1,413.2 402.3,408.3 402.5,410.4 402.7,409.1 402.9,412.6 403.2,409.6 403.4,407.1 403.6,409.1 403.8,408.9 404.0,408.7 404.2,408.3 404.4,405.7 404.6,404.1 404.8,405.8 405.1,404.9 405.3,403.9 405.5,401.6 405.7,404.5 405.9,403.9 406.1,404.4 406.3,402.8 406.5,401.5 406.7,400.0 407.0,400.4 407.2,399.1 407.4,399.6 407.6,398.4 407.8,400.5 408.0,398.3 408.2,398.7 408.4,397.6 408.6,396.7 408.8,393.9 409.0,395.7 409.2,395.2 409.5,396.9 409.7,393.3 409.9,395.5 410.1,394.9 410.3,393.5 410.5,392.9 410.7,393.9 410.9,392.5 411.1,395.0 411.3,387.9 411.5,389.5 411.7,393.1 411.9,390.5 412.1,386.7 412.3,385.8 412.5,386.5 412.7,385.9 413.0,384.9 413.2,386.3 413.4,386.3 413.6,384.6 413.8,385.5 414.0,384.6 414.2,386.0 414.4,382.5 414.6,383.8 414.8,383.6 415.0,384.1 415.2,380.9 415.4,382.0 415.6,379.8 415.8,382.1 416.0,381.4 416.2,381.8 416.4,379.4 416.6,381.7 416.8,378.1 417.0,376.0 417.2,376.9 417.4,377.3 417.6,378.5 417.8,375.8 418.0,375.3 418.2,376.4 418.4,373.4 418.6,376.0 418.8,374.9 419.0,372.3 419.2,373.2 419.4,371.9 419.6,371.1 419.8,372.3 420.0,371.0 420.2,372.2 420.4,370.6 420.6,367.8 420.8,369.9 421.0,370.1 421.1,369.1 421.3,366.2 421.5,366.9 421.7,365.5 421.9,366.4 422.1,365.3 422.3,367.1 422.5,365.9 422.7,368.5 422.9,365.2 423.1,362.0 423.3,363.2 423.4,365.6 423.6,362.1 423.8,362.3 424.0,363.0 424.2,363.2 424.4,362.3 424.6,360.2 424.8,358.2 424.9,358.6 425.1,359.7 425.3,356.2 425.5,358.1 425.7,359.7 425.9,355.4 426.1,357.6 426.2,355.0 426.4,354.6 426.6,355.7 426.8,355.6 427.0,354.1 427.2,354.4 427.3,354.2 427.5,355.2 427.7,351.1 427.9,350.5 428.1,353.8 428.2,352.1 428.4,349.5 428.6,350.9 428.8,351.8 429.0,348.6 429.1,349.1 429.3,349.4 429.5,346.8 429.7,345.7 429.8,347.8 430.0,346.2 430.2,346.1 430.4,344.2 430.6,345.7 430.7,345.7 430.9,344.0 431.1,343.5 431.3,341.7 431.4,341.6 431.6,340.2 431.8,341.6 432.0,341.3 432.1,339.7 432.3,338.4 432.5,339.4 432.7,340.1 432.8,340.6 433.0,335.8 433.2,338.0 433.4,339.1 433.5,335.7 433.7,335.8 433.9,337.1 434.1,335.7 434.2,333.8 434.4,333.0 434.6,333.3 434.7,333.5 434.9,333.3 435.1,333.8 435.3,331.0 435.4,332.3 435.6,331.7 435.8,330.3 436.0,331.2 436.1,329.7 436.3,329.9 436.5,328.0 436.6,327.2 436.8,327.1 437.0,329.8 437.2,327.5 437.3,326.8 437.5,324.9 437.7,325.8 437.9,323.4 438.0,325.0 438.2,324.0 438.4,322.9 438.5,323.8 438.7,320.9 438.9,320.5 439.1,322.7 439.2,319.8 439.4,318.9 439.6,321.9 439.7,320.7 439.9,320.0 440.1,318.9 440.3,316.9 440.4,318.5 440.6,317.4 440.8,316.0 440.9,316.7 441.1,316.7 441.3,315.6 441.5,316.2 441.6,315.4 441.8,312.6 442.0,314.4 442.1,312.7 442.3,314.8 442.5,308.8 442.7,311.4 442.8,312.1 443.0,312.3 443.2,309.0 443.4,310.0 443.5,310.0 443.7,308.2 443.9,309.4 444.0,307.1 444.2,306.6 444.4,308.7 444.6,305.5 444.7,305.7 444.9,308.7 445.1,307.0 445.3,304.2 445.4,304.7 445.6,302.8 445.8,301.9 445.9,302.2 446.1,303.5 446.3,302.6 446.5,300.4 446.6,297.9 446.8,302.2 447.0,299.1 447.2,300.6 447.3,300.1 447.5,300.3 447.7,297.3 447.9,296.3 448.1,296.3 448.2,297.3 448.4,296.6 448.6,294.3 448.8,296.0 448.9,293.6 449.1,294.3 449.3,293.5 449.5,294.1 449.6,296.4 449.8,291.6 450.0,290.1 450.2,289.9 450.4,291.1 450.5,290.9 450.7,290.9 450.9,288.3 451.1,287.5 451.2,288.6 451.4,290.2 451.6,289.0 451.8,288.7 452.0,287.6 452.1,287.8 452.3,285.2 452.5,287.0 452.7,286.0 452.9,285.6 453.0,283.4 453.2,283.0 453.4,282.3 453.6,284.5 453.7,280.2 453.9,281.0 454.1,281.5 454.3,278.9 454.5,280.4 454.6,281.2 454.8,280.1 455.0,277.2 455.2,278.3 455.4,276.5 455.6,273.9 455.7,278.1 455.9,277.3 456.1,274.1 456.3,277.0 456.5,276.2 456.7,277.7 456.8,274.7 457.0,275.8 457.2,272.7 457.4,272.4 457.6,274.9 457.8,272.9 458.0,273.6 458.2,270.5 458.4,270.3 458.6,271.0 458.8,268.4 458.9,270.0 459.1,266.6 459.3,265.3 459.5,267.0 459.7,267.9 459.9,269.5 460.1,266.0 460.3,266.0 460.5,264.9 460.7,265.2 461.0,266.1 461.2,264.7 461.4,264.0 461.6,263.5 461.8,262.2 462.0,263.1 462.2,264.2 462.4,259.6 462.6,263.5 462.8,257.1 463.1,257.4 463.3,260.2 463.5,258.2 463.7,261.5 463.9,258.8 464.1,255.4 464.3,257.1 464.5,257.2 464.8,257.7 465.0,254.8 465.2,253.1 465.4,252.9 465.6,255.6 465.8,255.5 466.0,251.0 466.3,253.5 466.5,251.6 466.7,252.3 466.9,252.7 467.1,250.8 467.3,250.6 467.6,247.6 467.8,249.8 468.0,251.5 468.2,248.1 468.4,249.0 468.7,248.7 468.9,250.9 469.1,245.9 469.3,247.8 469.5,245.8 469.8,245.7 470.0,245.3 470.2,242.5 470.4,245.3 470.6,243.0 470.9,243.8 471.1,244.3 471.3,242.3 471.5,240.1 471.7,240.2 472.0,242.2 472.2,242.5 472.4,242.9 472.6,238.2 472.9,239.7 473.1,239.2 473.3,237.6 473.5,237.8 473.8,236.3 474.0,237.4 474.2,236.2 474.4,236.0 474.7,237.8 474.9,234.0 475.1,235.1 475.4,233.6 475.6,233.6 475.8,233.5 476.0,233.2 476.3,233.0 476.5,231.2 476.7,232.7 477.0,229.8 477.2,229.4 477.4,229.3 477.7,231.7 477.9,231.3 478.1,228.4 478.4,231.4 478.6,228.7 478.8,225.8 479.1,228.0 479.3,225.6 479.5,224.9 479.8,223.0 480.0,225.8 480.2,225.8 480.5,223.3 480.7,225.2 480.9,224.4 481.2,224.2 481.4,223.9 481.6,221.5 481.9,222.6 482.1,222.4 482.4,220.4 482.6,220.3 482.8,218.6 483.1,220.1 483.3,217.9 483.6,219.6 483.8,218.7 484.0,217.9 484.3,218.5 484.5,216.8 484.8,219.1 485.0,216.9 485.3,214.4 485.5,214.8 485.7,215.6 486.0,217.0 486.3,213.4 486.5,215.9 486.8,213.6 487.1,214.7 487.3,211.7 487.6,211.0 487.9,211.1 488.2,211.3 488.5,209.5 488.8,208.7 489.1,211.0 489.4,211.0 489.7,209.1 490.0,208.1 490.3,209.8 490.6,205.5 490.9,208.5 491.2,207.4 491.5,207.6 491.8,206.8 492.1,207.3 492.4,206.3 492.7,205.1 493.0,205.9 493.3,203.0 493.7,204.2 494.0,204.0 494.3,200.9 494.6,203.4 494.9,202.9 495.2,203.1 495.5,201.5 495.8,202.7 496.1,202.0 496.4,201.1 496.7,196.3 497.0,199.5 497.3,199.3 497.6,198.6 497.9,196.6 498.2,198.9 498.4,196.5 498.7,196.4 499.0,196.7 499.3,197.2 499.6,194.6 499.9,193.2 500.1,194.7 500.4,193.9 500.7,190.5 501.0,191.8 501.3,192.3 501.5,189.2 501.8,192.8 502.1,189.0 502.4,191.3 502.7,188.3 503.0,188.8 503.3,188.0 503.6,188.0 503.9,185.5 504.2,186.8 504.5,188.6 504.8,187.8 505.1,189.7 505.4,184.0 505.7,188.3 506.1,186.3 506.4,184.2 506.7,183.9 507.1,185.1 507.5,186.1 507.9,185.4 508.3,188.3 508.7,186.3 509.2,185.8 509.6,185.8 510.0,185.8 510.5,187.7 510.9,188.0 511.3,187.5 511.8,189.6 512.2,188.6 512.6,189.3 513.0,192.0 513.3,192.5 513.7,190.8 514.0,194.2 514.3,191.6 514.6,194.2 514.9,193.2 515.2,192.8 515.5,193.8 515.8,193.7 516.1,194.9 516.4,195.0 516.7,195.3 516.9,194.6 517.2,197.0 517.5,198.1 517.8,195.8 518.0,197.7 518.3,199.4 518.5,199.8 518.8,197.9 519.0,203.0 519.3,198.9 519.5,201.4 519.7,201.4 520.0,204.8 520.2,200.9 520.4,204.1 520.6,203.4 520.8,202.0 521.0,203.7 521.2,203.0 521.4,204.9 521.6,205.4 521.8,202.9 522.0,206.9 522.1,206.9 522.3,208.4 522.5,207.5 522.7,206.8 522.8,209.4 523.0,210.2 523.2,206.4 523.3,211.3 523.5,211.1 523.7,210.1 523.8,209.9 524.0,211.2 524.1,213.7 524.3,213.0 524.4,214.2 524.6,213.0 524.7,212.2 524.9,213.5 525.0,218.0 525.2,216.8 525.3,217.0 525.5,217.3 525.6,217.0 525.8,217.2 525.9,217.5 526.0,219.0 526.2,218.7 526.3,219.5 526.4,220.5 526.6,221.2 526.7,221.4 526.8,221.7 527.0,222.5 527.1,224.0 527.2,224.6 527.4,225.3 527.5,222.9 527.6,224.9 527.7,225.0 527.9,228.0 528.0,228.0 528.1,227.0 528.2,229.5 528.4,229.2 528.5,226.2 528.6,229.3 528.7,229.2 528.8,228.7 529.0,231.7 529.1,231.1 529.2,228.8 529.3,230.0 529.4,231.4 529.5,233.8 529.7,233.2 529.8,234.5 529.9,233.3 530.0,236.0 530.1,234.3 530.2,236.2 530.3,235.2 530.5,235.6 530.6,237.1 530.7,235.5 530.8,237.7 530.9,238.7 531.0,236.9 531.1,239.0 531.2,239.3 531.3,238.7 531.4,238.0 531.5,242.6 531.6,240.9 531.8,245.5 531.9,245.8 532.0,240.3 532.1,244.5 532.2,243.6 532.3,245.2 532.4,243.2 532.5,246.8 532.6,249.4 532.7,244.9 532.8,244.9 532.9,246.9 533.0,247.7 533.1,249.0 533.2,248.2 533.3,249.3 533.4,251.8 533.5,250.9 533.6,252.3 533.7,251.2 533.8,251.3 533.9,252.0 534.0,252.3 534.1,251.3 534.2,254.2 534.3,254.2 534.4,254.4 534.5,256.6 534.6,259.1 534.7,255.2 534.8,257.7 534.9,255.8 535.0,259.3 535.1,258.2 535.2,256.8 535.3,257.8 535.4,260.8 535.5,259.4 535.6,260.7 535.7,264.7 535.8,260.6 535.9,263.0 536.0,259.2 536.1,260.6 536.2,264.3 536.3,264.4 536.4,267.0 536.5,264.5 536.6,262.5 536.7,267.6 536.8,264.2 536.9,266.9 537.0,270.1 537.1,267.0 537.2,268.9 537.3,267.5 537.4,271.5 537.5,271.6 537.6,268.4 537.7,270.7 537.8,270.9 537.9,273.1 538.0,274.1 538.1,273.4 538.2,274.8 538.3,274.7 538.4,275.1 538.5,274.9 538.6,274.6 538.7,276.8 538.8,275.5 538.9,277.7 539.1,276.6 539.2,277.9 539.3,279.9 539.4,280.5 539.5,279.6 539.6,279.8 539.7,280.6 539.8,281.9 539.9,280.4 540.0,285.5 540.2,282.5 540.3,283.1 540.4,284.5 540.5,284.6 540.6,284.5 540.7,284.5 540.8,283.6 540.9,284.8 541.1,286.4 541.2,286.0 541.3,290.9 541.4,284.9 541.5,291.4 541.6,289.4 541.7,288.9 541.9,290.0 542.0,290.1 542.1,290.2 542.2,288.8 542.3,291.2 542.4,290.6 542.6,293.1 542.7,292.5 542.8,292.7 542.9,294.0 543.0,294.0 543.1,295.8 543.3,295.2 543.4,294.4 543.5,297.0 543.6,295.2 543.7,295.1 543.8,296.3 544.0,299.3 544.1,297.5 544.2,298.1 544.3,303.0 544.4,300.2 544.6,301.6 544.7,300.5 544.8,304.0 544.9,304.4 545.0,302.2 545.2,301.8 545.3,301.2 545.4,304.8 545.5,303.5 545.6,303.2 545.7,306.6 545.9,306.2 546.0,307.6 546.1,305.6 546.2,306.2 546.3,308.5 546.5,311.1 546.6,310.0 546.7,309.4 546.8,311.5 546.9,312.1 547.1,309.6 547.2,314.8 547.3,313.9 547.4,312.8 547.5,313.9 547.7,311.9 547.8,316.0 547.9,318.1 548.0,315.5 548.1,316.3 548.2,316.0 548.4,316.8 548.5,315.8 548.6,317.9 548.7,319.6 548.8,318.3 549.0,320.6 549.1,317.7 549.2,319.3 549.3,320.1 549.4,320.6 549.5,323.2 549.7,320.6 549.8,323.9 549.9,321.9 550.0,323.6 550.1,320.6 550.2,321.7 550.4,325.5 550.5,326.8 550.6,326.7 550.7,326.6 550.8,328.4 550.9,328.0 551.0,329.2 551.2,326.7 551.3,331.6 551.4,328.9 551.5,328.4 551.6,329.5 551.7,332.4 551.8,331.6 552.0,331.8 552.1,334.4 552.2,334.5 552.3,334.1 552.4,332.8 552.5,335.6 552.6,334.4 552.7,335.8 552.9,335.6 553.0,333.9 553.1,336.3 553.2,336.9 553.3,335.5 553.4,336.7 553.5,341.2 553.6,339.1 553.8,342.6 553.9,341.1 554.0,340.2 554.1,340.3 554.2,344.1 554.3,341.0 554.4,343.6 554.5,342.6 554.7,342.5 554.8,343.6 554.9,344.0 555.0,347.5 555.1,344.7 555.2,345.3 555.3,343.6 555.4,346.3 555.6,344.8 555.7,346.9 555.8,345.1 555.9,347.4 556.0,351.1 556.1,350.4 556.2,348.5 556.3,350.4 556.5,353.5 556.6,351.7 556.7,350.6 556.8,353.3 556.9,351.4 557.0,353.6 557.1,354.7 557.2,354.9 557.3,354.3 557.5,358.6 557.6,358.8 557.7,357.9 557.8,359.4 557.9,358.3 558.0,358.8 558.1,357.9 558.2,358.7 558.3,360.6 558.5,359.9 558.6,359.2 558.7,360.4 558.8,361.1 558.9,359.4 559.0,361.0 559.1,364.0 559.2,360.4 559.3,364.4 559.5,366.5 559.6,364.3 559.7,366.6 559.8,366.6 559.9,366.0 560.0,366.5 560.1,367.4 560.2,368.3 560.3,368.7 560.5,369.2 560.6,370.3 560.7,370.5 560.8,370.6 560.9,371.5 561.0,371.3 561.1,371.1 561.2,372.3 561.3,373.6 561.5,373.8 561.6,374.3 561.7,374.8 561.8,374.9 561.9,376.3 562.0,375.9 562.1,376.5 562.2,377.3 562.3,377.0 562.5,378.6 562.6,379.3 562.7,379.2 562.8,379.2 562.9,380.9 563.0,380.2 563.1,381.0 563.2,381.5 563.3,382.6 563.5,381.8 563.6,383.7 563.7,383.9 563.8,384.0 563.9,383.7 564.0,385.6 564.1,384.2 564.2,385.5 564.3,387.2 564.4,387.3 564.6,387.2 564.7,387.6 564.8,387.7 564.9,389.2 565.0,388.8 565.1,389.8 565.2,390.7 565.3,390.6 565.4,391.2 565.6,392.5 565.7,391.5 565.8,392.8 565.9,394.0 566.0,393.6 566.1,394.0 566.2,394.9 566.3,394.4 566.4,395.6 566.6,396.4 566.7,396.5 566.8,398.0 566.9,396.8 567.0,398.4 567.1,398.8 567.2,399.4 567.3,399.0 567.4,401.0 567.6,400.7 567.7,401.3 567.8,401.6 567.9,401.9 568.0,402.5 568.1,402.9 568.2,403.6 568.3,404.8 568.4,404.9 568.6,404.7 568.7,405.4 568.8,406.1 568.9,406.3 569.0,407.3 569.1,407.7 569.2,407.2 569.3,408.6 569.4,408.4 569.5,409.4 569.6,409.7 569.7,410.1 569.8,411.2 569.9,411.3 570.0,412.8 570.1,412.5 570.2,413.4 570.3,413.2 570.4,414.9 570.5,414.1 570.6,414.5 570.7,414.6 570.8,416.7 570.9,416.9 571.0,416.7 571.1,416.5 571.2,417.5 571.3,418.4 571.4,419.3 571.5,419.9 571.6,420.3 571.7,420.5 571.8,420.6 571.9,420.2 572.0,422.5 572.1,421.9 572.1,423.0 572.2,424.0 572.3,423.0 572.4,424.2 572.6,425.1 572.7,424.9 572.8,425.3 572.9,427.0 573.0,426.5 573.1,427.2 573.2,428.4 573.3,428.2 573.4,429.4 573.5,428.3 573.6,430.0 573.8,431.3 573.9,430.2 574.0,430.0 574.1,432.0 574.3,433.0 574.4,433.6 574.5,432.6 574.7,432.9 574.8,432.9 574.9,435.5 575.1,436.1 575.2,435.8 575.4,436.3 575.5,436.1 575.7,437.2 575.8,437.2 576.0,438.0 576.2,437.9 576.4,438.7 576.6,439.6 576.8,440.1 577.0,439.6 577.2,442.0 577.5,442.0 577.7,441.8 578.0,442.6 578.3,442.0 578.6,443.3 578.9,444.3 579.1,443.1 579.4,443.9 579.7,444.3 580.1,445.3 580.4,445.6 580.7,445.3 581.0,446.3 581.3,445.5 581.6,447.7 581.9,447.2 582.2,448.3 582.5,448.2 582.8,449.1 583.1,450.0 583.4,449.5 583.7,449.7 583.9,450.5 584.2,451.1 584.5,452.0 584.7,451.5 584.9,452.5 585.2,453.5 585.4,453.3 585.6,453.9 585.9,454.5 586.1,455.0 586.3,455.6 586.5,455.9 586.8,455.1 587.0,456.7 587.2,458.0 587.4,457.0 587.7,458.3 587.9,458.3 588.1,458.9 588.4,460.1 588.6,460.1 588.9,460.1 589.2,460.3 589.4,462.0 589.7,461.1 590.0,461.9 590.3,462.6 590.6,462.2 590.9,463.1 591.2,463.8 591.5,464.4 591.8,464.6 592.2,465.3 592.5,465.7 592.8,465.5 593.2,466.6 593.5,467.7 593.8,467.7 594.2,468.5 594.5,469.0 594.9,469.9 595.2,468.7 595.6,470.0 596.0,469.6 596.3,471.2 596.7,470.2 597.1,470.6 597.4,470.8 597.8,471.8 598.2,472.1 598.5,472.9 598.9,471.4 599.3,471.1 599.6,471.5 600.0,471.3 600.4,471.1 600.8,471.4 601.2,470.8 601.5,470.4 601.9,469.2 602.3,470.1 602.7,469.5 603.1,468.1 603.5,468.4 603.9,468.4 604.3,467.5 604.7,466.7 605.1,466.6 605.4,465.7 605.9,465.8 606.3,464.7 606.7,465.5 607.1,463.3 607.5,463.1 607.9,464.8 608.3,464.5 608.7,463.3 609.1,463.6 609.6,462.9 610.0,462.0 610.4,463.2 610.8,462.4 611.3,462.9 611.7,462.8 612.1,462.2 612.6,463.0 613.0,462.6 613.5,464.3 614.0,463.9 614.4,464.1 614.9,464.8 615.3,465.0 615.8,465.0 616.3,464.9 616.7,464.9 617.2,465.7 617.7,466.0 618.1,466.6 618.6,466.3 619.1,467.6 619.5,468.3 620.0,467.3 620.4,467.8 620.9,468.6 621.3,469.1 621.8,468.7 622.2,469.2 622.7,468.6 623.1,469.8 623.5,468.8 623.9,468.9 624.3,468.9 624.7,468.4 625.1,468.4 625.5,467.9 625.9,468.1 626.2,467.7 626.6,466.6 627.0,466.6 627.3,467.0 627.7,464.9 628.1,465.0 628.4,465.5 628.8,464.0 629.1,463.1 629.5,463.2 629.9,464.0 630.2,462.5 630.6,462.0 631.0,461.4 631.3,461.6 631.7,461.1 632.1,461.2 632.5,460.6 632.9,460.3 633.3,460.5 633.7,459.9 634.1,461.4 634.5,460.5 635.0,460.5 635.4,461.1 635.8,461.4 636.2,461.6 636.7,461.8 637.1,462.1 637.5,462.2 638.0,463.2 638.4,462.5 638.9,463.5 639.3,462.9 639.8,463.9 640.2,464.4 640.6,464.4 641.1,465.9 641.5,465.0 642.0,465.3 642.4,465.8 642.9,466.2 643.4,466.7 643.8,467.2 644.3,466.3 644.7,467.7 645.2,467.5 645.6,466.8 646.1,466.5 646.5,466.4 647.0,465.9 647.5,465.1 647.9,465.6 648.4,465.1 648.9,465.6 649.4,464.7 649.8,464.2 650.3,463.8 650.8,463.4 651.2,463.8 651.7,463.1 652.2,462.8 652.7,462.4 653.1,462.2 653.6,462.3 654.0,462.2 654.5,462.2 654.9,462.0 655.3,462.3 655.8,462.1 656.2,462.0 656.6,461.9 657.0,461.7 657.5,462.3 657.9,463.1 658.3,461.4 658.7,463.1 659.1,463.0 659.5,464.0 659.9,464.4 660.3,464.2 660.6,465.8 661.0,465.0 661.4,465.8 661.8,466.7 662.2,466.7 662.6,466.9 662.9,467.9 663.3,467.2 663.7,468.3 664.1,468.1 664.5,470.2 664.9,470.3 665.2,470.7 665.6,470.9 666.0,470.6 666.4,470.6 666.8,471.1 667.2,471.1 667.6,471.8 668.0,471.9 668.5,472.7 668.9,472.1 669.3,472.6 669.7,471.9 670.1,472.6 670.6,472.0 671.0,472.2 671.4,472.2 671.8,471.9 672.3,471.9 672.7,472.2 673.1,470.9 673.5,470.1 674.0,471.6 674.4,471.9 674.9,470.1 675.3,470.9 675.7,470.3 676.2,469.5 676.6,468.6 677.1,470.1 677.5,468.7 678.0,467.6 678.4,468.2 678.9,467.8 679.3,466.9 679.8,468.1 680.3,466.9 680.7,466.4 681.2,466.3 681.7,466.9 682.1,466.9 682.6,465.4 683.1,464.9 683.5,465.7 684.0,465.7 684.5,464.4 685.0,464.1 685.5,464.9 685.9,464.8 686.4,464.3 686.9,464.2 687.4,463.9 687.9,464.0 688.4,464.1 688.9,463.8 689.4,464.6 689.9,463.3 690.4,463.5 690.9,463.3 691.4,463.2 692.0,462.7 692.5,462.9 693.0,463.2 693.5,462.2 694.0,463.0 694.5,463.7 695.0,463.7 695.5,462.6 696.0,463.1 696.6,462.9 697.1,463.4 697.6,462.4 698.1,462.2 698.6,463.2 699.1,462.3 699.6,461.4 700.1,462.5 700.7,462.7 701.2,462.7 701.7,462.4 702.2,463.0 702.7,463.0 703.2,463.0 703.7,463.7 704.2,462.8 704.7,461.6 705.2,462.8 705.7,462.4 706.2,462.0 706.8,462.8 707.3,462.5 707.8,462.9 708.3,462.7 708.8,462.5 709.3,463.0 709.8,463.4 710.3,463.1 710.8,463.0 711.3,464.4 711.8,464.2 712.4,462.6 712.9,464.2 713.4,464.3 713.9,464.8 714.4,464.8 714.9,464.3 715.4,463.7 715.9,464.7 716.4,464.0 716.9,463.6 717.4,464.3 718.0,464.4 718.5,464.3 719.0,464.4 719.5,464.6 720.0,464.9 720.5,464.2 721.0,465.3 721.5,465.3 722.0,464.4 722.5,465.1 723.0,464.4 723.5,464.6 724.0,464.3 724.5,465.0 725.0,463.7 725.5,465.6 726.0,464.6 726.5,464.6 727.0,464.4 727.5,463.9 728.0,463.7 728.5,464.5 729.0,464.0 729.5,464.4 730.0,465.1 730.5,464.1 731.0,464.3 731.5,463.7 732.0,463.4 732.5,463.8 733.0,464.7 733.5,464.0 734.0,463.7 734.5,463.2 735.0,463.4 735.5,464.1 736.0,463.4 736.5,462.7 737.0,462.9 737.5,463.3 738.0,463.3 738.5,462.0 739.0,463.1 739.5,462.7 740.0,461.6 740.5,462.0 741.0,462.6 741.5,462.1 742.0,462.8 742.5,462.8 743.0,462.6 743.5,462.4 744.0,462.8 744.5,461.9 745.0,461.5 745.5,462.7 746.0,463.2 746.5,462.2 747.0,463.1 747.5,462.9 748.0,462.2 748.5,462.7 749.0,463.3 749.5,462.2 750.0,462.9 750.5,462.9 751.0,462.3 751.5,463.2 752.0,462.4 752.5,463.2 753.0,462.8 753.5,462.5 754.0,462.7 754.5,462.4 755.0,464.0 755.5,462.4 756.0,462.5 756.5,463.5 757.0,463.3 757.5,463.3 758.0,462.4 758.5,462.5 759.0,462.9 759.5,463.1 760.0,463.5 760.5,463.5 761.0,463.2 761.5,463.4 762.0,462.3 762.5,462.3 763.0,462.7 763.5,463.0 764.0,462.7 764.5,462.9 765.0,463.2 765.5,462.8 766.0,463.1 766.5,463.7 767.0,463.4 767.5,463.0 768.0,463.3 768.5,463.5 769.0,463.3 769.5,463.7 770.0,462.6 770.5,463.8 771.0,462.8 771.5,463.6 772.0,462.6 772.5,463.8 773.0,463.8 773.5,463.0 774.0,463.7 774.5,463.2 775.0,464.0 775.5,463.3 776.0,463.2 776.5,463.0 777.0,463.4 777.5,463.7 778.0,463.8 778.5,463.1 779.0,463.3 779.5,462.9 780.0,463.1 780.5,463.4 781.0,463.7 781.5,463.9 782.0,463.2 782.5,462.9 783.0,464.3 783.5,463.5 784.0,463.4 784.5,463.6 785.0,463.5 785.5,463.9 786.0,463.8 786.5,463.0 787.0,463.4 787.5,463.9 788.0,463.4 788.5,463.9 789.0,463.0 789.5,464.2 790.0,463.7 790.5,462.7 791.0,464.0 791.5,463.0 792.0,463.6 792.5,463.5 793.0,463.6 793.5,463.7 794.0,462.4 794.5,463.1 795.0,462.8 795.5,463.0 796.0,463.3 796.5,464.4 797.0,463.1 797.5,462.6 798.0,464.3 798.5,463.4 799.0,462.9 799.5,463.9 800.0,463.4 800.5,463.3 801.0,462.1 801.5,463.6 802.0,462.6 802.5,462.9 803.0,462.9 803.5,463.4 804.0,463.2 804.5,462.4 805.0,462.3 805.5,462.1 806.0,462.4 806.5,462.6 807.0,462.5 807.5,462.3 808.0,461.9 808.5,462.0 809.0,462.4 809.5,462.7 810.0,462.6 810.5,462.0 811.0,462.6 811.5,462.8 812.0,461.9 812.5,461.7 813.0,462.7 813.5,463.1 814.0,462.5 814.5,462.5 815.0,462.3 815.5,462.9 816.0,461.7 816.5,462.4 817.0,462.2 817.5,461.4 818.0,462.3 818.5,462.5 819.0,462.5 819.5,462.5 820.0,462.5 820.5,462.9 821.0,462.0 821.5,462.2 822.0,463.0 822.5,463.1 823.0,463.3 823.5,462.2 824.0,463.5 824.5,463.4 825.0,463.1 825.5,462.5 826.0,463.5 826.5,463.7 827.0,463.1 827.5,463.5 828.0,463.5 828.5,463.7 829.0,463.7 829.5,463.8 830.0,462.8 830.5,463.3 831.0,462.8 831.5,464.1 832.0,464.0 832.5,463.9 833.0,464.6 833.5,463.3 834.0,464.5 834.5,463.4 835.0,463.0 835.5,463.6 836.0,463.6 836.5,463.8 837.0,463.9 837.5,464.2 838.0,464.3 838.5,463.7 839.0,463.5 839.5,464.3 840.0,464.6 840.5,464.5 841.0,464.3 841.5,463.2 842.0,464.3 842.5,463.7 843.0,464.5 843.5,464.7 844.0,463.8 844.5,463.5 845.0,463.8 845.5,464.2 846.0,464.2 846.5,463.5 847.0,464.1 847.5,463.5 848.0,463.6 848.5,464.4 849.0,463.8 849.5,462.8 850.0,463.3 850.5,464.4 851.0,462.9 851.5,464.3 852.0,463.8 852.5,463.1 853.0,463.4 853.5,463.9 854.0,464.3 854.5,463.0 855.0,463.5 855.5,463.7 856.0,463.9 856.5,464.7 857.0,464.3 857.5,463.7 858.0,462.8 858.5,463.3 859.0,462.9 859.5,463.2 860.0,463.1 860.5,463.2 861.0,463.5 861.5,463.1 862.0,463.7 862.5,463.8 863.0,462.6 863.5,462.4 864.0,462.7 864.5,462.0 865.0,463.2 865.5,463.1 866.0,463.1 866.5,463.9 867.0,463.4 867.5,463.5 868.0,463.1 868.5,462.7 869.0,461.9 869.5,462.8 870.0,463.0 870.5,462.5 871.0,462.6 871.5,463.1 872.0,463.9 872.5,462.8 873.0,462.8 873.5,462.6 874.0,463.0 874.5,462.5 875.0,463.2 875.5,462.6 876.0,463.6 876.5,462.6 877.0,462.5 877.5,463.3 878.0,463.3 878.5,462.6 879.0,463.2 879.5,463.2 880.0,463.8 880.5,462.7 881.0,462.3 881.5,463.3 882.0,463.5 882.5,463.7 883.0,463.1 883.5,462.4 884.0,462.2 884.5,464.5 885.0,463.3 885.5,463.3 886.0,463.6 886.5,463.6 887.0,463.1 887.5,463.3 888.0,463.5 888.5,464.1 889.0,464.5 889.5,464.1 890.0,463.9 890.5,463.1 891.0,463.2 891.5,463.8 892.0,463.3 892.5,463.4 893.0,464.9 893.5,463.5 894.0,463.6 894.5,462.8 895.0,464.0 895.5,463.9 896.0,463.6 896.5,464.0 897.0,462.5 897.5,464.5 898.0,464.4 898.5,462.7 899.0,463.9 899.5,464.1 900.0,464.2 900.5,463.9 901.0,464.4 901.5,464.0 902.0,463.5 902.5,464.5 903.0,463.1 903.5,463.5 904.0,463.5 904.5,464.5 905.0,463.4 905.5,463.0 906.0,463.1 906.5,463.8 907.0,463.6 907.5,463.8 908.0,462.9 908.5,463.7 909.0,464.0 909.5,464.5 910.0,464.2 910.5,462.8 911.0,463.7 911.5,462.9 912.0,463.6 912.5,463.8 913.0,463.3 913.5,462.1 914.0,463.4 914.5,463.3 915.0,463.0 915.5,463.6 916.0,463.0 916.5,463.1 917.0,463.4 917.5,462.8 918.0,463.5 918.5,462.9 919.0,463.0 919.5,463.4 920.0,463.7 920.5,462.9 921.0,463.1 921.5,462.8 922.0,462.2 922.5,462.7 923.0,464.1 923.5,462.8 924.0,463.3 924.5,463.2 925.0,463.5 925.5,462.8 926.0,463.2 926.5,462.7 927.0,464.0 927.5,463.0 928.0,462.8 928.5,463.4 929.0,462.4 929.5,463.3 930.0,463.9 930.5,462.3 931.0,463.1 931.5,462.5 932.0,462.9 932.5,462.7 933.0,461.8 933.5,463.4 934.0,462.8 934.5,463.3 935.0,462.5 935.5,462.7 936.0,462.7 936.5,462.2 937.0,463.8 937.5,463.5 938.0,463.6 938.5,463.3 939.0,462.8 939.5,463.2 940.0,464.2 940.5,463.8 941.0,463.2 941.5,462.5 942.0,463.4 942.5,461.8 943.0,463.6 943.5,462.8 944.0,463.0 944.5,463.7 945.0,463.9 945.5,463.1 946.0,462.7 946.5,462.4 947.0,462.7 947.5,463.6 948.0,463.5 948.5,463.0 949.0,463.4 949.5,463.2 950.0,462.7 950.5,463.2 951.0,464.1 951.5,464.3 952.0,463.1 952.5,463.6 953.0,462.9 953.5,463.9 954.0,463.5 954.5,463.6 955.0,464.2 955.5,464.0 956.0,463.9 956.5,463.9 957.0,464.0 957.5,462.7 958.0,463.9 958.5,463.5 959.0,464.6 959.5,463.8 960.0,463.4 960.5,463.5 961.0,464.3 961.5,463.9 962.0,463.9 962.5,464.5 963.0,464.2 963.5,463.9 964.0,464.6 964.5,464.3 965.0,464.2 965.5,464.2 966.0,462.8" fill="none" stroke="#6a309e" stroke-width="0.8" stroke-linejoin="round" opacity="1.0"/><polyline points="26.0,261.4 27.5,261.4 29.0,261.5 30.5,261.3 32.0,261.4 33.5,261.6 35.0,261.4 36.5,261.7 38.0,261.3 39.5,261.2 41.0,261.6 42.5,261.5 44.0,261.8 45.5,261.2 47.0,261.7 48.5,261.6 50.0,261.4 51.5,261.2 53.0,261.6 54.5,261.7 56.0,261.5 57.5,261.5 59.1,261.6 60.6,261.6 62.1,261.4 63.6,261.3 65.1,261.5 66.6,261.5 68.1,261.8 69.6,261.8 71.1,261.5 72.6,261.4 74.1,261.3 75.6,261.6 77.1,261.6 78.6,261.3 80.1,261.6 81.6,261.8 83.1,261.4 84.6,261.8 86.1,261.4 87.6,261.6 89.1,261.7 90.6,261.3 92.1,261.4 93.6,261.8 95.1,261.2 96.6,261.3 98.1,261.4 99.6,261.6 101.1,261.6 102.6,261.8 104.1,261.6 105.6,261.1 107.1,261.2 108.6,261.1 110.1,261.4 111.6,261.1 113.1,261.5 114.6,261.5 116.1,261.2 117.6,261.7 119.1,261.4 120.6,261.8 122.2,261.3 123.7,261.5 125.2,261.5 126.7,261.3 128.2,261.6 129.7,261.1 131.2,261.3 132.7,261.3 134.2,261.7 135.7,261.4 137.2,261.1 138.7,261.3 140.2,261.5 141.7,261.6 143.2,261.1 144.7,261.6 146.2,261.3 147.7,261.4 149.2,261.4 150.7,261.4 152.2,261.8 153.7,261.7 155.2,261.7 156.7,261.6 158.2,261.5 159.7,261.2 161.2,261.1 162.7,261.6 164.2,261.5 165.7,261.5 167.2,261.3 168.7,261.2 170.2,261.7 171.7,261.4 173.2,261.1 174.7,261.3 176.2,261.3 177.7,261.1 179.2,261.7 180.7,261.7 182.2,261.6 183.8,261.0 185.3,261.3 186.8,261.1 188.3,261.5 189.8,261.6 191.3,261.6 192.8,261.6 194.3,261.1 195.8,261.0 197.3,261.1 198.8,261.6 200.3,261.6 201.8,261.4 203.3,261.2 204.8,261.6 206.3,261.1 207.8,261.2 209.3,261.0 210.8,261.7 212.3,261.3 213.8,261.6 215.3,261.6 216.8,261.4 218.3,261.7 219.8,261.6 221.3,261.7 222.8,261.7 224.3,261.1 225.8,261.5 227.3,261.2 228.8,261.2 230.3,261.2 231.8,261.7 233.3,261.0 234.8,261.3 236.3,261.1 237.8,261.7 239.3,261.4 240.8,261.5 242.3,261.4 243.8,261.5 245.3,261.2 246.9,261.3 248.4,261.5 249.9,261.5 251.4,261.6 252.9,261.2 254.4,261.6 255.9,261.5 257.4,261.4 258.9,261.3 260.4,261.4 261.9,261.1 263.4,261.1 264.9,261.2 266.4,261.1 267.9,261.0 269.4,261.5 270.9,261.5 272.4,261.4 273.9,261.2 275.4,261.5 276.9,261.6 278.4,261.4 279.9,261.2 281.4,261.4 282.9,261.3 284.4,261.2 285.9,261.1 287.4,261.6 288.9,261.5 290.4,261.7 291.9,261.1 293.4,261.2 294.9,261.4 296.4,261.1 297.9,261.2 299.4,261.4 300.9,261.4 302.4,261.7 303.9,261.4 305.4,261.5 306.9,261.5 308.4,261.6 309.9,261.3 311.4,261.1 312.9,261.7 314.4,261.6 315.9,261.1 317.5,261.1 319.0,261.2 320.5,261.5 322.0,261.2 323.5,261.1 325.0,261.4 326.5,261.1 328.0,261.3 329.5,261.4 331.0,261.2 332.5,261.1 334.0,261.3 335.5,261.3 337.0,261.3 338.5,261.4 340.0,261.4 341.5,261.3 343.0,261.1 344.5,261.7 346.0,261.6 347.5,261.5 349.0,261.1 350.5,261.3 352.0,261.8 353.5,261.5 355.0,261.3 356.7,262.0 358.3,262.5 360.0,262.2 361.6,262.3 363.3,261.9 364.9,261.2 366.5,261.1 367.9,261.5 369.3,262.3 370.5,263.5 371.6,265.1 372.6,266.6 373.3,267.8 374.0,269.1 374.7,270.7 375.3,272.1 375.9,273.6 376.5,274.7 377.1,276.3 377.7,277.5 378.3,278.9 379.0,280.4 379.7,282.2 380.5,283.7 381.2,285.2 381.9,286.6 382.6,288.3 383.3,289.6 384.0,291.2 384.6,292.8 385.2,294.3 385.8,296.0 386.4,297.5 387.0,299.3 387.8,300.6 388.8,302.0 389.8,303.5 391.0,304.9 392.2,306.2 393.5,307.4 394.6,308.6 395.8,309.5 396.9,310.3 398.1,311.4 399.3,312.2 400.5,313.1 401.8,314.0 403.0,314.8 404.3,315.8 405.6,316.9 407.0,317.6 408.3,318.2 409.7,319.1 411.1,319.9 412.5,320.6 413.9,321.1 415.3,321.7 416.7,322.5 418.1,323.1 419.5,323.4 421.0,324.2 422.4,324.5 423.9,325.0 425.4,325.4 427.0,325.6 428.6,326.1 430.1,326.1 431.7,326.2 433.3,326.3 434.8,326.4 436.3,326.4 437.8,326.3 439.4,326.1 440.9,326.0 442.4,325.9 443.9,325.9 445.4,325.8 447.0,325.6 448.5,325.3 450.0,325.4 451.7,325.6 453.4,325.9 455.0,326.1 456.5,325.0 458.0,324.1 459.6,323.1 461.3,322.3 463.0,322.1 464.5,322.2 466.0,322.6 467.5,323.0 469.0,323.3 470.5,323.6 472.0,324.2 473.5,324.6 475.0,325.2 476.5,325.4 478.1,325.7 479.6,326.0 481.2,326.5 482.7,326.9 484.2,327.2 485.8,327.5 487.3,328.1 488.8,328.3 490.4,328.7 491.9,329.2 493.5,329.6 495.0,330.0 496.7,330.4 498.4,330.6 500.1,330.8 501.8,331.1 503.5,331.6 505.1,332.2 506.6,332.5 508.0,333.3 509.2,334.2 510.3,335.3 511.4,336.3 512.4,337.6 513.4,338.5 514.3,339.8 515.2,341.1 516.2,342.5 517.1,343.7 518.0,345.0 518.9,346.4 519.9,347.4 520.8,348.7 521.8,350.0 522.7,351.1 523.7,352.3 524.6,353.6 525.4,354.7 526.3,355.9 527.1,357.5 527.9,358.7 528.6,360.0 529.3,361.2 530.0,362.9 530.6,364.1 531.3,365.6 531.9,366.9 532.5,368.6 533.1,369.8 533.7,371.2 534.3,372.9 534.9,374.1 535.4,375.6 536.0,377.1 536.6,378.8 537.1,379.9 537.7,381.4 538.3,383.1 538.8,384.3 539.4,385.8 540.0,387.4 540.6,388.8 541.2,390.2 541.7,391.4 542.3,393.1 542.9,394.3 543.5,395.9 544.1,397.2 544.7,398.7 545.2,400.0 545.8,401.3 546.4,402.7 547.0,404.2 547.5,405.5 548.1,406.9 548.7,408.6 549.3,409.9 549.9,411.4 550.4,412.6 551.0,414.1 551.6,415.5 552.2,416.8 552.8,418.2 553.3,419.9 553.9,421.2 554.5,422.6 555.1,424.0 555.7,425.5 556.2,426.9 556.8,428.2 557.4,429.4 558.0,431.1 558.6,432.3 559.1,433.7 559.7,435.0 560.3,436.6 560.8,438.0 561.4,439.4 561.9,440.8 562.5,442.0 563.1,443.7 563.6,445.0 564.2,446.3 564.7,447.9 565.3,449.3 565.8,450.7 566.4,452.2 566.9,453.2 567.5,454.7 568.1,456.2 568.6,457.5 569.2,459.0 569.8,460.5 570.4,461.6 571.0,463.1 571.6,464.7 572.2,466.0 572.8,467.2 573.4,468.4 574.0,469.9 574.7,471.3 575.3,472.8 576.0,473.9 576.7,475.3 577.5,476.9 578.3,477.9 579.1,479.5 580.0,480.6 580.9,482.2 581.8,483.4 582.7,484.8 583.6,485.9 584.5,487.4 585.5,488.4 586.4,489.6 587.3,490.9 588.2,492.2 589.1,493.7 590.0,495.3 590.8,496.5 591.7,498.2 592.5,499.5 593.3,501.2 594.2,502.7 595.1,503.9 596.0,505.4 596.9,506.5 597.9,507.5 598.9,508.5 600.1,508.7 601.5,508.0 603.1,507.0 604.6,505.9 606.0,504.9 607.3,503.9 608.6,502.7 609.8,501.3 611.1,500.0 612.3,498.8 613.6,498.7 615.0,499.1 616.4,499.9 617.8,501.4 619.3,502.7 620.7,503.8 622.1,504.7 623.5,505.0 624.8,504.7 626.0,503.8 627.2,502.6 628.4,500.9 629.6,499.4 630.8,498.5 632.0,497.3 633.3,496.9 634.7,497.3 636.1,497.7 637.5,499.0 638.9,500.3 640.3,501.4 641.8,502.4 643.3,503.0 644.7,503.5 646.1,503.3 647.6,502.6 649.0,501.6 650.5,500.3 652.0,499.2 653.4,498.4 654.8,497.6 656.2,497.5 657.5,497.9 658.9,498.9 660.1,499.8 661.4,500.9 662.7,502.4 664.0,503.6 665.2,504.7 666.6,505.8 667.9,506.6 669.3,506.8 670.7,506.8 672.2,506.6 673.6,506.3 675.1,505.6 676.6,504.8 678.1,504.2 679.6,503.3 681.1,502.5 682.7,501.9 684.2,501.0 685.8,500.6 687.3,500.1 688.9,500.0 690.5,499.9 692.1,499.7 693.8,499.8 695.4,499.7 697.1,499.8 698.7,500.0 700.4,500.1 702.1,500.0 703.7,500.3 705.3,500.3 707.0,500.3 708.6,500.4 710.2,500.7 711.9,500.8 713.5,500.9 715.1,500.8 716.7,500.8 718.4,501.0 720.0,500.7 721.5,500.9 723.1,500.8 724.6,500.5 726.1,500.4 727.7,500.3 729.2,499.9 730.7,499.7 732.3,499.7 733.8,499.4 735.3,499.2 736.9,498.9 738.4,498.8 739.9,498.6 741.5,498.5 743.0,498.7 744.5,498.6 746.1,498.9 747.6,498.9 749.2,499.2 750.7,499.2 752.3,499.5 753.8,499.6 755.4,499.8 756.9,500.2 758.5,500.1 760.0,500.0 761.5,500.2 763.0,500.1 764.5,500.2 766.0,500.2 767.5,500.1 769.0,500.3 770.5,500.2 772.0,499.9 773.5,499.8 775.0,500.0 776.5,499.9 778.0,499.8 779.5,499.7 781.0,499.4 782.5,499.5 784.0,499.6 785.5,499.4 787.0,499.2 788.5,499.1 790.0,499.3 791.6,499.1 793.1,498.9 794.7,499.0 796.3,499.0 797.9,498.9 799.4,498.7 801.0,498.6 802.6,498.3 804.1,498.3 805.7,498.4 807.3,498.2 808.9,498.1 810.4,498.3 812.0,498.3 813.6,498.1 815.1,498.2 816.7,498.4 818.2,498.7 819.8,498.7 821.3,498.9 822.9,498.8 824.4,499.1 826.0,499.2 827.6,499.4 829.1,499.5 830.7,499.7 832.2,499.7 833.8,500.1 835.3,500.2 836.9,500.3 838.4,500.4 840.0,500.1 841.5,500.4 843.0,500.3 844.5,500.4 846.0,500.2 847.5,500.0 849.0,500.2 850.5,499.9 852.0,500.1 853.5,499.9 855.0,499.9 856.5,499.6 858.0,499.5 859.5,499.5 861.0,499.4 862.5,499.3 864.0,499.1 865.5,499.1 867.0,499.1 868.5,498.9 870.0,498.9 871.5,499.0 873.0,499.0 874.5,498.8 876.0,498.9 877.5,499.2 879.0,499.0 880.5,499.2 882.0,499.1 883.5,499.1 885.0,499.3 886.5,499.5 888.0,499.5 889.5,499.3 891.0,499.5 892.5,499.5 894.0,499.5 895.5,499.6 897.0,499.6 898.5,499.5 900.0,499.7 901.5,499.5 903.0,499.5 904.5,499.7 906.0,499.5 907.5,499.5 909.0,499.5 910.5,499.3 912.0,499.2 913.5,499.2 915.0,499.0 916.5,499.1 918.0,498.9 919.5,499.2 921.0,499.1 922.5,499.0 924.0,498.7 925.5,499.0 927.0,498.7 928.5,498.9 930.0,498.9 931.5,498.9 933.0,498.9 934.5,498.8 936.0,499.0 937.5,498.9 939.0,499.1 940.5,499.1 942.0,499.0 943.5,499.1 945.0,499.1 946.5,499.1 948.0,499.4 949.5,499.4 951.0,499.4 952.5,499.5 954.0,499.7 955.5,499.4 957.0,499.6 958.5,499.8 960.0,499.8 961.5,499.8 963.0,499.8 964.5,499.8 966.0,500.1" fill="none" stroke="#cc2038" stroke-width="1.0" stroke-linejoin="round" opacity="1.0"/><polyline points="26.0,495.4 27.0,493.5 28.0,496.1 29.0,496.2 30.0,493.3 31.0,494.3 32.0,495.4 33.0,495.1 34.0,494.9 35.0,495.3 36.0,494.9 37.0,495.8 38.0,494.1 39.0,494.0 40.0,495.0 41.0,494.7 42.0,494.4 43.0,495.4 44.0,493.2 45.0,496.2 46.0,495.3 47.0,494.0 48.0,493.8 49.0,493.5 50.0,495.0 51.0,492.9 52.0,494.2 53.0,495.0 54.0,494.0 55.0,495.8 56.0,494.5 57.0,493.8 58.0,493.5 59.0,494.7 60.0,494.6 61.0,495.1 62.0,494.0 63.0,492.5 64.1,494.8 65.1,494.8 66.1,495.5 67.1,495.4 68.1,494.8 69.1,494.4 70.1,494.0 71.1,494.6 72.1,492.5 73.1,495.1 74.1,493.2 75.1,495.7 76.1,494.0 77.1,493.0 78.1,494.0 79.1,494.9 80.1,493.4 81.1,494.2 82.1,494.0 83.1,494.1 84.1,495.1 85.1,495.4 86.1,493.4 87.1,493.8 88.1,496.5 89.1,494.7 90.1,494.6 91.1,494.3 92.1,494.8 93.1,495.2 94.1,494.3 95.1,493.3 96.1,495.5 97.1,493.4 98.1,494.3 99.1,493.7 100.1,494.8 101.1,495.1 102.1,494.3 103.1,493.6 104.1,494.4 105.1,494.8 106.1,494.9 107.1,493.1 108.1,494.5 109.1,494.3 110.1,494.6 111.1,494.9 112.2,494.4 113.2,494.7 114.2,494.4 115.2,494.3 116.2,494.2 117.2,494.5 118.2,495.4 119.2,494.6 120.2,493.7 121.2,493.8 122.2,494.9 123.2,493.9 124.2,494.5 125.2,495.1 126.2,494.4 127.2,495.2 128.2,495.3 129.2,493.8 130.2,495.6 131.2,495.7 132.2,494.9 133.2,493.4 134.2,496.0 135.2,494.3 136.2,495.4 137.2,494.2 138.2,495.5 139.2,494.4 140.2,495.8 141.2,493.5 142.2,495.3 143.2,494.4 144.2,495.5 145.2,493.4 146.2,494.2 147.2,494.1 148.2,493.9 149.2,495.0 150.2,494.8 151.2,494.9 152.2,495.0 153.3,495.1 154.3,495.7 155.3,493.7 156.3,496.1 157.3,494.7 158.3,495.2 159.3,494.8 160.3,495.1 161.3,494.2 162.3,493.7 163.3,494.7 164.3,496.1 165.3,494.3 166.3,493.9 167.3,493.8 168.3,493.9 169.3,494.4 170.3,494.8 171.3,493.4 172.3,496.1 173.3,493.9 174.3,495.5 175.3,495.9 176.3,495.4 177.3,495.2 178.3,494.1 179.3,494.0 180.3,495.4 181.3,494.7 182.3,495.3 183.3,495.6 184.3,495.6 185.3,492.7 186.3,494.6 187.3,496.3 188.3,494.3 189.3,496.2 190.3,494.2 191.3,495.1 192.3,494.8 193.3,496.3 194.3,494.5 195.3,493.9 196.4,494.0 197.4,494.0 198.4,495.1 199.4,495.4 200.4,495.5 201.4,494.7 202.4,495.1 203.4,495.5 204.4,494.0 205.4,495.2 206.4,494.3 207.4,494.2 208.4,494.5 209.4,495.0 210.4,494.3 211.4,494.1 212.4,493.9 213.4,494.6 214.4,495.0 215.4,493.8 216.4,494.8 217.4,495.0 218.4,494.3 219.4,495.0 220.4,495.4 221.4,495.0 222.4,494.2 223.4,494.6 224.4,494.6 225.4,495.9 226.4,495.4 227.4,494.4 228.4,494.8 229.4,492.9 230.4,495.1 231.4,494.0 232.4,495.4 233.4,493.9 234.4,495.2 235.4,496.4 236.4,495.2 237.4,494.1 238.4,494.4 239.4,494.6 240.4,495.3 241.4,496.2 242.4,494.1 243.4,494.0 244.4,495.5 245.4,494.2 246.4,494.6 247.4,496.0 248.4,495.0 249.4,495.3 250.4,495.6 251.4,494.9 252.4,494.8 253.4,495.3 254.4,495.7 255.4,492.9 256.4,493.1 257.4,494.2 258.4,493.9 259.5,496.7 260.5,494.9 261.5,493.1 262.5,494.8 263.5,496.2 264.5,495.1 265.5,494.1 266.5,494.8 267.5,494.4 268.5,494.9 269.5,494.2 270.5,494.4 271.5,494.5 272.5,494.2 273.5,494.3 274.5,493.6 275.5,494.2 276.5,492.8 277.5,494.3 278.5,495.8 279.5,493.3 280.5,495.7 281.5,495.3 282.5,493.4 283.5,494.1 284.5,494.3 285.5,496.4 286.5,493.5 287.5,495.3 288.5,494.4 289.5,495.1 290.5,493.5 291.5,495.3 292.5,493.4 293.5,493.8 294.5,494.8 295.5,494.9 296.5,493.4 297.5,493.0 298.5,494.1 299.5,494.7 300.5,494.5 301.5,494.2 302.5,494.6 303.5,494.7 304.5,494.2 305.5,494.9 306.5,494.1 307.5,495.4 308.5,495.5 309.5,494.1 310.5,493.7 311.5,493.6 312.5,493.8 313.5,495.3 314.5,494.1 315.4,493.5 316.4,494.2 317.4,493.3 318.4,495.0 319.4,495.3 320.4,495.1 321.4,495.6 322.4,493.7 323.4,493.6 324.4,494.1 325.4,494.6 326.4,494.5 327.4,492.7 328.4,493.9 329.4,494.6 330.4,493.9 331.4,494.2 332.4,492.8 333.4,492.6 334.4,494.4 335.4,494.5 336.4,494.8 337.4,492.9 338.4,494.0 339.4,493.5 340.4,494.3 341.4,494.6 342.4,493.5 343.4,493.6 344.4,494.3 345.4,492.8 346.4,494.2 347.4,493.3 348.4,494.9 349.4,493.9 350.4,494.0 351.4,494.6 352.4,493.8 353.4,492.0 354.4,493.3 355.4,494.0 356.4,494.2 357.4,494.0 358.4,494.3 359.4,494.4 360.4,493.0 361.4,494.4 362.4,493.9 363.4,493.3 364.3,493.7 365.3,493.1 366.3,495.3 367.3,493.1 368.3,493.9 369.3,493.3 370.3,493.4 371.3,492.5 372.3,493.5 373.3,494.4 374.3,494.1 375.3,493.1 376.3,494.8 377.3,492.2 378.3,492.2 379.4,492.7 380.3,492.4 381.3,492.7 382.2,492.9 383.1,491.0 384.0,489.9 384.8,488.8 385.7,489.1 386.5,486.2 387.4,487.7 388.2,485.3 389.1,485.5 389.9,485.5 390.8,484.1 391.6,483.6 392.4,483.0 393.3,481.9 394.1,482.6 395.0,481.5 395.8,480.7 396.6,480.8 397.5,479.4 398.3,478.6 399.1,480.2 399.9,478.8 400.7,477.2 401.5,476.9 402.3,475.9 403.1,475.9 403.9,474.4 404.7,475.4 405.4,473.5 406.2,473.3 406.9,473.0 407.6,471.5 408.3,470.3 409.0,469.3 409.7,469.1 410.3,467.2 411.0,467.4 411.7,466.4 412.4,464.7 413.0,466.6 413.7,463.8 414.3,464.3 415.0,464.3 415.6,462.7 416.2,460.3 416.9,459.6 417.5,459.3 418.2,458.3 418.8,458.4 419.4,457.4 420.0,457.3 420.7,454.7 421.3,455.9 421.9,452.2 422.5,452.2 423.1,453.6 423.8,452.2 424.4,449.2 425.0,449.6 425.6,448.9 426.2,449.4 426.9,446.0 427.5,447.2 428.1,445.2 428.7,444.5 429.4,443.5 430.0,444.6 430.6,443.6 431.3,441.7 431.9,439.4 432.6,439.6 433.2,438.7 433.8,439.3 434.5,436.1 435.2,437.0 435.8,437.0 436.5,435.7 437.1,434.4 437.8,434.9 438.4,432.9 439.1,432.7 439.7,431.5 440.4,432.4 441.0,428.5 441.7,430.4 442.3,428.1 443.0,426.7 443.7,426.5 444.3,425.8 445.0,426.2 445.6,423.7 446.3,424.3 447.0,423.4 447.6,420.6 448.3,421.2 449.0,419.9 449.6,421.5 450.3,418.6 451.0,417.9 451.7,418.1 452.4,414.9 453.1,415.4 453.8,416.4 454.5,415.5 455.2,412.2 455.9,414.4 456.6,412.9 457.3,411.4 458.0,412.3 458.7,409.6 459.5,408.3 460.2,409.9 461.0,406.9 461.7,409.4 462.5,406.4 463.3,404.5 464.0,404.4 464.8,404.0 465.6,402.9 466.4,402.0 467.2,402.4 468.0,401.9 468.8,401.8 469.6,401.4 470.4,398.3 471.2,398.7 472.0,397.2 472.8,396.6 473.6,397.1 474.4,396.4 475.2,395.8 476.0,393.0 476.8,395.4 477.6,394.1 478.4,394.2 479.2,393.1 479.9,392.2 480.7,391.3 481.5,390.3 482.3,390.3 483.0,387.6 483.7,388.9 484.5,387.2 485.2,387.8 486.0,386.0 486.7,383.5 487.4,385.6 488.1,382.9 488.9,383.1 489.6,382.8 490.3,382.1 491.0,381.3 491.8,381.0 492.5,380.2 493.2,378.6 494.0,379.8 494.7,377.4 495.4,377.6 496.2,377.7 497.0,375.3 497.7,376.1 498.5,376.0 499.3,374.6 500.1,373.5 500.9,371.4 501.7,371.7 502.5,370.6 503.4,371.4 504.2,370.8 505.1,369.6 506.0,367.9 506.9,368.9 507.8,368.4 508.7,367.2 509.6,366.8 510.5,367.2 511.4,366.0 512.3,366.5 513.3,366.2 514.2,365.4 515.2,365.0 516.1,363.8 517.1,362.4 518.0,360.6 519.0,361.9 519.9,361.7 520.9,361.6 521.8,362.7 522.8,361.8 523.8,362.6 524.8,361.7 525.8,361.3 526.8,362.5 527.8,361.3 528.9,361.1 529.9,362.6 530.9,362.6 532.0,364.9 533.0,363.8 534.0,362.5 535.0,364.6 536.1,366.0 537.1,366.2 538.1,366.2 539.0,364.8 540.0,366.5 540.9,366.8 541.9,366.8 542.8,368.0 543.7,367.6 544.6,368.2 545.6,368.1 546.5,369.9 547.4,368.5 548.3,369.6 549.2,370.9 550.1,372.2 551.0,372.2 551.9,372.9 552.8,374.2 553.7,371.9 554.5,374.7 555.4,375.2 556.3,376.7 557.1,374.7 558.0,378.6 558.8,376.5 559.6,377.4 560.4,378.4 561.2,378.7 562.0,380.4 562.9,380.7 563.7,380.7 564.4,379.9 565.2,382.2 566.0,382.8 566.8,383.6 567.6,383.7 568.4,385.0 569.1,385.6 569.9,386.3 570.6,387.3 571.4,385.7 572.1,389.7 572.9,389.3 573.6,390.3 574.3,389.2 575.1,390.5 575.8,393.4 576.5,392.7 577.2,393.4 577.9,394.6 578.6,394.6 579.3,396.8 580.0,395.5 580.6,397.4 581.3,397.9 581.9,398.3 582.6,399.0 583.2,399.5 583.8,399.9 584.4,402.0 585.0,403.7 585.6,404.0 586.2,406.1 586.8,404.3 587.3,405.0 587.9,406.7 588.5,407.5 589.1,409.7 589.7,408.4 590.3,409.0 590.9,411.0 591.5,410.4 592.1,412.8 592.7,412.8 593.4,414.2 594.0,414.5 594.7,415.9 595.4,418.0 596.1,417.9 596.9,419.8 597.6,418.7 598.3,421.0 599.1,422.6 599.9,421.4 600.7,422.7 601.4,423.0 602.2,424.6 603.0,424.2 603.8,423.6 604.6,423.7 605.4,424.6 606.2,424.0 607.0,423.2 607.8,422.7 608.7,422.5 609.5,420.4 610.3,420.7 611.2,418.4 612.0,420.3 612.8,417.6 613.6,416.3 614.4,415.7 615.2,413.8 616.0,415.3 616.8,414.9 617.6,414.0 618.4,412.5 619.3,413.2 620.2,410.9 621.2,411.3 622.2,411.7 623.3,411.4 624.4,410.4 625.6,410.7 626.7,411.9 627.8,411.2 628.9,410.0 630.0,412.9 631.0,411.4 632.0,412.8 632.9,413.6 633.9,413.9 634.8,414.0 635.7,414.3 636.7,415.4 637.6,415.1 638.6,416.0 639.5,415.9 640.5,415.9 641.5,416.7 642.5,417.9 643.5,416.6 644.5,416.7 645.6,417.1 646.6,415.2 647.6,416.5 648.6,415.4 649.7,415.5 650.7,416.5 651.8,416.2 652.8,416.3 653.8,414.0 654.9,413.5 655.9,414.6 657.0,414.0 658.0,411.8 659.0,414.5 660.1,414.1 661.1,414.3 662.1,415.3 663.1,414.5 664.1,413.7 665.1,412.4 666.1,414.0 667.1,413.7 668.1,414.3 669.2,414.7 670.2,414.4 671.2,414.8 672.2,415.3 673.2,415.8 674.2,416.8 675.2,415.2 676.2,415.6 677.2,418.2 678.2,416.7 679.2,417.1 680.2,415.9 681.2,418.0 682.3,418.3 683.3,418.2 684.3,416.2 685.3,417.2 686.3,417.6 687.3,417.9 688.3,418.7 689.3,418.4 690.3,416.4 691.3,417.5 692.3,417.7 693.3,417.9 694.3,417.6 695.3,418.5 696.3,416.8 697.4,416.4 698.4,416.6 699.4,416.2 700.4,415.7 701.4,416.2 702.4,416.0 703.4,414.5 704.4,415.3 705.4,414.9 706.4,416.2 707.4,415.3 708.4,414.9 709.5,414.7 710.5,415.5 711.5,413.2 712.5,414.0 713.5,415.2 714.5,413.5 715.5,413.1 716.5,413.9 717.5,413.7 718.5,414.5 719.6,413.5 720.6,415.3 721.6,414.6 722.6,413.8 723.6,414.8 724.6,414.0 725.6,414.8 726.6,414.0 727.6,415.7 728.6,415.1 729.7,414.0 730.7,414.8 731.7,414.3 732.7,413.4 733.7,414.6 734.7,414.9 735.7,414.0 736.7,415.7 737.7,416.5 738.8,414.0 739.8,414.2 740.8,414.7 741.8,415.3 742.8,414.3 743.8,414.7 744.8,416.0 745.8,414.4 746.9,415.2 747.9,414.3 748.9,415.3 749.9,414.9 750.9,416.3 751.9,415.3 752.9,415.0 753.9,415.1 754.9,416.4 756.0,416.1 757.0,415.3 758.0,414.4 759.0,415.5 760.0,416.4 761.0,415.6 762.0,414.4 763.0,415.8 764.0,415.3 765.0,415.5 766.0,415.4 767.0,414.9 768.0,414.9 769.0,416.2 770.0,415.9 771.0,414.8 772.0,414.2 773.0,416.4 774.0,416.0 775.0,415.7 776.0,415.2 777.0,417.0 778.0,414.5 779.0,415.3 780.0,416.0 781.0,415.9 782.0,416.0 783.0,414.6 784.0,416.2 785.0,416.5 786.0,415.2 787.0,416.4 788.0,415.4 789.0,415.6 790.0,415.6 791.0,415.5 792.0,415.7 793.0,416.6 794.0,416.6 795.0,416.1 796.0,416.1 797.0,414.7 798.0,415.5 799.0,416.0 800.0,415.7 801.0,415.3 802.0,415.0 803.0,416.4 804.0,416.1 805.0,413.8 806.0,417.5 807.0,416.1 808.0,415.8 809.0,416.5 810.0,416.1 811.0,416.9 812.0,415.4 813.0,416.4 814.0,416.3 815.0,414.4 816.0,417.3 817.0,415.4 818.0,414.7 819.0,415.7 820.0,416.5 821.0,415.0 822.0,415.6 823.0,415.4 824.0,415.6 825.0,413.8 826.0,416.8 827.0,415.0 828.0,416.2 829.0,415.7 830.0,414.3 831.0,415.7 832.0,415.0 833.0,415.6 834.0,415.2 835.0,415.6 836.0,415.6 837.0,415.9 838.0,416.2 839.0,415.0 840.0,416.7 841.0,417.2 842.0,415.9 843.0,417.3 844.0,416.7 845.0,416.7 846.0,415.4 847.0,416.7 848.0,414.2 849.0,414.3 850.0,416.2 851.0,417.0 852.0,416.0 853.0,415.0 854.0,414.7 855.0,415.9 856.0,416.0 857.0,414.7 858.0,415.6 859.0,415.6 860.0,415.3 861.0,413.9 862.0,414.9 863.0,415.7 864.0,417.1 865.0,416.8 866.0,415.5 867.0,415.0 868.0,416.0 869.0,415.4 870.0,415.8 871.0,416.3 872.0,416.0 873.0,416.5 874.0,417.2 875.0,414.8 876.0,416.9 877.0,414.3 878.0,415.1 879.0,416.7 880.0,415.0 881.0,415.2 882.0,415.9 883.0,415.2 884.0,415.5 885.0,415.9 886.0,415.6 887.0,415.3 888.0,415.2 889.0,414.9 890.0,416.2 891.0,417.6 892.0,415.5 893.0,414.6 894.0,417.2 895.0,416.6 896.0,415.5 897.0,415.3 898.0,415.6 899.0,416.0 900.0,414.9 901.0,415.9 902.0,414.1 903.0,414.9 904.0,414.9 905.0,415.4 906.0,415.6 907.0,415.5 908.0,415.8 909.0,416.6 910.0,417.6 911.0,415.5 912.0,416.0 913.0,415.5 914.0,415.9 915.0,415.3 916.0,415.4 917.0,416.0 918.0,416.8 919.0,415.9 920.0,415.7 921.0,415.5 922.0,414.8 923.0,415.0 924.0,415.8 925.0,416.5 926.0,415.8 927.0,415.1 928.0,415.7 929.0,416.4 930.0,415.7 931.0,416.5 932.0,414.6 933.0,416.0 934.0,414.9 935.0,414.3 936.0,415.8 937.0,416.2 938.0,416.1 939.0,416.6 940.0,415.8 941.0,414.0 942.0,416.3 943.0,416.5 944.0,415.5 945.0,415.4 946.0,415.8 947.0,415.8 948.0,414.9 949.0,416.5 950.0,417.1 951.0,416.3 952.0,415.9 953.0,413.9 954.0,416.1 955.0,416.2 956.0,416.2 957.0,416.0 958.0,415.1 959.0,415.9 960.0,415.7 961.0,415.8 962.0,416.4 963.0,416.0 964.0,415.5 965.0,415.1 966.0,414.4" fill="none" stroke="#2abccc" stroke-width="1.1" stroke-linejoin="round" opacity="1.0"/><polyline points="26.0,412.4 26.8,410.8 27.6,411.9 28.4,411.3 29.2,411.1 30.0,411.4 30.8,411.1 31.6,412.3 32.4,410.6 33.2,410.8 34.0,411.0 34.8,411.3 35.6,412.2 36.4,410.4 37.2,409.1 38.0,411.4 38.8,411.6 39.6,411.0 40.4,411.1 41.2,411.6 42.1,410.3 42.9,410.3 43.7,409.7 44.5,410.9 45.3,410.4 46.1,411.0 46.9,410.2 47.7,409.4 48.5,412.0 49.3,411.4 50.1,412.0 50.9,412.2 51.7,409.8 52.5,411.8 53.3,410.2 54.1,409.4 54.9,410.3 55.7,410.7 56.5,412.6 57.4,411.0 58.2,411.0 59.0,411.6 59.8,411.5 60.6,411.1 61.4,412.9 62.2,410.4 63.0,410.3 63.8,409.6 64.6,410.3 65.4,410.5 66.2,410.9 67.0,411.0 67.8,412.5 68.7,412.0 69.5,411.0 70.3,411.5 71.1,410.8 71.9,411.2 72.7,411.3 73.5,413.1 74.3,410.5 75.1,410.6 75.9,411.8 76.7,410.7 77.5,410.7 78.4,411.8 79.2,410.6 80.0,412.6 80.8,412.0 81.6,411.1 82.4,411.4 83.2,411.0 84.0,412.8 84.8,411.7 85.6,411.7 86.5,410.9 87.3,412.9 88.1,411.6 88.9,411.1 89.7,412.9 90.5,411.9 91.3,411.3 92.1,412.5 92.9,411.3 93.7,411.6 94.6,412.5 95.4,410.8 96.2,411.6 97.0,411.7 97.8,412.1 98.6,411.0 99.4,410.9 100.2,411.6 101.0,411.1 101.8,412.0 102.7,411.8 103.5,412.0 104.3,412.0 105.1,411.0 105.9,411.6 106.7,412.1 107.5,413.0 108.3,412.2 109.1,412.0 110.0,413.7 110.8,411.7 111.6,413.1 112.4,412.6 113.2,411.1 114.0,412.1 114.8,412.7 115.6,411.2 116.4,413.3 117.3,411.7 118.1,412.5 118.9,412.0 119.7,412.5 120.5,411.6 121.3,413.5 122.1,411.6 122.9,413.6 123.7,412.0 124.6,411.6 125.4,412.9 126.2,412.4 127.0,412.1 127.8,411.4 128.6,412.1 129.4,412.3 130.2,411.7 131.0,411.4 131.9,411.6 132.7,411.6 133.5,413.3 134.3,413.1 135.1,412.1 135.9,411.6 136.7,412.4 137.5,412.9 138.3,412.0 139.2,412.4 140.0,413.4 140.8,412.3 141.6,412.2 142.4,413.6 143.2,412.5 144.0,412.6 144.8,411.9 145.6,413.5 146.5,412.8 147.3,412.4 148.1,412.6 148.9,413.8 149.7,412.6 150.5,412.6 151.3,412.8 152.1,412.8 152.9,413.5 153.7,412.5 154.6,412.4 155.4,412.2 156.2,412.9 157.0,411.8 157.8,412.4 158.6,411.6 159.4,412.8 160.2,412.7 161.0,412.7 161.8,412.5 162.7,412.2 163.5,413.1 164.3,411.1 165.1,412.1 165.9,414.3 166.7,413.2 167.5,414.2 168.3,414.6 169.1,413.1 169.9,412.3 170.8,413.4 171.6,412.3 172.4,413.1 173.2,413.3 174.0,414.4 174.8,413.0 175.6,413.0 176.4,413.0 177.2,415.0 178.0,413.1 178.8,413.9 179.6,412.6 180.5,412.9 181.3,415.3 182.1,412.5 182.9,413.7 183.7,413.7 184.5,413.7 185.3,414.1 186.1,413.1 186.9,414.5 187.7,413.6 188.5,413.1 189.3,413.7 190.1,413.4 191.0,413.2 191.8,413.8 192.6,412.7 193.4,413.7 194.2,413.1 195.0,411.4 195.8,414.3 196.6,413.3 197.4,413.2 198.2,413.1 199.0,412.2 199.8,412.4 200.6,413.8 201.4,413.2 202.2,414.4 203.0,415.0 203.8,413.1 204.6,412.2 205.5,414.5 206.3,414.0 207.1,414.8 207.9,413.7 208.7,413.7 209.5,412.9 210.3,414.9 211.1,413.6 211.9,414.7 212.7,413.6 213.5,413.1 214.3,414.1 215.1,414.4 215.9,411.6 216.7,413.2 217.5,414.0 218.3,414.4 219.1,413.6 219.9,413.0 220.7,413.9 221.5,413.3 222.3,411.6 223.1,412.1 223.9,413.9 224.7,412.9 225.5,414.1 226.3,414.3 227.1,411.6 227.9,413.7 228.7,412.4 229.5,414.5 230.3,412.0 231.1,414.6 231.9,413.4 232.7,413.6 233.5,413.7 234.3,412.9 235.1,413.5 235.9,415.6 236.7,413.6 237.5,413.0 238.3,415.4 239.1,414.4 239.9,413.7 240.7,413.9 241.5,412.4 242.3,413.2 243.1,412.8 243.9,414.9 244.7,414.4 245.5,413.7 246.3,412.7 247.1,412.3 247.9,413.0 248.7,412.7 249.5,413.6 250.3,412.3 251.0,413.7 251.8,413.5 252.6,412.8 253.4,413.7 254.2,412.8 255.0,413.2 255.8,412.8 256.6,415.0 257.4,412.4 258.2,413.6 259.0,412.7 259.8,413.0 260.6,414.2 261.4,413.3 262.2,413.3 262.9,411.7 263.7,412.9 264.5,415.0 265.3,414.1 266.1,411.4 266.9,412.2 267.7,413.2 268.5,412.1 269.3,413.4 270.1,412.5 270.8,414.5 271.6,414.4 272.4,414.2 273.2,412.4 274.0,413.5 274.8,414.2 275.6,412.5 276.4,413.2 277.1,412.3 277.9,413.3 278.7,414.3 279.5,413.0 280.3,414.9 281.1,412.9 281.9,413.7 282.6,414.3 283.4,412.3 284.2,413.8 285.0,411.8 285.8,412.5 286.6,412.6 287.4,414.1 288.1,412.0 288.9,414.0 289.7,411.8 290.5,412.9 291.3,413.5 292.0,412.8 292.8,414.5 293.6,412.9 294.4,411.6 295.2,412.6 296.0,413.5 296.7,411.2 297.5,410.9 298.3,414.2 299.1,411.6 299.9,413.4 300.6,413.0 301.4,411.9 302.2,411.9 303.0,412.9 303.7,412.0 304.5,413.1 305.3,412.6 306.1,412.2 306.9,413.8 307.6,412.2 308.4,411.2 309.2,411.8 310.0,411.8 310.7,413.5 311.5,412.7 312.3,411.6 313.0,411.5 313.8,412.1 314.6,412.0 315.4,413.6 316.1,411.4 316.9,411.3 317.7,411.6 318.5,411.5 319.2,412.6 320.0,411.8 320.7,411.3 321.3,411.3 321.8,410.5 322.2,410.4 322.5,409.8 322.8,410.2 322.9,407.8 323.1,408.3 323.1,406.6 323.2,405.1 323.2,405.8 323.2,403.9 323.2,401.9 323.2,401.4 323.2,400.3 323.2,398.9 323.3,398.8 323.4,397.8 323.5,397.8 323.7,396.0 323.8,394.3 324.0,395.3 324.2,394.4 324.3,392.4 324.5,393.0 324.6,391.3 324.8,389.8 324.9,390.1 325.1,389.0 325.2,387.7 325.3,387.5 325.5,385.9 325.6,385.5 325.8,384.9 325.9,384.2 326.1,383.4 326.2,380.8 326.4,381.2 326.6,380.9 326.8,380.3 327.0,378.4 327.2,378.9 327.4,376.9 327.6,377.4 327.8,376.0 328.1,375.3 328.3,373.6 328.6,373.2 329.0,373.1 329.7,372.6 330.4,372.0 331.3,371.5 332.1,372.1 332.9,370.4 333.6,370.6 334.2,370.2 334.7,369.3 335.3,368.5 335.8,367.1 336.4,368.2 336.9,367.4 337.4,365.4 338.0,364.8 338.5,364.0 339.0,363.1 339.5,363.3 340.0,362.1 340.6,362.0 341.1,361.6 341.6,360.3 342.1,359.3 342.6,359.9 343.1,359.2 343.5,357.9 344.0,356.8 344.5,356.9 345.0,356.1 345.5,355.8 345.8,354.7 346.2,353.4 346.5,352.5 346.9,352.3 347.2,350.6 347.6,350.2 348.0,350.5 348.4,349.8 348.9,348.9 349.3,348.7 349.7,347.1 350.2,346.2 350.6,345.9 351.1,345.7 351.5,343.9 352.0,344.9 352.4,343.9 352.9,341.7 353.3,341.3 353.8,341.5 354.2,340.6 354.7,340.4 355.2,339.3 355.6,338.3 356.1,337.4 356.5,337.3 357.0,336.7 357.5,335.3 357.9,334.8 358.4,334.4 358.8,333.4 359.3,332.3 359.8,332.6 360.2,330.7 360.7,330.9 361.1,329.7 361.6,329.5 362.0,329.6 362.5,329.4 362.9,327.7 363.4,326.5 363.8,325.2 364.3,325.0 364.7,324.6 365.2,322.7 365.7,322.7 366.1,322.5 366.6,321.8 367.1,320.7 367.6,319.7 368.1,319.9 368.6,318.5 369.1,319.7 369.6,317.8 370.2,317.0 370.7,317.5 371.3,315.9 372.1,316.0 372.9,316.9 373.8,315.8 374.8,317.1 375.6,316.5 376.4,316.0 377.1,316.5 377.8,316.0 378.6,315.7 379.3,315.5 379.9,314.2 380.6,314.9 381.2,314.7 381.9,312.2 382.4,312.2 383.0,311.9 383.5,310.5 384.0,310.7 384.4,309.6 384.7,308.7 385.1,308.3 385.5,306.9 385.9,306.1 386.3,306.0 386.8,305.0 387.3,304.6 387.8,304.2 388.3,302.2 388.8,302.3 389.2,302.2 389.7,300.8 390.1,300.0 390.6,299.6 391.0,299.0 391.4,298.1 391.8,297.0 392.2,296.8 392.6,295.6 393.0,295.3 393.5,294.4 393.9,292.6 394.3,293.0 394.7,292.7 395.1,292.0 395.6,291.0 396.0,289.8 396.4,288.9 396.9,287.8 397.3,288.5 397.7,288.3 398.2,287.8 398.6,287.4 399.1,285.0 399.5,285.4 400.0,283.8 400.4,282.5 400.9,282.9 401.4,282.0 401.8,282.0 402.3,281.5 402.8,280.5 403.3,280.7 403.8,280.3 404.4,278.4 404.9,278.5 405.5,278.3 406.0,276.7 406.6,276.0 407.2,275.8 407.8,274.7 408.4,274.9 409.0,274.5 409.7,273.2 410.3,273.3 410.9,272.2 411.6,273.0 412.2,271.6 412.9,271.7 413.6,270.8 414.2,269.4 414.9,269.1 415.6,269.2 416.3,268.0 417.0,268.9 417.8,267.6 418.6,268.7 419.3,266.6 420.1,266.1 421.0,267.1 421.8,266.1 422.6,265.1 423.4,266.7 424.3,265.7 425.1,265.3 425.9,264.7 426.8,265.1 427.6,264.8 428.4,264.2 429.2,264.2 430.0,264.5 430.8,263.5 431.6,264.8 432.4,263.7 433.3,263.2 434.1,263.6 434.9,262.6 435.7,263.6 436.5,263.9 437.4,262.0 438.2,262.8 439.0,262.9 439.8,262.3 440.7,261.9 441.5,262.0 442.4,261.7 443.2,262.9 444.1,261.7 444.9,262.6 445.8,262.2 446.6,263.3 447.5,262.2 448.3,262.7 449.2,262.6 450.0,262.1 450.8,262.0 451.6,262.8 452.4,262.2 453.2,261.6 454.0,262.4 454.8,262.8 455.6,262.1 456.4,263.0 457.2,261.6 458.0,260.9 458.8,261.6 459.6,262.9 460.4,261.5 461.2,262.0 462.0,262.1 462.8,262.3 463.6,263.0 464.4,262.7 465.2,262.7 466.0,261.7 466.8,262.5 467.6,262.5 468.4,261.0 469.2,262.0 470.0,261.3 470.8,260.5 471.7,261.6 472.5,262.6 473.3,261.5 474.2,262.9 475.0,262.4 475.8,262.1 476.6,261.9 477.4,261.6 478.2,261.6 479.0,262.0 479.8,261.5 480.5,263.8 481.0,265.1 481.4,265.8 481.7,266.1 482.0,268.3 482.3,268.3 482.5,268.2 482.8,270.1 483.0,270.9 483.2,269.3 483.4,269.5 483.6,268.4 483.8,266.9 483.9,265.4 484.1,265.1 484.3,264.2 484.5,263.1 484.6,262.3 484.8,262.0 485.0,261.6 485.2,261.5 485.4,263.1 485.6,263.3 485.8,264.2 486.0,264.6 486.2,265.7 486.4,266.6 486.6,267.5 486.8,268.4 487.0,268.7 487.2,267.7 487.4,268.4 487.6,267.0 487.8,266.0 488.1,264.5 488.3,265.1 488.5,263.7 488.8,262.6 489.0,261.4 489.3,262.2 489.6,263.5 490.0,264.4 490.3,266.0 490.7,266.1 491.0,266.8 491.3,267.3 491.6,266.1 491.9,264.8 492.2,264.1 492.6,261.7 493.0,262.2 493.5,262.8 494.2,263.7 495.0,264.2 495.8,263.2 496.6,264.2 497.5,263.2 498.4,264.4 499.2,265.2 500.1,264.6 500.9,265.0 501.7,265.1 502.4,265.2 503.1,265.4 503.9,266.2 504.6,266.2 505.3,268.2 506.0,267.8 506.7,266.8 507.4,268.3 508.1,268.0 508.8,268.5 509.5,268.7 510.2,269.9 510.9,269.7 511.6,269.2 512.3,270.5 513.0,270.7 513.7,270.2 514.4,272.2 515.1,272.6 515.7,273.2 516.4,271.7 517.1,272.3 517.8,274.9 518.5,274.5 519.2,274.1 519.9,275.4 520.6,275.8 521.2,275.9 521.9,276.2 522.6,276.7 523.3,277.5 523.9,277.0 524.6,278.1 525.3,279.0 525.9,279.4 526.6,278.9 527.3,279.3 528.0,280.3 528.6,281.6 529.3,281.4 530.0,281.6 530.7,281.4 531.4,282.7 532.1,284.6 532.8,283.2 533.5,285.6 534.1,283.3 534.8,284.3 535.5,286.3 536.2,285.3 536.9,286.0 537.6,287.3 538.3,286.3 539.1,287.1 539.8,286.9 540.5,289.0 541.3,288.8 542.0,289.7 542.8,289.5 543.5,289.9 544.3,289.8 545.0,290.3 545.8,289.6 546.6,290.3 547.3,290.0 548.1,291.8 548.9,290.5 549.7,291.3 550.5,292.3 551.3,292.3 552.0,292.6 552.8,292.5 553.6,292.8 554.4,292.6 555.2,292.5 556.0,292.9 556.8,292.8 557.6,292.5 558.4,294.4 559.2,292.5 560.0,294.6 560.8,294.0 561.6,295.3 562.4,294.3 563.2,294.4 564.1,295.1 564.9,293.5 565.7,294.6 566.5,295.9 567.3,295.7 568.2,294.6 569.0,294.3 569.8,294.6 570.7,295.4 571.5,294.4 572.3,295.7 573.1,294.3 574.0,295.6 574.8,295.5 575.6,295.1 576.4,296.7 577.2,295.5 578.0,295.7 578.8,296.4 579.6,295.0 580.4,295.6 581.2,296.0 582.0,295.4 582.8,295.1 583.6,295.2 584.4,295.7 585.2,295.3 586.0,295.9 586.8,294.5 587.6,295.1 588.4,295.7 589.2,294.2 590.0,295.5 590.8,294.8 591.7,295.5 592.6,294.5 593.4,294.9 594.3,294.0 595.1,295.3 596.0,294.6 596.8,294.7 597.6,294.2 598.5,295.1 599.2,294.3 600.0,294.6 600.7,293.2 601.5,293.1 602.2,293.4 602.9,293.5 603.6,293.0 604.2,291.7 604.8,291.1 605.2,290.3 605.6,288.5 605.9,288.2 606.2,286.8 606.5,286.0 606.7,286.0 607.0,285.6 607.2,285.0 607.5,285.0 607.7,282.2 607.9,281.7 608.1,281.1 608.3,281.0 608.5,279.6 608.7,278.4 608.9,278.6 609.1,277.3 609.3,276.2 609.5,276.6 609.7,275.6 609.9,273.9 610.0,273.5 610.2,272.3 610.4,271.5 610.6,270.6 610.7,270.0 610.9,268.9 611.1,268.8 611.3,268.2 611.5,266.8 611.7,265.3 611.9,265.9 612.1,264.3 612.3,264.8 612.5,263.4 612.6,262.2 612.8,262.4 613.0,260.0 613.1,259.8 613.3,259.4 613.5,258.3 613.6,257.4 613.8,255.9 614.0,256.6 614.2,254.2 614.4,252.7 614.5,253.0 614.7,253.2 615.0,251.8 615.2,250.8 615.4,250.2 615.6,249.7 615.9,248.5 616.2,247.5 616.5,246.8 616.8,245.7 617.2,245.8 617.5,244.4 617.9,244.1 618.3,242.5 618.7,241.4 619.2,242.8 619.7,241.5 620.2,240.5 620.7,239.9 621.4,239.1 622.4,239.6 623.4,237.8 624.4,239.5 625.0,240.6 625.4,241.1 625.8,241.0 626.2,241.7 626.5,242.3 626.9,243.9 627.2,244.9 627.5,244.2 627.8,245.4 628.1,246.5 628.4,246.5 628.7,248.9 629.0,248.3 629.3,249.9 629.6,250.3 629.9,251.1 630.2,251.5 630.5,252.1 630.8,254.0 631.1,254.7 631.5,255.4 631.8,255.4 632.2,256.0 632.8,256.9 633.7,256.6 634.5,257.3 635.1,257.2 635.8,259.7 636.4,258.3 637.0,258.1 637.7,259.9 638.3,261.4 638.8,260.6 639.4,262.9 639.9,262.1 640.4,264.1 640.9,264.5 641.4,265.6 641.8,265.5 642.4,267.6 643.0,265.8 643.7,268.3 644.5,267.1 645.4,267.7 646.3,266.7 647.1,267.7 647.9,267.6 648.6,266.7 649.4,266.6 650.1,266.5 650.8,267.0 651.4,266.5 652.1,264.5 652.7,263.7 653.3,263.5 653.8,264.2 654.4,262.1 654.9,261.9 655.4,262.4 656.0,260.7 656.5,259.6 657.0,258.4 657.6,258.7 658.1,257.7 658.7,259.0 659.3,256.7 660.0,256.2 660.6,255.3 661.3,255.0 662.0,254.7 662.7,255.0 663.5,253.1 664.2,252.9 665.0,253.0 665.8,253.5 666.7,253.5 667.5,253.5 668.3,254.5 669.0,254.3 669.6,254.9 670.3,254.8 670.8,255.6 671.4,256.7 672.0,257.8 672.5,259.4 673.1,259.0 673.6,259.0 674.2,260.4 674.8,261.1 675.4,261.5 676.0,263.3 676.7,262.5 677.4,263.6 678.1,263.7 678.9,263.2 679.7,264.5 680.4,264.9 681.2,265.8 682.0,263.9 682.8,263.6 683.6,265.2 684.4,264.8 685.2,264.6 686.0,264.1 686.8,263.4 687.6,263.1 688.4,262.8 689.2,261.8 690.0,262.0 690.8,260.7 691.6,261.6 692.4,261.1 693.3,260.0 694.1,260.1 694.9,259.9 695.7,259.6 696.5,259.0 697.4,260.3 698.2,259.0 699.0,259.2 699.9,258.5 700.7,259.0 701.5,259.2 702.3,259.6 703.2,259.2 704.0,257.9 704.8,259.3 705.6,258.8 706.4,258.8 707.2,258.6 708.0,258.1 708.8,259.1 709.6,258.7 710.4,259.3 711.2,260.5 712.0,259.8 712.8,260.3 713.6,260.8 714.4,259.3 715.2,260.3 716.0,261.9 716.8,261.8 717.6,260.9 718.4,259.9 719.2,261.6 720.0,262.3 720.8,260.8 721.6,262.2 722.4,261.4 723.2,261.1 724.0,262.3 724.8,261.5 725.6,260.7 726.4,261.8 727.2,262.2 728.0,262.4 728.8,260.6 729.6,262.2 730.4,261.2 731.2,261.1 732.0,260.3 732.8,260.2 733.6,259.9 734.4,260.3 735.2,259.8 736.0,258.8 736.8,259.5 737.6,259.1 738.4,260.0 739.2,259.4 740.0,259.8 740.8,259.4 741.6,257.5 742.4,258.3 743.2,259.1 744.0,257.9 744.8,259.0 745.6,258.1 746.4,258.8 747.3,259.1 748.1,258.7 748.9,258.3 749.7,258.8 750.5,258.9 751.3,258.3 752.1,260.1 753.0,259.7 753.8,260.3 754.6,261.2 755.4,260.1 756.2,262.0 757.0,259.7 757.8,260.6 758.7,261.2 759.5,260.5 760.3,261.4 761.1,260.7 761.9,262.2 762.8,261.6 763.6,263.2 764.4,261.8 765.2,262.2 766.0,261.9 766.8,261.3 767.6,261.7 768.4,261.3 769.2,261.2 770.0,262.1 770.8,261.8 771.6,262.9 772.4,263.1 773.2,261.3 774.0,261.9 774.8,261.9 775.6,260.9 776.4,262.2 777.2,260.4 778.0,261.4 778.8,262.8 779.6,261.8 780.4,261.8 781.2,262.5 782.0,262.4 782.8,262.1 783.6,261.9 784.4,261.4 785.2,262.2 786.0,262.6 786.8,262.6 787.6,261.4 788.4,262.4 789.2,262.3 790.0,262.1 790.8,263.0 791.6,261.4 792.4,262.3 793.2,262.3 794.0,261.6 794.8,260.5 795.6,262.5 796.4,261.7 797.2,262.7 798.0,261.7 798.8,261.6 799.6,261.6 800.4,261.5 801.2,262.4 802.0,261.3 802.8,261.9 803.6,261.2 804.4,261.8 805.2,261.4 806.0,262.4 806.8,262.5 807.6,262.0 808.4,262.1 809.2,262.1 810.0,261.3 810.8,261.1 811.6,262.1 812.4,262.3 813.2,262.2 814.0,262.0 814.8,261.9 815.6,262.5 816.4,261.5 817.2,263.2 818.0,261.8 818.8,261.6 819.6,262.3 820.4,261.1 821.2,262.5 822.0,261.1 822.8,262.3 823.6,263.0 824.4,262.0 825.2,261.1 826.0,262.0 826.8,261.3 827.6,262.1 828.4,260.8 829.2,262.7 830.0,262.8 830.8,262.0 831.6,261.8 832.4,261.9 833.2,260.8 834.0,261.5 834.8,262.1 835.6,263.1 836.4,262.0 837.2,263.0 838.0,261.9 838.8,262.8 839.6,262.1 840.4,261.9 841.2,262.4 842.0,261.4 842.8,262.0 843.6,262.5 844.4,261.1 845.2,261.7 846.0,262.1 846.8,262.2 847.6,262.1 848.4,262.9 849.2,261.2 850.0,262.6 850.8,261.9 851.6,261.4 852.4,261.7 853.2,261.8 854.0,261.3 854.8,261.4 855.6,262.1 856.4,262.9 857.2,263.0 858.0,263.2 858.8,260.7 859.6,261.6 860.4,261.8 861.2,261.6 862.0,261.9 862.8,261.1 863.6,261.3 864.4,262.6 865.2,262.0 866.0,261.0 866.8,262.2 867.6,263.4 868.4,262.5 869.2,261.6 870.0,263.4 870.8,261.1 871.6,261.7 872.4,262.2 873.2,261.9 874.0,262.6 874.8,262.2 875.6,262.2 876.4,261.9 877.2,261.8 878.0,261.4 878.8,261.5 879.6,261.8 880.4,261.4 881.2,261.5 882.0,261.9 882.8,263.1 883.6,262.0 884.4,261.5 885.2,262.2 886.0,262.4 886.8,261.6 887.6,261.5 888.4,261.7 889.2,260.8 890.0,262.5 890.8,262.3 891.6,260.8 892.4,262.2 893.2,261.6 894.0,262.1 894.8,261.9 895.6,261.3 896.4,261.2 897.2,261.1 898.0,262.5 898.8,261.9 899.6,262.6 900.4,261.5 901.2,261.9 902.0,261.8 902.8,261.4 903.6,262.1 904.4,260.8 905.2,261.1 906.0,262.0 906.8,261.8 907.6,262.0 908.4,261.5 909.2,261.2 910.0,261.2 910.8,261.5 911.6,261.7 912.4,262.1 913.2,261.7 914.0,261.0 914.8,262.4 915.6,262.7 916.4,261.9 917.2,262.0 918.0,262.1 918.8,262.3 919.6,261.7 920.4,261.5 921.2,262.5 922.0,261.2 922.8,261.9 923.6,261.1 924.4,261.4 925.2,261.7 926.0,261.5 926.8,262.8 927.6,261.3 928.4,262.9 929.2,262.3 930.0,260.4 930.8,262.0 931.6,262.1 932.4,261.9 933.2,261.1 934.0,261.6 934.8,261.7 935.6,260.8 936.4,261.4 937.2,261.7 938.0,262.0 938.8,261.3 939.6,261.3 940.4,261.8 941.2,260.4 942.0,261.3 942.8,261.7 943.6,261.1 944.4,261.3 945.2,262.3 946.0,262.1 946.8,261.1 947.6,261.4 948.4,261.6 949.2,262.5 950.0,262.0 950.8,261.3 951.6,261.2 952.4,261.3 953.2,260.8 954.0,261.7 954.8,261.2 955.6,262.3 956.4,261.3 957.2,261.5 958.0,262.0 958.8,261.9 959.6,262.0 960.4,262.1 961.2,260.8 962.0,261.0 962.8,262.1 963.6,261.0 964.4,261.5 965.2,261.2 966.0,262.5" fill="none" stroke="#dccf20" stroke-width="1.05" stroke-linejoin="round" opacity="1.0"/><line x1="512" y1="362" x2="525" y2="362" stroke="#d8d028" stroke-width="1" stroke-dasharray="2 1.5"/><line x1="520" y1="353" x2="520" y2="370" stroke="#d8d028" stroke-width="0.8" stroke-dasharray="2 1.5"/><text x="50.9" y="254.6" font-size="16.5" fill="#e04862" text-anchor="start" font-weight="normal" textLength="21.5" lengthAdjust="spacingAndGlyphs" stroke="#e04862" stroke-width="0.45" >Vds</text><text x="59" y="394.6" font-size="16.2" fill="#e8dc38" text-anchor="start" font-weight="normal" textLength="21.2" lengthAdjust="spacingAndGlyphs" stroke="#e8dc38" stroke-width="0.45" >Vgs</text><text x="52.6" y="454.6" font-size="19" fill="#e88a20" text-anchor="start" font-weight="normal" textLength="47.2" lengthAdjust="spacingAndGlyphs" stroke="#e88a20" stroke-width="0.4">Vds x Id</text><text x="53" y="453.7" font-size="19" fill="#8a3ab8" text-anchor="start" font-weight="normal" textLength="47.2" lengthAdjust="spacingAndGlyphs" stroke="#8a3ab8" stroke-width="0.45" >Vds x Id</text><text x="473.4" y="437.5" font-size="16" fill="#98c840" text-anchor="start" font-weight="normal" textLength="25.9" lengthAdjust="spacingAndGlyphs" stroke="#98c840" stroke-width="0.45" >Icoil</text><text x="418" y="489.2" font-size="16.5" fill="#2cc0d0" text-anchor="start" font-weight="normal" textLength="10.5" lengthAdjust="spacingAndGlyphs" stroke="#2cc0d0" stroke-width="0.45" >Id</text><path d="M29.5,370.8 h11.5 l5.5,6.599999999999966 l-5.5,6.600000000000023 h-11.5 a2,2 0 0 1 -2,-2 v-9.199999999999989 a2,2 0 0 1 2,-2 Z" fill="#1c1a06" stroke="#a8a030" stroke-width="1.4"/><text x="37" y="380.0" font-size="7.4" font-weight="bold" fill="#c8c040" text-anchor="middle" letter-spacing="1.2">C1</text><path d="M29.5,451.6 h11.5 l5.5,6.199999999999989 l-5.5,6.199999999999989 h-11.5 a2,2 0 0 1 -2,-2 v-8.399999999999977 a2,2 0 0 1 2,-2 Z" fill="#10060f" stroke="#6a3a8a" stroke-width="1.4"/><text x="37" y="460.40000000000003" font-size="7.4" font-weight="bold" fill="#ddd5cc" text-anchor="middle" letter-spacing="1.2">M2</text><path d="M29.5,488.3 h11.5 l5.5,6.349999999999966 l-5.5,6.350000000000023 h-11.5 a2,2 0 0 1 -2,-2 v-8.699999999999989 a2,2 0 0 1 2,-2 Z" fill="#28c4d4" /><text x="37" y="497.25" font-size="7.4" font-weight="bold" fill="#0a3a48" text-anchor="middle" letter-spacing="1.2">C2</text><rect x="26" y="292.3" width="11" height="1.2" fill="#2a8a90" rx="0" /><text x="962" y="186.3" font-size="7.2" fill="#3ab5c5" text-anchor="end" font-weight="normal" >400 A</text><text x="962" y="225.10000000000002" font-size="7.2" fill="#3ab5c5" text-anchor="end" font-weight="normal" >350 A</text><text x="962" y="263.9" font-size="7.2" fill="#3ab5c5" text-anchor="end" font-weight="normal" >300 A</text><text x="962" y="302.7" font-size="7.2" fill="#3ab5c5" text-anchor="end" font-weight="normal" >250 A</text><text x="962" y="341.5" font-size="7.2" fill="#3ab5c5" text-anchor="end" font-weight="normal" >200 A</text><text x="962" y="380.3" font-size="7.2" fill="#3ab5c5" text-anchor="end" font-weight="normal" >150 A</text><text x="962" y="419.1" font-size="7.2" fill="#3ab5c5" text-anchor="end" font-weight="normal" >100 A</text><text x="962" y="457.9" font-size="7.2" fill="#3ab5c5" text-anchor="end" font-weight="normal" >50 A</text><text x="962" y="496.7" font-size="7.2" fill="#3ab5c5" text-anchor="end" font-weight="normal" >0 A</text><text x="60.5" y="530" font-size="7.16" fill="#c0c0c0" text-anchor="middle" font-weight="normal" >45.92 μs</text><text x="154.5" y="530" font-size="7.16" fill="#c0c0c0" text-anchor="middle" font-weight="normal" >45.96 μs</text><text x="248.5" y="530" font-size="7.16" fill="#c0c0c0" text-anchor="middle" font-weight="normal" >46 μs</text><text x="342.5" y="530" font-size="7.16" fill="#c0c0c0" text-anchor="middle" font-weight="normal" >46.04 μs</text><text x="436.5" y="530" font-size="7.16" fill="#c0c0c0" text-anchor="middle" font-weight="normal" >46.08 μs</text><text x="530.5" y="530" font-size="7.16" fill="#c0c0c0" text-anchor="middle" font-weight="normal" >46.12 μs</text><text x="624.5" y="530" font-size="7.16" fill="#c0c0c0" text-anchor="middle" font-weight="normal" >46.16 μs</text><text x="718.5" y="530" font-size="7.16" fill="#c0c0c0" text-anchor="middle" font-weight="normal" >46.20 μs</text><text x="812.5" y="530" font-size="7.16" fill="#c0c0c0" text-anchor="middle" font-weight="normal" >46.24 μs</text><text x="906.5" y="530" font-size="7.16" fill="#c0c0c0" text-anchor="middle" font-weight="normal" >46.28 μs</text><rect x="25.5" y="16.5" width="940" height="517.4" fill="none" rx="0" stroke="#e6e6e6" stroke-width="1.5" /><circle cx="970.7" cy="270.5" r="1.1" fill="#d8d8d8"/><circle cx="970.7" cy="275.1" r="1.1" fill="#d8d8d8"/><circle cx="970.7" cy="279.7" r="1.1" fill="#d8d8d8"/><rect x="974.5" y="15.5" width="81" height="519" fill="#333" rx="0" stroke="#4a4a4a" stroke-width="1" /><text x="1015" y="23.5" font-size="8.6" fill="#f0f0f0" text-anchor="middle" font-weight="bold" >Add New...</text><rect x="979.4" y="29.4" width="33.60000000000002" height="19.0" fill="url(#bg1)" rx="3" stroke="#4e4844" stroke-width="1" /><text x="996.2" y="41.9" font-size="8.36" fill="#e4e4e4" text-anchor="middle" font-weight="normal" textLength="26.6" lengthAdjust="spacingAndGlyphs" >Cursors</text><rect x="1018.2" y="29.4" width="33.59999999999991" height="19.0" fill="url(#bg1)" rx="3" stroke="#4e4844" stroke-width="1" /><text x="1035.0" y="41.9" font-size="8.36" fill="#e4e4e4" text-anchor="middle" font-weight="normal" textLength="23.66" lengthAdjust="spacingAndGlyphs" >Callout</text><rect x="979.4" y="54.2" width="33.60000000000002" height="19.39999999999999" fill="url(#bg1)" rx="3" stroke="#4e4844" stroke-width="1" /><text x="996.2" y="66.9" font-size="8.36" fill="#e4e4e4" text-anchor="middle" font-weight="normal" textLength="29.57" lengthAdjust="spacingAndGlyphs" >Measure</text><rect x="1018.2" y="54.2" width="33.59999999999991" height="19.39999999999999" fill="url(#bg1)" rx="3" stroke="#4e4844" stroke-width="1" /><text x="1035.0" y="66.9" font-size="8.36" fill="#e4e4e4" text-anchor="middle" font-weight="normal" textLength="24.08" lengthAdjust="spacingAndGlyphs" >Search</text><rect x="979.4" y="78.5" width="33.60000000000002" height="19.900000000000006" fill="url(#bg1)" rx="3" stroke="#4e4844" stroke-width="1" /><text x="996.2" y="87.65" font-size="8.36" fill="#e4e4e4" text-anchor="middle" font-weight="normal" textLength="25.34" lengthAdjust="spacingAndGlyphs" >Results</text><text x="996.2" y="96.05" font-size="8.36" fill="#e4e4e4" text-anchor="middle" font-weight="normal" textLength="18.17" lengthAdjust="spacingAndGlyphs" >Table</text><rect x="1018.2" y="78.5" width="33.59999999999991" height="19.900000000000006" fill="url(#bg1)" rx="3" stroke="#4e4844" stroke-width="1" /><text x="1035.0" y="91.45" font-size="8.36" fill="#e4e4e4" text-anchor="middle" font-weight="normal" textLength="13.1" lengthAdjust="spacingAndGlyphs" >Plot</text><line x1="977" y1="101.6" x2="1053" y2="101.6" stroke="#4a4a4a" stroke-width="1" /><rect x="979.4" y="105.3" width="33.60000000000002" height="19.400000000000006" fill="url(#bg1)" rx="3" stroke="#4e4844" stroke-width="1" /><text x="996.2" y="118.0" font-size="8.36" fill="#e4e4e4" text-anchor="middle" font-weight="normal" ></text><rect x="1018.2" y="105.3" width="33.59999999999991" height="19.400000000000006" fill="url(#bg1)" rx="3" stroke="#4e4844" stroke-width="1" /><text x="1035.0" y="118.0" font-size="8.36" fill="#e4e4e4" text-anchor="middle" font-weight="normal" textLength="23.65" lengthAdjust="spacingAndGlyphs" >More...</text><rect x="991.5" y="108.5" width="11" height="11" fill="none" stroke="#ddd" stroke-width="0.9" stroke-dasharray="1.5 1.2"/><circle cx="997.5" cy="114" r="2.6" fill="none" stroke="#ddd" stroke-width="0.9"/><path d="M995.6,116 l-2.2,2.2" stroke="#ddd" stroke-width="1"/><path d="M1000,116 l3,4 l0.8,-1.5 l1.5,0.5 Z" fill="#ddd"/><line x1="977" y1="129.7" x2="1053" y2="129.7" stroke="#4a4a4a" stroke-width="1" /><rect x="976.7" y="137.3" width="77.3" height="30" fill="#c8c8c8" rx="2.5" /><rect x="976.7" y="137.3" width="77.3" height="10" fill="#555" rx="2.5" /><rect x="976.7" y="142.3" width="77.3" height="5" fill="#555" rx="0" /><text x="979.8" y="145.10000000000002" font-size="8.36" fill="#f0f0f0" text-anchor="start" font-weight="normal" textLength="24.92" lengthAdjust="spacingAndGlyphs" >Meas 1</text><rect x="1022.3" y="138.4" width="28.9" height="7.2" rx="3.6" fill="#3c3c3c"/><path d="M1047.5,138.8 a3.2,3.2 0 0 1 0,6.4 h-11.8 l3.8,-6.4 Z" fill="#8c8c8c"/><path d="M1026,138.8 h13.5 l-3.8,6.4 h-9.7 a3.2,3.2 0 0 1 0,-6.4 Z" fill="#e8405e"/><text x="1029.3" y="144.60000000000002" font-size="6.6" fill="#f4d0d8" text-anchor="middle" font-weight="normal" >3</text><text x="1044.6" y="144.9" font-size="7" fill="#222" text-anchor="middle" font-weight="bold" >+</text><text x="979.5" y="155.3" font-size="8.36" fill="#2a2a2a" text-anchor="start" font-weight="normal" textLength="14.97" lengthAdjust="spacingAndGlyphs" >Eon'</text><text x="979.5" y="164.5" font-size="8.36" fill="#2a2a2a" text-anchor="start" font-weight="normal" textLength="15.63" lengthAdjust="spacingAndGlyphs" >Eon:</text><text x="1017.7" y="164.5" font-size="8.36" fill="#2a2a2a" text-anchor="start" font-weight="normal" textLength="31.26" lengthAdjust="spacingAndGlyphs" >3.190 mJ</text><rect x="976.7" y="172.3" width="77.3" height="30" fill="#c8c8c8" rx="2.5" /><rect x="976.7" y="172.3" width="77.3" height="10" fill="#555" rx="2.5" /><rect x="976.7" y="177.3" width="77.3" height="5" fill="#555" rx="0" /><text x="979.8" y="180.10000000000002" font-size="8.36" fill="#f0f0f0" text-anchor="start" font-weight="normal" textLength="24.92" lengthAdjust="spacingAndGlyphs" >Meas 2</text><rect x="1022.3" y="173.4" width="28.9" height="7.2" rx="3.6" fill="#3c3c3c"/><path d="M1047.5,173.8 a3.2,3.2 0 0 1 0,6.4 h-11.8 l3.8,-6.4 Z" fill="#8c8c8c"/><path d="M1026,173.8 h13.5 l-3.8,6.4 h-9.7 a3.2,3.2 0 0 1 0,-6.4 Z" fill="#e8405e"/><text x="1029.3" y="179.60000000000002" font-size="6.6" fill="#f4d0d8" text-anchor="middle" font-weight="normal" >3</text><text x="1044.6" y="179.9" font-size="7" fill="#222" text-anchor="middle" font-weight="bold" >+</text><text x="979.5" y="190.3" font-size="8.36" fill="#2a2a2a" text-anchor="start" font-weight="normal" textLength="14.83" lengthAdjust="spacingAndGlyphs" >Eoff'</text><text x="979.5" y="199.5" font-size="8.36" fill="#2a2a2a" text-anchor="start" font-weight="normal" textLength="15.49" lengthAdjust="spacingAndGlyphs" >Eoff:</text><text x="1017.7" y="199.5" font-size="8.36" fill="#2a2a2a" text-anchor="start" font-weight="normal" textLength="31.26" lengthAdjust="spacingAndGlyphs" >1.666 mJ</text><rect x="976.7" y="207.3" width="77.3" height="30" fill="#c8c8c8" rx="2.5" /><rect x="976.7" y="207.3" width="77.3" height="10" fill="#555" rx="2.5" /><rect x="976.7" y="212.3" width="77.3" height="5" fill="#555" rx="0" /><text x="979.8" y="215.10000000000002" font-size="8.36" fill="#f0f0f0" text-anchor="start" font-weight="normal" textLength="24.92" lengthAdjust="spacingAndGlyphs" >Meas 3</text><rect x="1022.3" y="208.4" width="28.9" height="7.2" rx="3.6" fill="#3c3c3c"/><path d="M1047.5,208.8 a3.2,3.2 0 0 1 0,6.4 h-11.8 l3.8,-6.4 Z" fill="#8c8c8c"/><path d="M1026,208.8 h13.5 l-3.8,6.4 h-9.7 a3.2,3.2 0 0 1 0,-6.4 Z" fill="#e8405e"/><text x="1029.3" y="214.60000000000002" font-size="6.6" fill="#f4d0d8" text-anchor="middle" font-weight="normal" >3</text><text x="1044.6" y="214.9" font-size="7" fill="#222" text-anchor="middle" font-weight="bold" >+</text><text x="979.5" y="225.3" font-size="8.36" fill="#2a2a2a" text-anchor="start" font-weight="normal" textLength="23.0" lengthAdjust="spacingAndGlyphs" >Vpeak'</text><text x="979.5" y="234.5" font-size="8.36" fill="#2a2a2a" text-anchor="start" font-weight="normal" textLength="23.66" lengthAdjust="spacingAndGlyphs" >Vpeak:</text><text x="1017.7" y="234.5" font-size="8.36" fill="#2a2a2a" text-anchor="start" font-weight="normal" textLength="26.2" lengthAdjust="spacingAndGlyphs" >835.2 V</text><rect x="976.7" y="242.3" width="77.3" height="30" fill="#c8c8c8" rx="2.5" /><rect x="976.7" y="242.3" width="77.3" height="10" fill="#000" rx="2.5" /><rect x="976.7" y="247.3" width="77.3" height="5" fill="#000" rx="0" /><rect x="977.2" y="242.8" width="76.3" height="29.5" fill="none" rx="2.5" stroke="#000" stroke-width="1.2" /><text x="979.8" y="250.10000000000002" font-size="8.36" fill="#f0f0f0" text-anchor="start" font-weight="normal" textLength="24.92" lengthAdjust="spacingAndGlyphs" >Meas 4</text><rect x="1022.3" y="243.4" width="28.9" height="7.2" rx="3.6" fill="#3c3c3c"/><path d="M1047.5,243.8 a3.2,3.2 0 0 1 0,6.4 h-11.8 l3.8,-6.4 Z" fill="#8c8c8c"/><path d="M1026,243.8 h13.5 l-3.8,6.4 h-9.7 a3.2,3.2 0 0 1 0,-6.4 Z" fill="#e8405e"/><text x="1029.3" y="249.60000000000002" font-size="6.6" fill="#f4d0d8" text-anchor="middle" font-weight="normal" >3</text><text x="1044.6" y="249.9" font-size="7" fill="#222" text-anchor="middle" font-weight="bold" >+</text><text x="979.5" y="260.3" font-size="8.36" fill="#2a2a2a" text-anchor="start" font-weight="normal" textLength="20.04" lengthAdjust="spacingAndGlyphs" >Ipeak'</text><text x="979.5" y="269.5" font-size="8.36" fill="#2a2a2a" text-anchor="start" font-weight="normal" textLength="20.7" lengthAdjust="spacingAndGlyphs" >Ipeak:</text><text x="1017.7" y="269.5" font-size="8.36" fill="#2a2a2a" text-anchor="start" font-weight="normal" textLength="25.78" lengthAdjust="spacingAndGlyphs" >170.5 A</text><rect x="976.7" y="277.3" width="77.3" height="30" fill="#c8c8c8" rx="2.5" /><rect x="976.7" y="277.3" width="77.3" height="10" fill="#555" rx="2.5" /><rect x="976.7" y="282.3" width="77.3" height="5" fill="#555" rx="0" /><text x="979.8" y="285.1" font-size="8.36" fill="#f0f0f0" text-anchor="start" font-weight="normal" textLength="24.92" lengthAdjust="spacingAndGlyphs" >Meas 5</text><rect x="1037.6" y="278.40000000000003" width="13.6" height="7.2" rx="3.6" fill="#3c3c3c"/><rect x="1038" y="278.8" width="12.8" height="6.4" rx="3.2" fill="#80cc20"/><text x="1044.4" y="284.6" font-size="6.6" fill="#1a3a00" text-anchor="middle" font-weight="normal" >4</text><text x="979.5" y="295.3" font-size="8.36" fill="#2a2a2a" text-anchor="start" font-weight="normal" textLength="33.8" lengthAdjust="spacingAndGlyphs" >Amplitude</text><text x="979.5" y="304.5" font-size="8.36" fill="#2a2a2a" text-anchor="start" font-weight="normal" textLength="36.25" lengthAdjust="spacingAndGlyphs" >μ': 107.7 A</text><rect x="976.7" y="312.3" width="77.3" height="30" fill="#c8c8c8" rx="2.5" /><rect x="976.7" y="312.3" width="77.3" height="10" fill="#555" rx="2.5" /><rect x="976.7" y="317.3" width="77.3" height="5" fill="#555" rx="0" /><text x="979.8" y="320.1" font-size="8.36" fill="#f0f0f0" text-anchor="start" font-weight="normal" textLength="24.92" lengthAdjust="spacingAndGlyphs" >Meas 6</text><rect x="1037.6" y="313.40000000000003" width="13.6" height="7.2" rx="3.6" fill="#3c3c3c"/><rect x="1038" y="313.8" width="12.8" height="6.4" rx="3.2" fill="#e8405e"/><text x="1044.4" y="319.6" font-size="6.6" fill="#f4d0d8" text-anchor="middle" font-weight="normal" >3</text><text x="979.5" y="330.3" font-size="8.36" fill="#2a2a2a" text-anchor="start" font-weight="normal" textLength="33.8" lengthAdjust="spacingAndGlyphs" >Amplitude</text><text x="979.5" y="339.5" font-size="8.36" fill="#2a2a2a" text-anchor="start" font-weight="normal" textLength="36.25" lengthAdjust="spacingAndGlyphs" >μ': 595.3 V</text><rect x="26" y="537.6" width="48" height="40.4" fill="#c8c8c8" rx="2" /><rect x="26" y="537.6" width="48" height="9.7" fill="#4c4a22" rx="2" /><rect x="26" y="542" width="48" height="5.3" fill="#4c4a22" rx="0" /><text x="28.6" y="545.2" font-size="8.36" fill="#e0d030" text-anchor="start" font-weight="normal" textLength="16.05" lengthAdjust="spacingAndGlyphs" >Ch 1</text><text x="29" y="555.9" font-size="8.36" fill="#333" text-anchor="start" font-weight="normal" textLength="23.23" lengthAdjust="spacingAndGlyphs" >5 V/div</text><text x="29" y="576.3" font-size="8.36" fill="#333" text-anchor="start" font-weight="normal" textLength="21.54" lengthAdjust="spacingAndGlyphs" >1 GHz</text><path d="M65.6,569.4 v2.8 h1.6 l2,1.9 l1.7,-1.5" fill="none" stroke="#222" stroke-width="1.6" stroke-linejoin="round"/><rect x="77" y="537.6" width="48" height="40.4" fill="#c8c8c8" rx="2" /><rect x="77" y="537.6" width="48" height="9.7" fill="#22c8d5" rx="2" /><rect x="77" y="542" width="48" height="5.3" fill="#22c8d5" rx="0" /><text x="79.6" y="545.2" font-size="8.36" fill="#0c3a40" text-anchor="start" font-weight="normal" textLength="16.05" lengthAdjust="spacingAndGlyphs" >Ch 2</text><text x="80" y="555.9" font-size="8.36" fill="#333" text-anchor="start" font-weight="normal" textLength="27.04" lengthAdjust="spacingAndGlyphs" >50 A/div</text><text x="80" y="566.1" font-size="8.36" fill="#333" text-anchor="start" font-weight="normal" textLength="16.25" lengthAdjust="spacingAndGlyphs" >50 Ω</text><text x="80" y="576.3" font-size="8.36" fill="#333" text-anchor="start" font-weight="normal" textLength="21.54" lengthAdjust="spacingAndGlyphs" >1 GHz</text><path d="M116.6,569.4 v2.8 h1.6 l2,1.9 l1.7,-1.5" fill="none" stroke="#222" stroke-width="1.6" stroke-linejoin="round"/><rect x="128" y="537.6" width="48" height="40.4" fill="#c8c8c8" rx="2" /><rect x="128" y="537.6" width="48" height="9.7" fill="#4a2228" rx="2" /><rect x="128" y="542" width="48" height="5.3" fill="#4a2228" rx="0" /><text x="130.6" y="545.2" font-size="8.36" fill="#ecdcdc" text-anchor="start" font-weight="normal" textLength="16.05" lengthAdjust="spacingAndGlyphs" >Ch 3</text><text x="131" y="555.9" font-size="8.36" fill="#333" text-anchor="start" font-weight="normal" textLength="31.69" lengthAdjust="spacingAndGlyphs" >100 V/div</text><text x="131" y="566.1" font-size="8.36" fill="#333" text-anchor="start" font-weight="normal" textLength="18.35" lengthAdjust="spacingAndGlyphs" >1 MΩ</text><text x="131" y="576.3" font-size="8.36" fill="#333" text-anchor="start" font-weight="normal" textLength="30.41" lengthAdjust="spacingAndGlyphs" >100 MHz</text><path d="M167.6,569.4 v2.8 h1.6 l2,1.9 l1.7,-1.5" fill="none" stroke="#222" stroke-width="1.6" stroke-linejoin="round"/><rect x="179" y="537.6" width="48" height="40.4" fill="#c8c8c8" rx="2" /><rect x="179" y="537.6" width="48" height="9.7" fill="#38432a" rx="2" /><rect x="179" y="542" width="48" height="5.3" fill="#38432a" rx="0" /><text x="181.6" y="545.2" font-size="8.36" fill="#8ed030" text-anchor="start" font-weight="normal" textLength="16.05" lengthAdjust="spacingAndGlyphs" >Ch 4</text><text x="182" y="555.9" font-size="8.36" fill="#333" text-anchor="start" font-weight="normal" textLength="27.04" lengthAdjust="spacingAndGlyphs" >50 A/div</text><text x="182" y="566.1" font-size="8.36" fill="#333" text-anchor="start" font-weight="normal" textLength="18.35" lengthAdjust="spacingAndGlyphs" >1 MΩ</text><text x="182" y="576.3" font-size="8.36" fill="#333" text-anchor="start" font-weight="normal" textLength="30.41" lengthAdjust="spacingAndGlyphs" >500 MHz</text><path d="M218.6,569.4 v2.8 h1.6 l2,1.9 l1.7,-1.5" fill="none" stroke="#222" stroke-width="1.6" stroke-linejoin="round"/><rect x="230" y="537.6" width="48" height="40.4" fill="#c8c8c8" rx="2" /><rect x="230" y="537.6" width="48" height="9.7" fill="#553a1e" rx="2" /><rect x="230" y="542" width="48" height="5.3" fill="#553a1e" rx="0" /><text x="232.6" y="545.2" font-size="8.36" fill="#f0a030" text-anchor="start" font-weight="normal" textLength="23.23" lengthAdjust="spacingAndGlyphs" >Math 1</text><text x="233" y="555.9" font-size="8.36" fill="#333" text-anchor="start" font-weight="normal" textLength="35.49" lengthAdjust="spacingAndGlyphs" >9.7521 k...</text><text x="233" y="566.1" font-size="8.36" fill="#333" text-anchor="start" font-weight="normal" textLength="30.84" lengthAdjust="spacingAndGlyphs" >Ch3*Ch2</text><text x="233" y="576.3" font-size="8.36" fill="#333" text-anchor="start" font-weight="normal" textLength="24.92" lengthAdjust="spacingAndGlyphs" >Meas 1</text><rect x="281" y="537.6" width="48" height="40.4" fill="#c8c8c8" rx="2" /><rect x="281" y="537.6" width="48" height="9.7" fill="#3a2c45" rx="2" /><rect x="281" y="542" width="48" height="5.3" fill="#3a2c45" rx="0" /><text x="283.6" y="545.2" font-size="8.36" fill="#e8e8e8" text-anchor="start" font-weight="normal" textLength="23.23" lengthAdjust="spacingAndGlyphs" >Math 2</text><text x="284" y="555.9" font-size="8.36" fill="#333" text-anchor="start" font-weight="normal" textLength="35.49" lengthAdjust="spacingAndGlyphs" >9.7521 k...</text><text x="284" y="566.1" font-size="8.36" fill="#333" text-anchor="start" font-weight="normal" textLength="30.84" lengthAdjust="spacingAndGlyphs" >Ch3*Ch2</text><text x="284" y="576.3" font-size="8.36" fill="#333" text-anchor="start" font-weight="normal" textLength="24.92" lengthAdjust="spacingAndGlyphs" >Meas 2</text><text x="106.7" y="566.1" font-size="8.36" fill="#333" text-anchor="start" font-weight="normal" textLength="10.56" lengthAdjust="spacingAndGlyphs" >DS</text><text x="156.7" y="566.1" font-size="8.36" fill="#333" text-anchor="start" font-weight="normal" textLength="10.56" lengthAdjust="spacingAndGlyphs" >DS</text><path d="M30.1,565.6 V562.6 A3.3,3.3 0 0 1 36.7,562.6 V565.6" fill="none" stroke="#5a5a5a" stroke-width="1.8"/><line x1="487.7" y1="537" x2="487.7" y2="578" stroke="#4a4a4a" stroke-width="1" /><defs><linearGradient id="bg1" x1="0" y1="0" x2="0" y2="1"><stop offset="0" stop-color="#363636"/><stop offset="1" stop-color="#242424"/></linearGradient></defs><rect x="493.3" y="536.5" width="20.999999999999943" height="41.3" fill="url(#bg1)" rx="3.5" stroke="#4e4844" stroke-width="1" /><line x1="495.8" y1="541.4" x2="511.79999999999995" y2="541.4" stroke="#c03030" stroke-width="1.5" /><text x="503.79999999999995" y="554.3" font-size="8.74" fill="#e0e0e0" text-anchor="middle" font-weight="normal" textLength="13.88" lengthAdjust="spacingAndGlyphs" >Add</text><text x="503.79999999999995" y="563.0" font-size="8.74" fill="#e0e0e0" text-anchor="middle" font-weight="normal" textLength="15.6" lengthAdjust="spacingAndGlyphs" >New</text><text x="503.79999999999995" y="571.6999999999999" font-size="8.74" fill="#e0e0e0" text-anchor="middle" font-weight="normal" textLength="17.34" lengthAdjust="spacingAndGlyphs" >Math</text><rect x="517.3" y="536.5" width="21.0" height="41.3" fill="url(#bg1)" rx="3.5" stroke="#4e4844" stroke-width="1" /><line x1="519.8" y1="541.4" x2="535.8" y2="541.4" stroke="#a8a8a8" stroke-width="1.5" /><text x="527.8" y="554.3" font-size="8.74" fill="#e0e0e0" text-anchor="middle" font-weight="normal" textLength="13.88" lengthAdjust="spacingAndGlyphs" >Add</text><text x="527.8" y="563.0" font-size="8.74" fill="#e0e0e0" text-anchor="middle" font-weight="normal" textLength="15.6" lengthAdjust="spacingAndGlyphs" >New</text><text x="527.8" y="571.6999999999999" font-size="8.74" fill="#e0e0e0" text-anchor="middle" font-weight="normal" textLength="12.14" lengthAdjust="spacingAndGlyphs" >Ref</text><rect x="541.7" y="536.5" width="21.0" height="41.3" fill="url(#bg1)" rx="3.5" stroke="#4e4844" stroke-width="1" /><line x1="544.2" y1="541.4" x2="560.2" y2="541.4" stroke="#9050c0" stroke-width="1.5" /><text x="552.2" y="554.3" font-size="8.74" fill="#e0e0e0" text-anchor="middle" font-weight="normal" textLength="13.88" lengthAdjust="spacingAndGlyphs" >Add</text><text x="552.2" y="563.0" font-size="8.74" fill="#e0e0e0" text-anchor="middle" font-weight="normal" textLength="15.6" lengthAdjust="spacingAndGlyphs" >New</text><text x="552.2" y="571.6999999999999" font-size="8.74" fill="#e0e0e0" text-anchor="middle" font-weight="normal" textLength="13.44" lengthAdjust="spacingAndGlyphs" >Bus</text><line x1="568.3" y1="537" x2="568.3" y2="578" stroke="#4a4a4a" stroke-width="1" /><rect x="574.3" y="536.5" width="21.4" height="41.3" fill="url(#bg1)" rx="3.5" stroke="#4e4844" stroke-width="1" /><line x1="577" y1="541.4" x2="593" y2="541.4" stroke="#464646" stroke-width="1.5" /><text x="585" y="563.6" font-size="8.51" fill="#e0e0e0" text-anchor="middle" font-weight="normal" textLength="16.89" lengthAdjust="spacingAndGlyphs" >DVM</text><line x1="601.7" y1="537" x2="601.7" y2="578" stroke="#4a4a4a" stroke-width="1" /><rect x="608.1" y="538.1" width="100.29999999999995" height="39.8" fill="#c8c8c8" rx="2" /><rect x="608.1" y="538.1" width="100.29999999999995" height="9.6" fill="#5a5a5a" rx="2" /><rect x="608.1" y="542" width="100.29999999999995" height="5.7" fill="#5a5a5a" rx="0" /><text x="610.6" y="545.8" font-size="8.58" fill="#f0f0f0" text-anchor="start" font-weight="normal" textLength="49.41" lengthAdjust="spacingAndGlyphs" >AFG: Arbitrary</text><text x="609.8" y="556" font-size="8.36" fill="#333" text-anchor="start" font-weight="normal" textLength="62.52" lengthAdjust="spacingAndGlyphs" >Freq: 20.9644 kHz</text><text x="609.8" y="566.2" font-size="8.36" fill="#333" text-anchor="start" font-weight="normal" textLength="39.71" lengthAdjust="spacingAndGlyphs" >Amp: 5 Vpp</text><text x="609.8" y="576.4" font-size="8.36" fill="#333" text-anchor="start" font-weight="normal" textLength="42.1" lengthAdjust="spacingAndGlyphs" >Offset: 2.5 V</text><rect x="676.4" y="548.3" width="28.5" height="28.1" rx="3" fill="#bcbcbc" stroke="#8a8a8a" stroke-width="0.8"/><text x="690.6" y="565" font-size="7.8" fill="#222" text-anchor="middle" font-weight="bold" >Burst</text><rect x="712.6" y="538.1" width="105.79999999999995" height="39.8" fill="#c8c8c8" rx="2" /><rect x="712.6" y="538.1" width="105.79999999999995" height="9.6" fill="#5a5a5a" rx="2" /><rect x="712.6" y="542" width="105.79999999999995" height="5.7" fill="#5a5a5a" rx="0" /><text x="715.1" y="545.8" font-size="8.58" fill="#f0f0f0" text-anchor="start" font-weight="normal" textLength="35.12" lengthAdjust="spacingAndGlyphs" >Horizontal</text><text x="715" y="556" font-size="8.36" fill="#333" text-anchor="start" font-weight="normal" textLength="30.57" lengthAdjust="spacingAndGlyphs" >10 μs/div</text><text x="771.7" y="556" font-size="8.36" fill="#333" text-anchor="start" font-weight="normal" textLength="22.97" lengthAdjust="spacingAndGlyphs" >100 μs</text><text x="715" y="566.2" font-size="8.36" fill="#333" text-anchor="start" font-weight="normal" textLength="48.58" lengthAdjust="spacingAndGlyphs" >SR: 12.5 GS/s</text><text x="771.7" y="566.2" font-size="8.36" fill="#333" text-anchor="start" font-weight="normal" textLength="27.04" lengthAdjust="spacingAndGlyphs" >80 ps/pt</text><text x="715" y="576.4" font-size="8.36" fill="#333" text-anchor="start" font-weight="normal" textLength="47.31" lengthAdjust="spacingAndGlyphs" >RL: 1.25 Mpts</text><text x="780" y="576.4" font-size="8.36" fill="#333" text-anchor="start" font-weight="normal" textLength="15.21" lengthAdjust="spacingAndGlyphs" >10%</text><path d="M770.5,570 h4.5 v4 l-2.25,2 l-2.25,-2 Z" fill="#e07a10"/><rect x="822.7" y="538.1" width="84.59999999999991" height="39.8" fill="#c8c8c8" rx="2" /><rect x="822.7" y="538.1" width="84.59999999999991" height="9.6" fill="#5a5a5a" rx="2" /><rect x="822.7" y="542" width="84.59999999999991" height="5.7" fill="#5a5a5a" rx="0" /><text x="825.2" y="545.8" font-size="8.58" fill="#f0f0f0" text-anchor="start" font-weight="normal" textLength="24.42" lengthAdjust="spacingAndGlyphs" >Trigger</text><text x="825" y="556" font-size="8.36" fill="#333" text-anchor="start" font-weight="normal" textLength="13.1" lengthAdjust="spacingAndGlyphs" >Aux</text><text x="871" y="556" font-size="8.36" fill="#333" text-anchor="start" font-weight="normal" textLength="26.19" lengthAdjust="spacingAndGlyphs" >200 mV</text><path d="M857,557 l3,0 l4,-6 l3,0" fill="none" stroke="#5050c0" stroke-width="0.9"/><rect x="911.7" y="538.1" width="79.0" height="39.8" fill="#c8c8c8" rx="2" /><rect x="911.7" y="538.1" width="79.0" height="9.6" fill="#5a5a5a" rx="2" /><rect x="911.7" y="542" width="79.0" height="5.7" fill="#5a5a5a" rx="0" /><text x="914.2" y="545.8" font-size="8.58" fill="#f0f0f0" text-anchor="start" font-weight="normal" textLength="37.72" lengthAdjust="spacingAndGlyphs" >Acquisition</text><text x="913.5" y="556" font-size="8.36" fill="#333" text-anchor="start" font-weight="normal" textLength="17.75" lengthAdjust="spacingAndGlyphs" >Auto,</text><text x="957" y="556" font-size="8.36" fill="#333" text-anchor="start" font-weight="normal" textLength="27.04" lengthAdjust="spacingAndGlyphs" >Analyze</text><text x="913.5" y="566.2" font-size="8.36" fill="#333" text-anchor="start" font-weight="normal" textLength="52.38" lengthAdjust="spacingAndGlyphs" >Sample: 12 bits</text><text x="913.5" y="576.4" font-size="8.36" fill="#333" text-anchor="start" font-weight="normal" textLength="27.04" lengthAdjust="spacingAndGlyphs" >43 Acqs</text><line x1="997.5" y1="537" x2="997.5" y2="578" stroke="#4a4a4a" stroke-width="1" /><rect x="1003.2" y="537" width="47.6" height="18" fill="#f0e800" rx="3" /><text x="1027" y="547.8" font-size="8.14" fill="#111" text-anchor="middle" font-weight="bold" textLength="22.21" lengthAdjust="spacingAndGlyphs" >Ready</text><rect x="1003.2" y="559.3" width="47.6" height="18" fill="#c8c8c8" rx="2" /><text x="1027" y="566.5" font-size="8.36" fill="#333" text-anchor="middle" font-weight="normal" textLength="41.84" lengthAdjust="spacingAndGlyphs" >16 Jan 2023</text><text x="1027" y="575.5" font-size="8.36" fill="#333" text-anchor="middle" font-weight="normal" textLength="38.87" lengthAdjust="spacingAndGlyphs" >3:31:17 PM</text></svg></body></html>
